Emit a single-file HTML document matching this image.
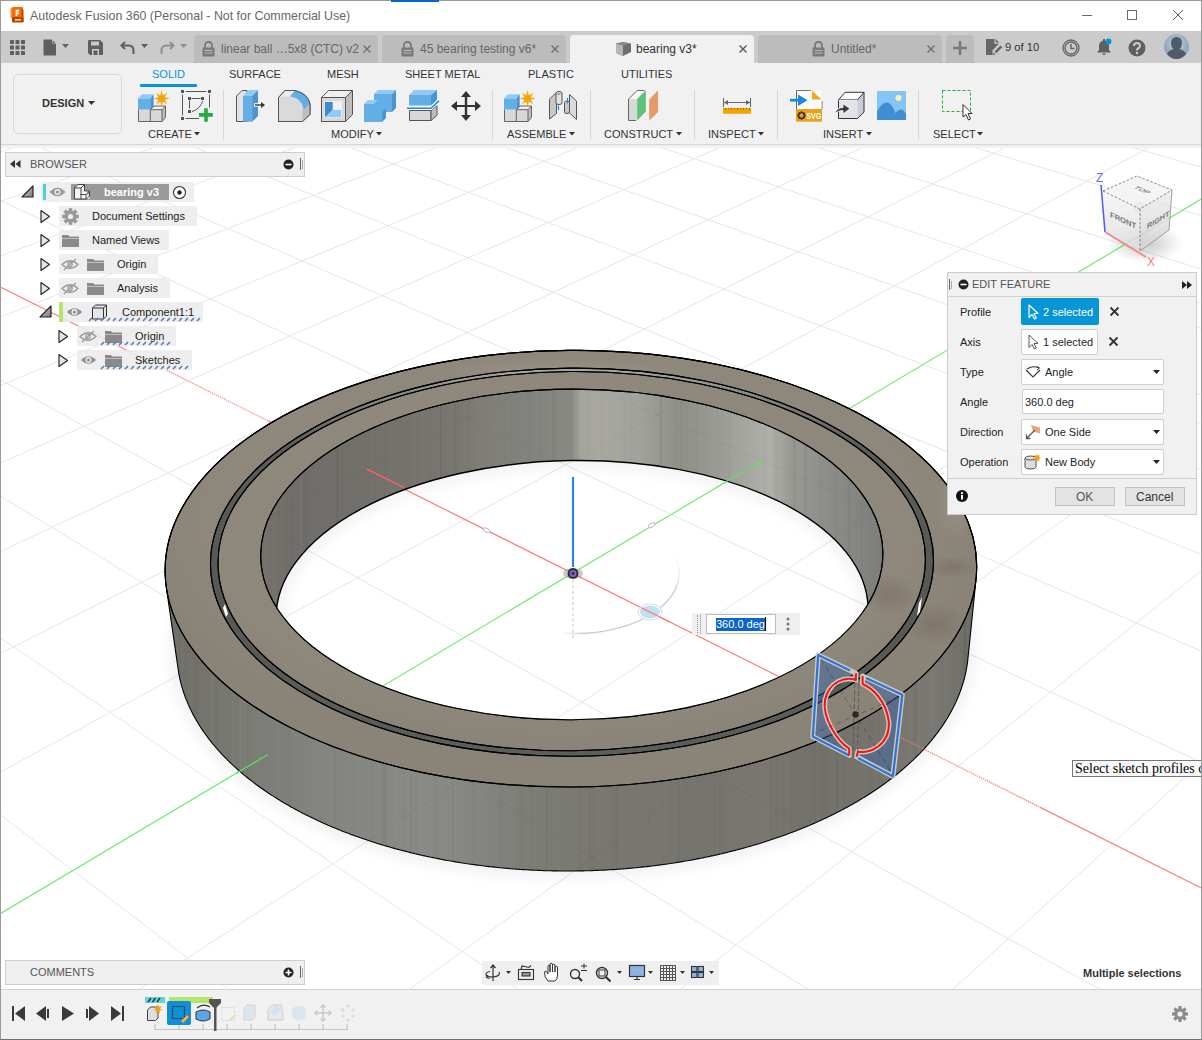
<!DOCTYPE html>
<html><head><meta charset="utf-8">
<style>
*{box-sizing:border-box;margin:0;padding:0}
html,body{width:1202px;height:1040px;overflow:hidden;background:#fff}
body{position:relative;font-family:"Liberation Sans",sans-serif;color:#333;font-size:11px}
.a{position:absolute}
.t{position:absolute;white-space:nowrap;line-height:1}
svg{position:absolute;overflow:visible}
#win{position:absolute;left:0;top:0;width:1202px;height:1040px;border:1px solid #9a9a9a;border-bottom-color:#6f6f6f;pointer-events:none;z-index:50}
#title{left:0;top:0;width:1202px;height:31px;background:#fff}
#tabbar{left:0;top:31px;width:1202px;height:32px;background:#cbcbcb}
.tab{position:absolute;top:35px;height:28px;background:#bcbcbc;border-radius:4px 4px 0 0}
.tabtxt{font-size:12px;color:#666;top:43px}
#ribbon{left:0;top:63px;width:1202px;height:82px;background:#f1f1f1;border-bottom:1px solid #d6d6d6}
.rtab{font-size:11px;color:#333;top:69px}
.rlab{font-size:11px;color:#333;top:129px}
.sep{position:absolute;top:90px;width:1px;height:50px;background:#d8d8d8}
.brow{position:absolute;height:20px;background:rgba(236,236,236,.88)}
.btxt{font-size:11px;color:#222}
.efl{font-size:11px;color:#222}
.fld{position:absolute;background:#fff;border:1px solid #cfcfcf;border-radius:2px}
</style></head><body>

<svg style="left:0;top:0" width="1202" height="1040" viewBox="0 0 1202 1040">
<defs>
 <clipPath id="vpclip"><rect x="1" y="145" width="1200" height="844"/></clipPath>
 <clipPath id="itclip"><path d="M882.9 553.1A311.1 165.3 -0.24 1 1 260.7 555.7A311.1 165.3 -0.24 1 1 882.9 553.1Z"/></clipPath>
 <clipPath id="ibclip"><path d="M868.1 608.4A296.0 153.0 -1.00 1 1 276.1 618.8A296.0 153.0 -1.00 1 1 868.1 608.4Z"/></clipPath>
 <clipPath id="giclip"><path d="M925.4 558.7A353.7 189.6 -0.40 1 1 218.0 563.6A353.7 189.6 -0.40 1 1 925.4 558.7Z"/></clipPath>
 <mask id="holemask" maskUnits="userSpaceOnUse" x="0" y="0" width="1202" height="1040">
  <rect x="0" y="0" width="1202" height="1040" fill="#fff"/>
  <path d="M868.1 608.4A296.0 153.0 -1.00 1 1 276.1 618.8A296.0 153.0 -1.00 1 1 868.1 608.4Z" fill="#000" clip-path="url(#itclip)"/>
 </mask>
 <linearGradient id="wallg" gradientUnits="userSpaceOnUse" x1="165" y1="0" x2="980" y2="0"><stop offset="0.000" stop-color="#6e6d68"/><stop offset="0.043" stop-color="#74736e"/><stop offset="0.104" stop-color="#7b7b76"/><stop offset="0.190" stop-color="#838480"/><stop offset="0.313" stop-color="#8a8b86"/><stop offset="0.374" stop-color="#868782"/><stop offset="0.436" stop-color="#7e7e79"/><stop offset="0.534" stop-color="#787772"/><stop offset="0.656" stop-color="#76746f"/><stop offset="0.730" stop-color="#7a7671"/><stop offset="0.804" stop-color="#72706b"/><stop offset="0.877" stop-color="#77746f"/><stop offset="0.951" stop-color="#7a7873"/><stop offset="1.000" stop-color="#6c6a65"/></linearGradient>
 <linearGradient id="innerg" gradientUnits="userSpaceOnUse" x1="260" y1="0" x2="885" y2="0"><stop offset="0.000" stop-color="#77736d"/><stop offset="0.064" stop-color="#6f6d69"/><stop offset="0.160" stop-color="#72706b"/><stop offset="0.288" stop-color="#787570"/><stop offset="0.368" stop-color="#7f7e79"/><stop offset="0.448" stop-color="#84847f"/><stop offset="0.499" stop-color="#8a8a85"/><stop offset="0.512" stop-color="#a4a49d"/><stop offset="0.544" stop-color="#a8a8a1"/><stop offset="0.608" stop-color="#a2a29c"/><stop offset="0.672" stop-color="#8f8f8a"/><stop offset="0.736" stop-color="#9c9c96"/><stop offset="0.816" stop-color="#b0b0aa"/><stop offset="0.848" stop-color="#9a9a95"/><stop offset="0.912" stop-color="#8c8c88"/><stop offset="1.000" stop-color="#7c7c78"/></linearGradient>
 <radialGradient id="topg" gradientUnits="userSpaceOnUse" cx="560" cy="520" r="420" gradientTransform="translate(560 520) scale(1 0.55) translate(-560 -520)">
  <stop offset="0" stop-color="#91897e"/>
  <stop offset="0.85" stop-color="#8e877b"/>
  <stop offset="1" stop-color="#8a8377"/>
 </radialGradient>
 <linearGradient id="grooveg" gradientUnits="userSpaceOnUse" x1="0" y1="368" x2="0" y2="756">
  <stop offset="0" stop-color="#a8a8a4"/>
  <stop offset="0.06" stop-color="#8a8a86"/>
  <stop offset="0.2" stop-color="#5a5c58"/>
  <stop offset="0.6" stop-color="#565854"/>
  <stop offset="1" stop-color="#5c5e5a"/>
 </linearGradient>
 <radialGradient id="blob" cx=".5" cy=".5" r=".5"><stop offset="0" stop-color="#66584e" stop-opacity=".3"/><stop offset="1" stop-color="#5e5048" stop-opacity="0"/></radialGradient>
 <radialGradient id="blobl" cx=".5" cy=".5" r=".5"><stop offset="0" stop-color="#a39e92" stop-opacity=".5"/><stop offset="1" stop-color="#a39e92" stop-opacity="0"/></radialGradient>
 <clipPath id="otclip"><path d="M976.7 566.2A405.8 218.3 -0.35 1 1 165.1 571.2A405.8 218.3 -0.35 1 1 976.7 566.2Z"/></clipPath>
 <clipPath id="hullclip"><path d="M165.1 570.2 L165.1 569.3 L165.1 568.3 L165.1 567.4 L165.2 566.4 L165.2 565.5 L165.3 564.5 L165.3 563.6 L165.4 562.6 L165.4 561.7 L165.5 560.7 L165.6 559.8 L165.7 558.8 L165.8 557.8 L165.9 556.9 L166.0 555.9 L166.1 555.0 L166.3 554.0 L166.4 553.1 L166.5 552.1 L166.7 551.2 L166.8 550.2 L167.0 549.3 L167.2 548.3 L167.4 547.4 L167.6 546.5 L167.8 545.5 L168.0 544.6 L168.2 543.6 L168.4 542.7 L168.6 541.7 L168.9 540.8 L169.1 539.8 L169.4 538.9 L169.6 537.9 L169.9 537.0 L170.2 536.1 L170.5 535.1 L170.7 534.2 L171.0 533.2 L171.3 532.3 L171.7 531.4 L172.0 530.4 L172.3 529.5 L172.6 528.5 L173.0 527.6 L173.3 526.7 L173.7 525.7 L174.1 524.8 L174.4 523.9 L174.8 522.9 L175.2 522.0 L175.6 521.1 L176.0 520.2 L176.4 519.2 L176.8 518.3 L177.3 517.4 L177.7 516.4 L178.1 515.5 L178.6 514.6 L179.0 513.7 L179.5 512.8 L180.0 511.8 L180.5 510.9 L180.9 510.0 L181.4 509.1 L181.9 508.2 L182.4 507.2 L183.0 506.3 L183.5 505.4 L184.0 504.5 L184.6 503.6 L185.1 502.7 L185.7 501.8 L186.2 500.9 L186.8 500.0 L187.4 499.1 L187.9 498.2 L188.5 497.3 L189.1 496.4 L189.7 495.5 L190.3 494.6 L191.0 493.7 L191.6 492.8 L192.2 491.9 L192.9 491.0 L193.5 490.1 L194.2 489.2 L194.8 488.3 L195.5 487.5 L196.2 486.6 L196.8 485.7 L197.5 484.8 L198.2 483.9 L198.9 483.1 L199.6 482.2 L200.4 481.3 L201.1 480.4 L201.8 479.6 L202.6 478.7 L203.3 477.8 L204.1 477.0 L204.8 476.1 L205.6 475.2 L206.4 474.4 L207.1 473.5 L207.9 472.7 L208.7 471.8 L209.5 471.0 L210.3 470.1 L211.2 469.3 L212.0 468.4 L212.8 467.6 L213.6 466.7 L214.5 465.9 L215.3 465.0 L216.2 464.2 L217.1 463.4 L217.9 462.5 L218.8 461.7 L219.7 460.9 L220.6 460.0 L221.5 459.2 L222.4 458.4 L223.3 457.6 L224.2 456.8 L225.1 455.9 L226.1 455.1 L227.0 454.3 L227.9 453.5 L228.9 452.7 L229.8 451.9 L230.8 451.1 L231.8 450.3 L232.8 449.5 L233.7 448.7 L234.7 447.9 L235.7 447.1 L236.7 446.3 L237.7 445.5 L238.7 444.7 L239.8 444.0 L240.8 443.2 L241.8 442.4 L242.9 441.6 L243.9 440.8 L245.0 440.1 L246.0 439.3 L247.1 438.5 L248.2 437.8 L249.2 437.0 L250.3 436.3 L251.4 435.5 L252.5 434.7 L253.6 434.0 L254.7 433.2 L255.8 432.5 L256.9 431.8 L258.1 431.0 L259.2 430.3 L260.3 429.5 L261.5 428.8 L262.6 428.1 L263.8 427.4 L264.9 426.6 L266.1 425.9 L267.3 425.2 L268.4 424.5 L269.6 423.8 L270.8 423.0 L272.0 422.3 L273.2 421.6 L274.4 420.9 L275.6 420.2 L276.8 419.5 L278.1 418.8 L279.3 418.2 L280.5 417.5 L281.8 416.8 L283.0 416.1 L284.3 415.4 L285.5 414.7 L286.8 414.1 L288.1 413.4 L289.3 412.7 L290.6 412.1 L291.9 411.4 L293.2 410.7 L294.5 410.1 L295.8 409.4 L297.1 408.8 L298.4 408.1 L299.7 407.5 L301.0 406.8 L302.3 406.2 L303.7 405.6 L305.0 404.9 L306.3 404.3 L307.7 403.7 L309.0 403.1 L310.4 402.5 L311.8 401.8 L313.1 401.2 L314.5 400.6 L315.9 400.0 L317.2 399.4 L318.6 398.8 L320.0 398.2 L321.4 397.6 L322.8 397.0 L324.2 396.4 L325.6 395.9 L327.0 395.3 L328.5 394.7 L329.9 394.1 L331.3 393.6 L332.7 393.0 L334.2 392.4 L335.6 391.9 L337.1 391.3 L338.5 390.8 L340.0 390.2 L341.4 389.7 L342.9 389.1 L344.3 388.6 L345.8 388.0 L347.3 387.5 L348.8 387.0 L350.3 386.4 L351.7 385.9 L353.2 385.4 L354.7 384.9 L356.2 384.4 L357.7 383.9 L359.2 383.4 L360.8 382.9 L362.3 382.4 L363.8 381.9 L365.3 381.4 L366.8 380.9 L368.4 380.4 L369.9 379.9 L371.5 379.4 L373.0 379.0 L374.5 378.5 L376.1 378.0 L377.7 377.6 L379.2 377.1 L380.8 376.7 L382.3 376.2 L383.9 375.8 L385.5 375.3 L387.1 374.9 L388.6 374.4 L390.2 374.0 L391.8 373.6 L393.4 373.2 L395.0 372.7 L396.6 372.3 L398.2 371.9 L399.8 371.5 L401.4 371.1 L403.0 370.7 L404.6 370.3 L406.2 369.9 L407.9 369.5 L409.5 369.1 L411.1 368.7 L412.7 368.3 L414.4 368.0 L416.0 367.6 L417.7 367.2 L419.3 366.9 L420.9 366.5 L422.6 366.1 L424.2 365.8 L425.9 365.4 L427.5 365.1 L429.2 364.8 L430.9 364.4 L432.5 364.1 L434.2 363.8 L435.9 363.4 L437.5 363.1 L439.2 362.8 L440.9 362.5 L442.6 362.2 L444.2 361.9 L445.9 361.6 L447.6 361.3 L449.3 361.0 L451.0 360.7 L452.7 360.4 L454.4 360.1 L456.1 359.8 L457.8 359.5 L459.5 359.3 L461.2 359.0 L462.9 358.7 L464.6 358.5 L466.3 358.2 L468.0 358.0 L469.7 357.7 L471.4 357.5 L473.2 357.2 L474.9 357.0 L476.6 356.8 L478.3 356.6 L480.0 356.3 L481.8 356.1 L483.5 355.9 L485.2 355.7 L487.0 355.5 L488.7 355.3 L490.4 355.1 L492.2 354.9 L493.9 354.7 L495.6 354.5 L497.4 354.3 L499.1 354.2 L500.9 354.0 L502.6 353.8 L504.4 353.6 L506.1 353.5 L507.9 353.3 L509.6 353.2 L511.4 353.0 L513.1 352.9 L514.9 352.7 L516.6 352.6 L518.4 352.5 L520.1 352.3 L521.9 352.2 L523.6 352.1 L525.4 352.0 L527.2 351.9 L528.9 351.8 L530.7 351.6 L532.4 351.5 L534.2 351.5 L536.0 351.4 L537.7 351.3 L539.5 351.2 L541.3 351.1 L543.0 351.0 L544.8 351.0 L546.6 350.9 L548.3 350.8 L550.1 350.8 L551.9 350.7 L553.6 350.7 L555.4 350.6 L557.2 350.6 L558.9 350.5 L560.7 350.5 L562.5 350.5 L564.3 350.5 L566.0 350.4 L567.8 350.4 L569.6 350.4 L571.3 350.4 L573.1 350.4 L574.9 350.4 L576.6 350.4 L578.4 350.4 L580.2 350.4 L582.0 350.4 L583.7 350.5 L585.5 350.5 L587.3 350.5 L589.0 350.5 L590.8 350.6 L592.6 350.6 L594.3 350.7 L596.1 350.7 L597.9 350.8 L599.6 350.8 L601.4 350.9 L603.2 350.9 L604.9 351.0 L606.7 351.1 L608.5 351.2 L610.2 351.3 L612.0 351.3 L613.8 351.4 L615.5 351.5 L617.3 351.6 L619.0 351.7 L620.8 351.8 L622.5 351.9 L624.3 352.1 L626.1 352.2 L627.8 352.3 L629.6 352.4 L631.3 352.6 L633.1 352.7 L634.8 352.8 L636.6 353.0 L638.3 353.1 L640.1 353.3 L641.8 353.4 L643.5 353.6 L645.3 353.8 L647.0 353.9 L648.8 354.1 L650.5 354.3 L652.2 354.5 L654.0 354.7 L655.7 354.8 L657.4 355.0 L659.2 355.2 L660.9 355.4 L662.6 355.6 L664.3 355.9 L666.1 356.1 L667.8 356.3 L669.5 356.5 L671.2 356.7 L672.9 357.0 L674.6 357.2 L676.3 357.4 L678.1 357.7 L679.8 357.9 L681.5 358.2 L683.2 358.4 L684.9 358.7 L686.6 359.0 L688.3 359.2 L690.0 359.5 L691.7 359.8 L693.3 360.0 L695.0 360.3 L696.7 360.6 L698.4 360.9 L700.1 361.2 L701.8 361.5 L703.4 361.8 L705.1 362.1 L706.8 362.4 L708.4 362.7 L710.1 363.0 L711.8 363.4 L713.4 363.7 L715.1 364.0 L716.7 364.3 L718.4 364.7 L720.0 365.0 L721.7 365.4 L723.3 365.7 L725.0 366.1 L726.6 366.4 L728.2 366.8 L729.9 367.2 L731.5 367.5 L733.1 367.9 L734.7 368.3 L736.4 368.6 L738.0 369.0 L739.6 369.4 L741.2 369.8 L742.8 370.2 L744.4 370.6 L746.0 371.0 L747.6 371.4 L749.2 371.8 L750.8 372.2 L752.4 372.7 L753.9 373.1 L755.5 373.5 L757.1 373.9 L758.7 374.4 L760.2 374.8 L761.8 375.2 L763.4 375.7 L764.9 376.1 L766.5 376.6 L768.0 377.0 L769.6 377.5 L771.1 377.9 L772.6 378.4 L774.2 378.9 L775.7 379.4 L777.2 379.8 L778.8 380.3 L780.3 380.8 L781.8 381.3 L783.3 381.8 L784.8 382.3 L786.3 382.8 L787.8 383.3 L789.3 383.8 L790.8 384.3 L792.3 384.8 L793.8 385.3 L795.2 385.8 L796.7 386.3 L798.2 386.9 L799.6 387.4 L801.1 387.9 L802.6 388.5 L804.0 389.0 L805.5 389.5 L806.9 390.1 L808.3 390.6 L809.8 391.2 L811.2 391.7 L812.6 392.3 L814.0 392.9 L815.5 393.4 L816.9 394.0 L818.3 394.6 L819.7 395.2 L821.1 395.7 L822.5 396.3 L823.9 396.9 L825.2 397.5 L826.6 398.1 L828.0 398.7 L829.4 399.3 L830.7 399.9 L832.1 400.5 L833.4 401.1 L834.8 401.7 L836.1 402.3 L837.5 402.9 L838.8 403.6 L840.1 404.2 L841.4 404.8 L842.8 405.4 L844.1 406.1 L845.4 406.7 L846.7 407.4 L848.0 408.0 L849.3 408.6 L850.5 409.3 L851.8 409.9 L853.1 410.6 L854.4 411.3 L855.6 411.9 L856.9 412.6 L858.1 413.3 L859.4 413.9 L860.6 414.6 L861.9 415.3 L863.1 416.0 L864.3 416.6 L865.6 417.3 L866.8 418.0 L868.0 418.7 L869.2 419.4 L870.4 420.1 L871.6 420.8 L872.8 421.5 L873.9 422.2 L875.1 422.9 L876.3 423.6 L877.4 424.3 L878.6 425.0 L879.8 425.8 L880.9 426.5 L882.0 427.2 L883.2 427.9 L884.3 428.7 L885.4 429.4 L886.5 430.1 L887.6 430.9 L888.8 431.6 L889.8 432.4 L890.9 433.1 L892.0 433.8 L893.1 434.6 L894.2 435.3 L895.2 436.1 L896.3 436.9 L897.4 437.6 L898.4 438.4 L899.5 439.1 L900.5 439.9 L901.5 440.7 L902.5 441.5 L903.6 442.2 L904.6 443.0 L905.6 443.8 L906.6 444.6 L907.6 445.4 L908.5 446.1 L909.5 446.9 L910.5 447.7 L911.5 448.5 L912.4 449.3 L913.4 450.1 L914.3 450.9 L915.3 451.7 L916.2 452.5 L917.1 453.3 L918.0 454.1 L919.0 455.0 L919.9 455.8 L920.8 456.6 L921.7 457.4 L922.5 458.2 L923.4 459.0 L924.3 459.9 L925.2 460.7 L926.0 461.5 L926.9 462.4 L927.7 463.2 L928.6 464.0 L929.4 464.9 L930.2 465.7 L931.0 466.5 L931.9 467.4 L932.7 468.2 L933.5 469.1 L934.3 469.9 L935.0 470.8 L935.8 471.6 L936.6 472.5 L937.4 473.3 L938.1 474.2 L938.9 475.1 L939.6 475.9 L940.3 476.8 L941.1 477.6 L941.8 478.5 L942.5 479.4 L943.2 480.3 L943.9 481.1 L944.6 482.0 L945.3 482.9 L946.0 483.7 L946.6 484.6 L947.3 485.5 L948.0 486.4 L948.6 487.3 L949.3 488.2 L949.9 489.0 L950.5 489.9 L951.1 490.8 L951.8 491.7 L952.4 492.6 L953.0 493.5 L953.6 494.4 L954.2 495.3 L954.7 496.2 L955.3 497.1 L955.9 498.0 L956.4 498.9 L957.0 499.8 L957.5 500.7 L958.0 501.6 L958.6 502.5 L959.1 503.4 L959.6 504.3 L960.1 505.2 L960.6 506.1 L961.1 507.1 L961.6 508.0 L962.1 508.9 L962.5 509.8 L963.0 510.7 L963.4 511.6 L963.9 512.6 L964.3 513.5 L964.7 514.4 L965.2 515.3 L965.6 516.3 L966.0 517.2 L966.4 518.1 L966.8 519.0 L967.2 520.0 L967.5 520.9 L967.9 521.8 L968.3 522.7 L968.6 523.7 L969.0 524.6 L969.3 525.5 L969.7 526.5 L970.0 527.4 L970.3 528.4 L970.6 529.3 L970.9 530.2 L971.2 531.2 L971.5 532.1 L971.8 533.0 L972.0 534.0 L972.3 534.9 L972.6 535.9 L972.8 536.8 L973.0 537.7 L973.3 538.7 L973.5 539.6 L973.7 540.6 L973.9 541.5 L974.1 542.5 L974.3 543.4 L974.5 544.4 L974.7 545.3 L974.9 546.3 L975.0 547.2 L975.2 548.2 L975.3 549.1 L975.5 550.1 L975.6 551.0 L975.7 551.9 L975.9 552.9 L976.0 553.8 L976.1 554.8 L976.2 555.8 L976.2 556.7 L976.3 557.7 L976.4 558.6 L976.5 559.6 L976.5 560.5 L976.6 561.5 L976.6 562.4 L976.6 563.4 L976.7 564.3 L976.7 565.3 L976.7 566.2 L976.7 567.2 L976.7 568.1 L976.7 569.1 L976.7 570.0 L976.6 571.0 L976.6 571.9 L976.5 572.9 L976.5 573.8 L976.4 574.8 L976.4 575.7 L976.3 576.7 L976.2 577.6 L976.1 578.6 L967.9 658.8 L967.8 659.8 L967.7 660.7 L967.6 661.7 L967.4 662.7 L967.3 663.6 L967.2 664.6 L967.0 665.6 L966.9 666.5 L966.7 667.5 L966.5 668.4 L966.4 669.4 L966.2 670.4 L966.0 671.3 L965.8 672.3 L965.6 673.3 L965.4 674.2 L965.2 675.2 L964.9 676.2 L964.7 677.1 L964.5 678.1 L964.2 679.0 L963.9 680.0 L963.7 680.9 L963.4 681.9 L963.1 682.9 L962.8 683.8 L962.6 684.8 L962.2 685.7 L961.9 686.7 L961.6 687.6 L961.3 688.6 L961.0 689.5 L960.6 690.5 L960.3 691.4 L959.9 692.4 L959.6 693.3 L959.2 694.3 L958.8 695.2 L958.4 696.2 L958.1 697.1 L957.7 698.1 L957.2 699.0 L956.8 700.0 L956.4 700.9 L956.0 701.9 L955.6 702.8 L955.1 703.7 L954.7 704.7 L954.2 705.6 L953.7 706.5 L953.3 707.5 L952.8 708.4 L952.3 709.3 L951.8 710.3 L951.3 711.2 L950.8 712.1 L950.3 713.1 L949.8 714.0 L949.3 714.9 L948.7 715.8 L948.2 716.8 L947.6 717.7 L947.1 718.6 L946.5 719.5 L945.9 720.4 L945.4 721.4 L944.8 722.3 L944.2 723.2 L943.6 724.1 L943.0 725.0 L942.4 725.9 L941.7 726.8 L941.1 727.7 L940.5 728.6 L939.8 729.5 L939.2 730.4 L938.5 731.3 L937.9 732.2 L937.2 733.1 L936.5 734.0 L935.8 734.9 L935.1 735.8 L934.4 736.7 L933.7 737.6 L933.0 738.5 L932.3 739.4 L931.6 740.3 L930.9 741.1 L930.1 742.0 L929.4 742.9 L928.6 743.8 L927.9 744.6 L927.1 745.5 L926.3 746.4 L925.5 747.3 L924.8 748.1 L924.0 749.0 L923.2 749.9 L922.4 750.7 L921.6 751.6 L920.7 752.4 L919.9 753.3 L919.1 754.1 L918.2 755.0 L917.4 755.8 L916.5 756.7 L915.7 757.5 L914.8 758.4 L913.9 759.2 L913.1 760.1 L912.2 760.9 L911.3 761.7 L910.4 762.6 L909.5 763.4 L908.6 764.2 L907.7 765.1 L906.7 765.9 L905.8 766.7 L904.9 767.5 L903.9 768.3 L903.0 769.2 L902.0 770.0 L901.1 770.8 L900.1 771.6 L899.1 772.4 L898.1 773.2 L897.2 774.0 L896.2 774.8 L895.2 775.6 L894.2 776.4 L893.2 777.2 L892.1 778.0 L891.1 778.8 L890.1 779.5 L889.1 780.3 L888.0 781.1 L887.0 781.9 L885.9 782.7 L884.9 783.4 L883.8 784.2 L882.7 785.0 L881.6 785.7 L880.6 786.5 L879.5 787.3 L878.4 788.0 L877.3 788.8 L876.2 789.5 L875.1 790.3 L873.9 791.0 L872.8 791.8 L871.7 792.5 L870.6 793.2 L869.4 794.0 L868.3 794.7 L867.1 795.4 L866.0 796.2 L864.8 796.9 L863.6 797.6 L862.5 798.3 L861.3 799.0 L860.1 799.7 L858.9 800.5 L857.7 801.2 L856.5 801.9 L855.3 802.6 L854.1 803.3 L852.9 804.0 L851.7 804.7 L850.4 805.3 L849.2 806.0 L848.0 806.7 L846.7 807.4 L845.5 808.1 L844.2 808.7 L842.9 809.4 L841.7 810.1 L840.4 810.7 L839.1 811.4 L837.9 812.1 L836.6 812.7 L835.3 813.4 L834.0 814.0 L832.7 814.7 L831.4 815.3 L830.1 816.0 L828.8 816.6 L827.4 817.2 L826.1 817.9 L824.8 818.5 L823.5 819.1 L822.1 819.7 L820.8 820.3 L819.4 821.0 L818.1 821.6 L816.7 822.2 L815.4 822.8 L814.0 823.4 L812.6 824.0 L811.2 824.6 L809.9 825.2 L808.5 825.8 L807.1 826.3 L805.7 826.9 L804.3 827.5 L802.9 828.1 L801.5 828.6 L800.1 829.2 L798.7 829.8 L797.2 830.3 L795.8 830.9 L794.4 831.4 L793.0 832.0 L791.5 832.5 L790.1 833.1 L788.6 833.6 L787.2 834.2 L785.7 834.7 L784.3 835.2 L782.8 835.7 L781.3 836.3 L779.9 836.8 L778.4 837.3 L776.9 837.8 L775.4 838.3 L774.0 838.8 L772.5 839.3 L771.0 839.8 L769.5 840.3 L768.0 840.8 L766.5 841.3 L765.0 841.8 L763.5 842.3 L761.9 842.7 L760.4 843.2 L758.9 843.7 L757.4 844.1 L755.8 844.6 L754.3 845.0 L752.8 845.5 L751.2 846.0 L749.7 846.4 L748.1 846.8 L746.6 847.3 L745.0 847.7 L743.5 848.1 L741.9 848.6 L740.4 849.0 L738.8 849.4 L737.2 849.8 L735.7 850.2 L734.1 850.6 L732.5 851.0 L730.9 851.4 L729.3 851.8 L727.8 852.2 L726.2 852.6 L724.6 853.0 L723.0 853.4 L721.4 853.8 L719.8 854.1 L718.2 854.5 L716.6 854.9 L714.9 855.2 L713.3 855.6 L711.7 855.9 L710.1 856.3 L708.5 856.6 L706.9 857.0 L705.2 857.3 L703.6 857.6 L702.0 858.0 L700.3 858.3 L698.7 858.6 L697.1 858.9 L695.4 859.2 L693.8 859.6 L692.1 859.9 L690.5 860.2 L688.8 860.5 L687.2 860.8 L685.5 861.0 L683.9 861.3 L682.2 861.6 L680.6 861.9 L678.9 862.2 L677.2 862.4 L675.6 862.7 L673.9 863.0 L672.2 863.2 L670.6 863.5 L668.9 863.7 L667.2 864.0 L665.5 864.2 L663.8 864.4 L662.2 864.7 L660.5 864.9 L658.8 865.1 L657.1 865.3 L655.4 865.6 L653.7 865.8 L652.0 866.0 L650.3 866.2 L648.7 866.4 L647.0 866.6 L645.3 866.8 L643.6 866.9 L641.9 867.1 L640.2 867.3 L638.5 867.5 L636.8 867.7 L635.1 867.8 L633.3 868.0 L631.6 868.1 L629.9 868.3 L628.2 868.4 L626.5 868.6 L624.8 868.7 L623.1 868.9 L621.4 869.0 L619.7 869.1 L617.9 869.2 L616.2 869.4 L614.5 869.5 L612.8 869.6 L611.1 869.7 L609.4 869.8 L607.6 869.9 L605.9 870.0 L604.2 870.1 L602.5 870.2 L600.7 870.3 L599.0 870.3 L597.3 870.4 L595.6 870.5 L593.9 870.5 L592.1 870.6 L590.4 870.7 L588.7 870.7 L587.0 870.8 L585.2 870.8 L583.5 870.9 L581.8 870.9 L580.0 870.9 L578.3 870.9 L576.6 871.0 L574.9 871.0 L573.1 871.0 L571.4 871.0 L569.7 871.0 L568.0 871.0 L566.2 871.0 L564.5 871.0 L562.8 871.0 L561.1 871.0 L559.3 871.0 L557.6 870.9 L555.9 870.9 L554.2 870.9 L552.4 870.9 L550.7 870.8 L549.0 870.8 L547.3 870.7 L545.5 870.7 L543.8 870.6 L542.1 870.5 L540.4 870.5 L538.6 870.4 L536.9 870.3 L535.2 870.3 L533.5 870.2 L531.8 870.1 L530.1 870.0 L528.3 869.9 L526.6 869.8 L524.9 869.7 L523.2 869.6 L521.5 869.5 L519.8 869.4 L518.1 869.2 L516.3 869.1 L514.6 869.0 L512.9 868.9 L511.2 868.7 L509.5 868.6 L507.8 868.4 L506.1 868.3 L504.4 868.1 L502.7 868.0 L501.0 867.8 L499.3 867.7 L497.6 867.5 L495.9 867.3 L494.2 867.1 L492.5 866.9 L490.8 866.8 L489.2 866.6 L487.5 866.4 L485.8 866.2 L484.1 866.0 L482.4 865.8 L480.7 865.5 L479.1 865.3 L477.4 865.1 L475.7 864.9 L474.0 864.7 L472.4 864.4 L470.7 864.2 L469.0 864.0 L467.4 863.7 L465.7 863.5 L464.0 863.2 L462.4 863.0 L460.7 862.7 L459.1 862.4 L457.4 862.2 L455.8 861.9 L454.1 861.6 L452.5 861.3 L450.8 861.0 L449.2 860.8 L447.5 860.5 L445.9 860.2 L444.3 859.9 L442.6 859.6 L441.0 859.2 L439.4 858.9 L437.7 858.6 L436.1 858.3 L434.5 858.0 L432.9 857.6 L431.3 857.3 L429.7 857.0 L428.1 856.6 L426.4 856.3 L424.8 855.9 L423.2 855.6 L421.6 855.2 L420.1 854.9 L418.5 854.5 L416.9 854.1 L415.3 853.8 L413.7 853.4 L412.1 853.0 L410.5 852.6 L409.0 852.2 L407.4 851.8 L405.8 851.4 L404.3 851.0 L402.7 850.6 L401.2 850.2 L399.6 849.8 L398.0 849.4 L396.5 849.0 L395.0 848.6 L393.4 848.1 L391.9 847.7 L390.3 847.3 L388.8 846.8 L387.3 846.4 L385.8 845.9 L384.2 845.5 L382.7 845.0 L381.2 844.6 L379.7 844.1 L378.2 843.7 L376.7 843.2 L375.2 842.7 L373.7 842.2 L372.2 841.8 L370.7 841.3 L369.2 840.8 L367.8 840.3 L366.3 839.8 L364.8 839.3 L363.3 838.8 L361.9 838.3 L360.4 837.8 L359.0 837.3 L357.5 836.8 L356.1 836.3 L354.6 835.7 L353.2 835.2 L351.7 834.7 L350.3 834.2 L348.9 833.6 L347.5 833.1 L346.0 832.5 L344.6 832.0 L343.2 831.4 L341.8 830.9 L340.4 830.3 L339.0 829.8 L337.6 829.2 L336.2 828.6 L334.9 828.1 L333.5 827.5 L332.1 826.9 L330.7 826.3 L329.4 825.7 L328.0 825.2 L326.7 824.6 L325.3 824.0 L324.0 823.4 L322.6 822.8 L321.3 822.2 L320.0 821.6 L318.6 821.0 L317.3 820.3 L316.0 819.7 L314.7 819.1 L313.4 818.5 L312.1 817.8 L310.8 817.2 L309.5 816.6 L308.2 815.9 L306.9 815.3 L305.6 814.7 L304.4 814.0 L303.1 813.4 L301.8 812.7 L300.6 812.1 L299.3 811.4 L298.1 810.7 L296.8 810.1 L295.6 809.4 L294.4 808.7 L293.1 808.1 L291.9 807.4 L290.7 806.7 L289.5 806.0 L288.3 805.3 L287.1 804.6 L285.9 804.0 L284.7 803.3 L283.5 802.6 L282.4 801.9 L281.2 801.2 L280.0 800.4 L278.9 799.7 L277.7 799.0 L276.6 798.3 L275.4 797.6 L274.3 796.9 L273.2 796.1 L272.0 795.4 L270.9 794.7 L269.8 794.0 L268.7 793.2 L267.6 792.5 L266.5 791.7 L265.4 791.0 L264.3 790.3 L263.2 789.5 L262.2 788.8 L261.1 788.0 L260.0 787.2 L259.0 786.5 L257.9 785.7 L256.9 785.0 L255.8 784.2 L254.8 783.4 L253.8 782.7 L252.8 781.9 L251.7 781.1 L250.7 780.3 L249.7 779.5 L248.7 778.8 L247.8 778.0 L246.8 777.2 L245.8 776.4 L244.8 775.6 L243.9 774.8 L242.9 774.0 L242.0 773.2 L241.0 772.4 L240.1 771.6 L239.1 770.8 L238.2 770.0 L237.3 769.2 L236.4 768.3 L235.5 767.5 L234.6 766.7 L233.7 765.9 L232.8 765.1 L231.9 764.2 L231.0 763.4 L230.2 762.6 L229.3 761.7 L228.4 760.9 L227.6 760.1 L226.8 759.2 L225.9 758.4 L225.1 757.5 L224.3 756.7 L223.4 755.8 L222.6 755.0 L221.8 754.1 L221.0 753.3 L220.3 752.4 L219.5 751.6 L218.7 750.7 L217.9 749.8 L217.2 749.0 L216.4 748.1 L215.7 747.2 L214.9 746.4 L214.2 745.5 L213.5 744.6 L212.7 743.8 L212.0 742.9 L211.3 742.0 L210.6 741.1 L209.9 740.2 L209.2 739.4 L208.5 738.5 L207.9 737.6 L207.2 736.7 L206.6 735.8 L205.9 734.9 L205.3 734.0 L204.6 733.1 L204.0 732.2 L203.4 731.3 L202.7 730.4 L202.1 729.5 L201.5 728.6 L200.9 727.7 L200.3 726.8 L199.8 725.9 L199.2 725.0 L198.6 724.1 L198.1 723.2 L197.5 722.3 L197.0 721.3 L196.4 720.4 L195.9 719.5 L195.4 718.6 L194.8 717.7 L194.3 716.8 L193.8 715.8 L193.3 714.9 L192.8 714.0 L192.4 713.1 L191.9 712.1 L191.4 711.2 L191.0 710.3 L190.5 709.3 L190.1 708.4 L189.6 707.5 L189.2 706.5 L188.8 705.6 L188.4 704.7 L188.0 703.7 L187.6 702.8 L187.2 701.8 L186.8 700.9 L186.4 700.0 L186.0 699.0 L185.7 698.1 L185.3 697.1 L184.9 696.2 L184.6 695.2 L184.3 694.3 L183.9 693.3 L183.6 692.4 L183.3 691.4 L183.0 690.5 L182.7 689.5 L182.4 688.6 L182.1 687.6 L181.9 686.7 L181.6 685.7 L181.3 684.8 L181.1 683.8 L180.8 682.9 L180.6 681.9 L180.4 680.9 L180.1 680.0 L179.9 679.0 L179.7 678.1 L179.5 677.1 L179.3 676.1 L179.1 675.2 L178.9 674.2 L178.8 673.3 L178.6 672.3 L178.5 671.3 L178.3 670.4 L178.2 669.4 L166.3 587.3 L166.2 586.4 L166.1 585.5 L165.9 584.5 L165.8 583.6 L165.7 582.6 L165.6 581.6 L165.6 580.7 L165.5 579.7 L165.4 578.8 L165.3 577.8 L165.3 576.9 L165.2 575.9 L165.2 575.0 L165.2 574.0 L165.1 573.1 L165.1 572.1 L165.1 571.2Z"/></clipPath>
 <filter id="blur6" x="-20%" y="-20%" width="140%" height="140%"><feGaussianBlur stdDeviation="6"/></filter>
 <filter id="blur3" x="-20%" y="-20%" width="140%" height="140%"><feGaussianBlur stdDeviation="3"/></filter>
</defs>
<g clip-path="url(#vpclip)">
 <g stroke="#e6e6e6" stroke-width="1" fill="none"><line x1="0.0" y1="814.6" x2="229.4" y2="990.0"/><line x1="0.0" y1="637.6" x2="518.9" y2="990.0"/><line x1="0.0" y1="495.7" x2="809.4" y2="990.0"/><line x1="0.0" y1="379.5" x2="1101.0" y2="990.0"/><line x1="0.0" y1="152.2" x2="21.7" y2="145.0"/><line x1="0.0" y1="201.5" x2="161.5" y2="145.0"/><line x1="0.0" y1="200.3" x2="1202.0" y2="762.8"/><line x1="0.0" y1="256.1" x2="301.7" y2="145.0"/><line x1="35.1" y1="145.0" x2="1202.0" y2="651.4"/><line x1="0.0" y1="317.1" x2="442.4" y2="145.0"/><line x1="188.9" y1="145.0" x2="1202.0" y2="554.7"/><line x1="0.0" y1="385.7" x2="583.6" y2="145.0"/><line x1="343.3" y1="145.0" x2="1202.0" y2="470.1"/><line x1="0.0" y1="463.2" x2="725.3" y2="145.0"/><line x1="498.2" y1="145.0" x2="1202.0" y2="395.4"/><line x1="0.0" y1="551.7" x2="867.5" y2="145.0"/><line x1="653.7" y1="145.0" x2="1202.0" y2="328.9"/><line x1="0.0" y1="653.7" x2="1010.1" y2="145.0"/><line x1="809.8" y1="145.0" x2="1202.0" y2="269.4"/><line x1="0.0" y1="772.3" x2="1153.3" y2="145.0"/><line x1="966.5" y1="145.0" x2="1202.0" y2="215.9"/><line x1="1123.8" y1="145.0" x2="1202.0" y2="167.4"/><line x1="138.0" y1="990.0" x2="1202.0" y2="300.0"/><line x1="408.4" y1="990.0" x2="1202.0" y2="420.4"/><line x1="679.9" y1="990.0" x2="1202.0" y2="570.2"/><line x1="952.2" y1="990.0" x2="1202.0" y2="761.6"/></g>
 <line x1="0" y1="286.8" x2="1202" y2="888.3" stroke="#ff7a7a" stroke-width="1.2"/>
 <line x1="0" y1="913.8" x2="1202" y2="198.6" stroke="#6fec6f" stroke-width="1.2"/>
 <path d="M968.5 645.2A395.8 221.9 -0.56 1 1 176.9 653.0A395.8 221.9 -0.56 1 1 968.5 645.2Z" fill="none" stroke="#000" stroke-opacity=".05" stroke-width="16" filter="url(#blur6)"/>
 <g mask="url(#holemask)">
  <path d="M165.1 570.2 L165.1 569.3 L165.1 568.3 L165.1 567.4 L165.2 566.4 L165.2 565.5 L165.3 564.5 L165.3 563.6 L165.4 562.6 L165.4 561.7 L165.5 560.7 L165.6 559.8 L165.7 558.8 L165.8 557.8 L165.9 556.9 L166.0 555.9 L166.1 555.0 L166.3 554.0 L166.4 553.1 L166.5 552.1 L166.7 551.2 L166.8 550.2 L167.0 549.3 L167.2 548.3 L167.4 547.4 L167.6 546.5 L167.8 545.5 L168.0 544.6 L168.2 543.6 L168.4 542.7 L168.6 541.7 L168.9 540.8 L169.1 539.8 L169.4 538.9 L169.6 537.9 L169.9 537.0 L170.2 536.1 L170.5 535.1 L170.7 534.2 L171.0 533.2 L171.3 532.3 L171.7 531.4 L172.0 530.4 L172.3 529.5 L172.6 528.5 L173.0 527.6 L173.3 526.7 L173.7 525.7 L174.1 524.8 L174.4 523.9 L174.8 522.9 L175.2 522.0 L175.6 521.1 L176.0 520.2 L176.4 519.2 L176.8 518.3 L177.3 517.4 L177.7 516.4 L178.1 515.5 L178.6 514.6 L179.0 513.7 L179.5 512.8 L180.0 511.8 L180.5 510.9 L180.9 510.0 L181.4 509.1 L181.9 508.2 L182.4 507.2 L183.0 506.3 L183.5 505.4 L184.0 504.5 L184.6 503.6 L185.1 502.7 L185.7 501.8 L186.2 500.9 L186.8 500.0 L187.4 499.1 L187.9 498.2 L188.5 497.3 L189.1 496.4 L189.7 495.5 L190.3 494.6 L191.0 493.7 L191.6 492.8 L192.2 491.9 L192.9 491.0 L193.5 490.1 L194.2 489.2 L194.8 488.3 L195.5 487.5 L196.2 486.6 L196.8 485.7 L197.5 484.8 L198.2 483.9 L198.9 483.1 L199.6 482.2 L200.4 481.3 L201.1 480.4 L201.8 479.6 L202.6 478.7 L203.3 477.8 L204.1 477.0 L204.8 476.1 L205.6 475.2 L206.4 474.4 L207.1 473.5 L207.9 472.7 L208.7 471.8 L209.5 471.0 L210.3 470.1 L211.2 469.3 L212.0 468.4 L212.8 467.6 L213.6 466.7 L214.5 465.9 L215.3 465.0 L216.2 464.2 L217.1 463.4 L217.9 462.5 L218.8 461.7 L219.7 460.9 L220.6 460.0 L221.5 459.2 L222.4 458.4 L223.3 457.6 L224.2 456.8 L225.1 455.9 L226.1 455.1 L227.0 454.3 L227.9 453.5 L228.9 452.7 L229.8 451.9 L230.8 451.1 L231.8 450.3 L232.8 449.5 L233.7 448.7 L234.7 447.9 L235.7 447.1 L236.7 446.3 L237.7 445.5 L238.7 444.7 L239.8 444.0 L240.8 443.2 L241.8 442.4 L242.9 441.6 L243.9 440.8 L245.0 440.1 L246.0 439.3 L247.1 438.5 L248.2 437.8 L249.2 437.0 L250.3 436.3 L251.4 435.5 L252.5 434.7 L253.6 434.0 L254.7 433.2 L255.8 432.5 L256.9 431.8 L258.1 431.0 L259.2 430.3 L260.3 429.5 L261.5 428.8 L262.6 428.1 L263.8 427.4 L264.9 426.6 L266.1 425.9 L267.3 425.2 L268.4 424.5 L269.6 423.8 L270.8 423.0 L272.0 422.3 L273.2 421.6 L274.4 420.9 L275.6 420.2 L276.8 419.5 L278.1 418.8 L279.3 418.2 L280.5 417.5 L281.8 416.8 L283.0 416.1 L284.3 415.4 L285.5 414.7 L286.8 414.1 L288.1 413.4 L289.3 412.7 L290.6 412.1 L291.9 411.4 L293.2 410.7 L294.5 410.1 L295.8 409.4 L297.1 408.8 L298.4 408.1 L299.7 407.5 L301.0 406.8 L302.3 406.2 L303.7 405.6 L305.0 404.9 L306.3 404.3 L307.7 403.7 L309.0 403.1 L310.4 402.5 L311.8 401.8 L313.1 401.2 L314.5 400.6 L315.9 400.0 L317.2 399.4 L318.6 398.8 L320.0 398.2 L321.4 397.6 L322.8 397.0 L324.2 396.4 L325.6 395.9 L327.0 395.3 L328.5 394.7 L329.9 394.1 L331.3 393.6 L332.7 393.0 L334.2 392.4 L335.6 391.9 L337.1 391.3 L338.5 390.8 L340.0 390.2 L341.4 389.7 L342.9 389.1 L344.3 388.6 L345.8 388.0 L347.3 387.5 L348.8 387.0 L350.3 386.4 L351.7 385.9 L353.2 385.4 L354.7 384.9 L356.2 384.4 L357.7 383.9 L359.2 383.4 L360.8 382.9 L362.3 382.4 L363.8 381.9 L365.3 381.4 L366.8 380.9 L368.4 380.4 L369.9 379.9 L371.5 379.4 L373.0 379.0 L374.5 378.5 L376.1 378.0 L377.7 377.6 L379.2 377.1 L380.8 376.7 L382.3 376.2 L383.9 375.8 L385.5 375.3 L387.1 374.9 L388.6 374.4 L390.2 374.0 L391.8 373.6 L393.4 373.2 L395.0 372.7 L396.6 372.3 L398.2 371.9 L399.8 371.5 L401.4 371.1 L403.0 370.7 L404.6 370.3 L406.2 369.9 L407.9 369.5 L409.5 369.1 L411.1 368.7 L412.7 368.3 L414.4 368.0 L416.0 367.6 L417.7 367.2 L419.3 366.9 L420.9 366.5 L422.6 366.1 L424.2 365.8 L425.9 365.4 L427.5 365.1 L429.2 364.8 L430.9 364.4 L432.5 364.1 L434.2 363.8 L435.9 363.4 L437.5 363.1 L439.2 362.8 L440.9 362.5 L442.6 362.2 L444.2 361.9 L445.9 361.6 L447.6 361.3 L449.3 361.0 L451.0 360.7 L452.7 360.4 L454.4 360.1 L456.1 359.8 L457.8 359.5 L459.5 359.3 L461.2 359.0 L462.9 358.7 L464.6 358.5 L466.3 358.2 L468.0 358.0 L469.7 357.7 L471.4 357.5 L473.2 357.2 L474.9 357.0 L476.6 356.8 L478.3 356.6 L480.0 356.3 L481.8 356.1 L483.5 355.9 L485.2 355.7 L487.0 355.5 L488.7 355.3 L490.4 355.1 L492.2 354.9 L493.9 354.7 L495.6 354.5 L497.4 354.3 L499.1 354.2 L500.9 354.0 L502.6 353.8 L504.4 353.6 L506.1 353.5 L507.9 353.3 L509.6 353.2 L511.4 353.0 L513.1 352.9 L514.9 352.7 L516.6 352.6 L518.4 352.5 L520.1 352.3 L521.9 352.2 L523.6 352.1 L525.4 352.0 L527.2 351.9 L528.9 351.8 L530.7 351.6 L532.4 351.5 L534.2 351.5 L536.0 351.4 L537.7 351.3 L539.5 351.2 L541.3 351.1 L543.0 351.0 L544.8 351.0 L546.6 350.9 L548.3 350.8 L550.1 350.8 L551.9 350.7 L553.6 350.7 L555.4 350.6 L557.2 350.6 L558.9 350.5 L560.7 350.5 L562.5 350.5 L564.3 350.5 L566.0 350.4 L567.8 350.4 L569.6 350.4 L571.3 350.4 L573.1 350.4 L574.9 350.4 L576.6 350.4 L578.4 350.4 L580.2 350.4 L582.0 350.4 L583.7 350.5 L585.5 350.5 L587.3 350.5 L589.0 350.5 L590.8 350.6 L592.6 350.6 L594.3 350.7 L596.1 350.7 L597.9 350.8 L599.6 350.8 L601.4 350.9 L603.2 350.9 L604.9 351.0 L606.7 351.1 L608.5 351.2 L610.2 351.3 L612.0 351.3 L613.8 351.4 L615.5 351.5 L617.3 351.6 L619.0 351.7 L620.8 351.8 L622.5 351.9 L624.3 352.1 L626.1 352.2 L627.8 352.3 L629.6 352.4 L631.3 352.6 L633.1 352.7 L634.8 352.8 L636.6 353.0 L638.3 353.1 L640.1 353.3 L641.8 353.4 L643.5 353.6 L645.3 353.8 L647.0 353.9 L648.8 354.1 L650.5 354.3 L652.2 354.5 L654.0 354.7 L655.7 354.8 L657.4 355.0 L659.2 355.2 L660.9 355.4 L662.6 355.6 L664.3 355.9 L666.1 356.1 L667.8 356.3 L669.5 356.5 L671.2 356.7 L672.9 357.0 L674.6 357.2 L676.3 357.4 L678.1 357.7 L679.8 357.9 L681.5 358.2 L683.2 358.4 L684.9 358.7 L686.6 359.0 L688.3 359.2 L690.0 359.5 L691.7 359.8 L693.3 360.0 L695.0 360.3 L696.7 360.6 L698.4 360.9 L700.1 361.2 L701.8 361.5 L703.4 361.8 L705.1 362.1 L706.8 362.4 L708.4 362.7 L710.1 363.0 L711.8 363.4 L713.4 363.7 L715.1 364.0 L716.7 364.3 L718.4 364.7 L720.0 365.0 L721.7 365.4 L723.3 365.7 L725.0 366.1 L726.6 366.4 L728.2 366.8 L729.9 367.2 L731.5 367.5 L733.1 367.9 L734.7 368.3 L736.4 368.6 L738.0 369.0 L739.6 369.4 L741.2 369.8 L742.8 370.2 L744.4 370.6 L746.0 371.0 L747.6 371.4 L749.2 371.8 L750.8 372.2 L752.4 372.7 L753.9 373.1 L755.5 373.5 L757.1 373.9 L758.7 374.4 L760.2 374.8 L761.8 375.2 L763.4 375.7 L764.9 376.1 L766.5 376.6 L768.0 377.0 L769.6 377.5 L771.1 377.9 L772.6 378.4 L774.2 378.9 L775.7 379.4 L777.2 379.8 L778.8 380.3 L780.3 380.8 L781.8 381.3 L783.3 381.8 L784.8 382.3 L786.3 382.8 L787.8 383.3 L789.3 383.8 L790.8 384.3 L792.3 384.8 L793.8 385.3 L795.2 385.8 L796.7 386.3 L798.2 386.9 L799.6 387.4 L801.1 387.9 L802.6 388.5 L804.0 389.0 L805.5 389.5 L806.9 390.1 L808.3 390.6 L809.8 391.2 L811.2 391.7 L812.6 392.3 L814.0 392.9 L815.5 393.4 L816.9 394.0 L818.3 394.6 L819.7 395.2 L821.1 395.7 L822.5 396.3 L823.9 396.9 L825.2 397.5 L826.6 398.1 L828.0 398.7 L829.4 399.3 L830.7 399.9 L832.1 400.5 L833.4 401.1 L834.8 401.7 L836.1 402.3 L837.5 402.9 L838.8 403.6 L840.1 404.2 L841.4 404.8 L842.8 405.4 L844.1 406.1 L845.4 406.7 L846.7 407.4 L848.0 408.0 L849.3 408.6 L850.5 409.3 L851.8 409.9 L853.1 410.6 L854.4 411.3 L855.6 411.9 L856.9 412.6 L858.1 413.3 L859.4 413.9 L860.6 414.6 L861.9 415.3 L863.1 416.0 L864.3 416.6 L865.6 417.3 L866.8 418.0 L868.0 418.7 L869.2 419.4 L870.4 420.1 L871.6 420.8 L872.8 421.5 L873.9 422.2 L875.1 422.9 L876.3 423.6 L877.4 424.3 L878.6 425.0 L879.8 425.8 L880.9 426.5 L882.0 427.2 L883.2 427.9 L884.3 428.7 L885.4 429.4 L886.5 430.1 L887.6 430.9 L888.8 431.6 L889.8 432.4 L890.9 433.1 L892.0 433.8 L893.1 434.6 L894.2 435.3 L895.2 436.1 L896.3 436.9 L897.4 437.6 L898.4 438.4 L899.5 439.1 L900.5 439.9 L901.5 440.7 L902.5 441.5 L903.6 442.2 L904.6 443.0 L905.6 443.8 L906.6 444.6 L907.6 445.4 L908.5 446.1 L909.5 446.9 L910.5 447.7 L911.5 448.5 L912.4 449.3 L913.4 450.1 L914.3 450.9 L915.3 451.7 L916.2 452.5 L917.1 453.3 L918.0 454.1 L919.0 455.0 L919.9 455.8 L920.8 456.6 L921.7 457.4 L922.5 458.2 L923.4 459.0 L924.3 459.9 L925.2 460.7 L926.0 461.5 L926.9 462.4 L927.7 463.2 L928.6 464.0 L929.4 464.9 L930.2 465.7 L931.0 466.5 L931.9 467.4 L932.7 468.2 L933.5 469.1 L934.3 469.9 L935.0 470.8 L935.8 471.6 L936.6 472.5 L937.4 473.3 L938.1 474.2 L938.9 475.1 L939.6 475.9 L940.3 476.8 L941.1 477.6 L941.8 478.5 L942.5 479.4 L943.2 480.3 L943.9 481.1 L944.6 482.0 L945.3 482.9 L946.0 483.7 L946.6 484.6 L947.3 485.5 L948.0 486.4 L948.6 487.3 L949.3 488.2 L949.9 489.0 L950.5 489.9 L951.1 490.8 L951.8 491.7 L952.4 492.6 L953.0 493.5 L953.6 494.4 L954.2 495.3 L954.7 496.2 L955.3 497.1 L955.9 498.0 L956.4 498.9 L957.0 499.8 L957.5 500.7 L958.0 501.6 L958.6 502.5 L959.1 503.4 L959.6 504.3 L960.1 505.2 L960.6 506.1 L961.1 507.1 L961.6 508.0 L962.1 508.9 L962.5 509.8 L963.0 510.7 L963.4 511.6 L963.9 512.6 L964.3 513.5 L964.7 514.4 L965.2 515.3 L965.6 516.3 L966.0 517.2 L966.4 518.1 L966.8 519.0 L967.2 520.0 L967.5 520.9 L967.9 521.8 L968.3 522.7 L968.6 523.7 L969.0 524.6 L969.3 525.5 L969.7 526.5 L970.0 527.4 L970.3 528.4 L970.6 529.3 L970.9 530.2 L971.2 531.2 L971.5 532.1 L971.8 533.0 L972.0 534.0 L972.3 534.9 L972.6 535.9 L972.8 536.8 L973.0 537.7 L973.3 538.7 L973.5 539.6 L973.7 540.6 L973.9 541.5 L974.1 542.5 L974.3 543.4 L974.5 544.4 L974.7 545.3 L974.9 546.3 L975.0 547.2 L975.2 548.2 L975.3 549.1 L975.5 550.1 L975.6 551.0 L975.7 551.9 L975.9 552.9 L976.0 553.8 L976.1 554.8 L976.2 555.8 L976.2 556.7 L976.3 557.7 L976.4 558.6 L976.5 559.6 L976.5 560.5 L976.6 561.5 L976.6 562.4 L976.6 563.4 L976.7 564.3 L976.7 565.3 L976.7 566.2 L976.7 567.2 L976.7 568.1 L976.7 569.1 L976.7 570.0 L976.6 571.0 L976.6 571.9 L976.5 572.9 L976.5 573.8 L976.4 574.8 L976.4 575.7 L976.3 576.7 L976.2 577.6 L976.1 578.6 L967.9 658.8 L967.8 659.8 L967.7 660.7 L967.6 661.7 L967.4 662.7 L967.3 663.6 L967.2 664.6 L967.0 665.6 L966.9 666.5 L966.7 667.5 L966.5 668.4 L966.4 669.4 L966.2 670.4 L966.0 671.3 L965.8 672.3 L965.6 673.3 L965.4 674.2 L965.2 675.2 L964.9 676.2 L964.7 677.1 L964.5 678.1 L964.2 679.0 L963.9 680.0 L963.7 680.9 L963.4 681.9 L963.1 682.9 L962.8 683.8 L962.6 684.8 L962.2 685.7 L961.9 686.7 L961.6 687.6 L961.3 688.6 L961.0 689.5 L960.6 690.5 L960.3 691.4 L959.9 692.4 L959.6 693.3 L959.2 694.3 L958.8 695.2 L958.4 696.2 L958.1 697.1 L957.7 698.1 L957.2 699.0 L956.8 700.0 L956.4 700.9 L956.0 701.9 L955.6 702.8 L955.1 703.7 L954.7 704.7 L954.2 705.6 L953.7 706.5 L953.3 707.5 L952.8 708.4 L952.3 709.3 L951.8 710.3 L951.3 711.2 L950.8 712.1 L950.3 713.1 L949.8 714.0 L949.3 714.9 L948.7 715.8 L948.2 716.8 L947.6 717.7 L947.1 718.6 L946.5 719.5 L945.9 720.4 L945.4 721.4 L944.8 722.3 L944.2 723.2 L943.6 724.1 L943.0 725.0 L942.4 725.9 L941.7 726.8 L941.1 727.7 L940.5 728.6 L939.8 729.5 L939.2 730.4 L938.5 731.3 L937.9 732.2 L937.2 733.1 L936.5 734.0 L935.8 734.9 L935.1 735.8 L934.4 736.7 L933.7 737.6 L933.0 738.5 L932.3 739.4 L931.6 740.3 L930.9 741.1 L930.1 742.0 L929.4 742.9 L928.6 743.8 L927.9 744.6 L927.1 745.5 L926.3 746.4 L925.5 747.3 L924.8 748.1 L924.0 749.0 L923.2 749.9 L922.4 750.7 L921.6 751.6 L920.7 752.4 L919.9 753.3 L919.1 754.1 L918.2 755.0 L917.4 755.8 L916.5 756.7 L915.7 757.5 L914.8 758.4 L913.9 759.2 L913.1 760.1 L912.2 760.9 L911.3 761.7 L910.4 762.6 L909.5 763.4 L908.6 764.2 L907.7 765.1 L906.7 765.9 L905.8 766.7 L904.9 767.5 L903.9 768.3 L903.0 769.2 L902.0 770.0 L901.1 770.8 L900.1 771.6 L899.1 772.4 L898.1 773.2 L897.2 774.0 L896.2 774.8 L895.2 775.6 L894.2 776.4 L893.2 777.2 L892.1 778.0 L891.1 778.8 L890.1 779.5 L889.1 780.3 L888.0 781.1 L887.0 781.9 L885.9 782.7 L884.9 783.4 L883.8 784.2 L882.7 785.0 L881.6 785.7 L880.6 786.5 L879.5 787.3 L878.4 788.0 L877.3 788.8 L876.2 789.5 L875.1 790.3 L873.9 791.0 L872.8 791.8 L871.7 792.5 L870.6 793.2 L869.4 794.0 L868.3 794.7 L867.1 795.4 L866.0 796.2 L864.8 796.9 L863.6 797.6 L862.5 798.3 L861.3 799.0 L860.1 799.7 L858.9 800.5 L857.7 801.2 L856.5 801.9 L855.3 802.6 L854.1 803.3 L852.9 804.0 L851.7 804.7 L850.4 805.3 L849.2 806.0 L848.0 806.7 L846.7 807.4 L845.5 808.1 L844.2 808.7 L842.9 809.4 L841.7 810.1 L840.4 810.7 L839.1 811.4 L837.9 812.1 L836.6 812.7 L835.3 813.4 L834.0 814.0 L832.7 814.7 L831.4 815.3 L830.1 816.0 L828.8 816.6 L827.4 817.2 L826.1 817.9 L824.8 818.5 L823.5 819.1 L822.1 819.7 L820.8 820.3 L819.4 821.0 L818.1 821.6 L816.7 822.2 L815.4 822.8 L814.0 823.4 L812.6 824.0 L811.2 824.6 L809.9 825.2 L808.5 825.8 L807.1 826.3 L805.7 826.9 L804.3 827.5 L802.9 828.1 L801.5 828.6 L800.1 829.2 L798.7 829.8 L797.2 830.3 L795.8 830.9 L794.4 831.4 L793.0 832.0 L791.5 832.5 L790.1 833.1 L788.6 833.6 L787.2 834.2 L785.7 834.7 L784.3 835.2 L782.8 835.7 L781.3 836.3 L779.9 836.8 L778.4 837.3 L776.9 837.8 L775.4 838.3 L774.0 838.8 L772.5 839.3 L771.0 839.8 L769.5 840.3 L768.0 840.8 L766.5 841.3 L765.0 841.8 L763.5 842.3 L761.9 842.7 L760.4 843.2 L758.9 843.7 L757.4 844.1 L755.8 844.6 L754.3 845.0 L752.8 845.5 L751.2 846.0 L749.7 846.4 L748.1 846.8 L746.6 847.3 L745.0 847.7 L743.5 848.1 L741.9 848.6 L740.4 849.0 L738.8 849.4 L737.2 849.8 L735.7 850.2 L734.1 850.6 L732.5 851.0 L730.9 851.4 L729.3 851.8 L727.8 852.2 L726.2 852.6 L724.6 853.0 L723.0 853.4 L721.4 853.8 L719.8 854.1 L718.2 854.5 L716.6 854.9 L714.9 855.2 L713.3 855.6 L711.7 855.9 L710.1 856.3 L708.5 856.6 L706.9 857.0 L705.2 857.3 L703.6 857.6 L702.0 858.0 L700.3 858.3 L698.7 858.6 L697.1 858.9 L695.4 859.2 L693.8 859.6 L692.1 859.9 L690.5 860.2 L688.8 860.5 L687.2 860.8 L685.5 861.0 L683.9 861.3 L682.2 861.6 L680.6 861.9 L678.9 862.2 L677.2 862.4 L675.6 862.7 L673.9 863.0 L672.2 863.2 L670.6 863.5 L668.9 863.7 L667.2 864.0 L665.5 864.2 L663.8 864.4 L662.2 864.7 L660.5 864.9 L658.8 865.1 L657.1 865.3 L655.4 865.6 L653.7 865.8 L652.0 866.0 L650.3 866.2 L648.7 866.4 L647.0 866.6 L645.3 866.8 L643.6 866.9 L641.9 867.1 L640.2 867.3 L638.5 867.5 L636.8 867.7 L635.1 867.8 L633.3 868.0 L631.6 868.1 L629.9 868.3 L628.2 868.4 L626.5 868.6 L624.8 868.7 L623.1 868.9 L621.4 869.0 L619.7 869.1 L617.9 869.2 L616.2 869.4 L614.5 869.5 L612.8 869.6 L611.1 869.7 L609.4 869.8 L607.6 869.9 L605.9 870.0 L604.2 870.1 L602.5 870.2 L600.7 870.3 L599.0 870.3 L597.3 870.4 L595.6 870.5 L593.9 870.5 L592.1 870.6 L590.4 870.7 L588.7 870.7 L587.0 870.8 L585.2 870.8 L583.5 870.9 L581.8 870.9 L580.0 870.9 L578.3 870.9 L576.6 871.0 L574.9 871.0 L573.1 871.0 L571.4 871.0 L569.7 871.0 L568.0 871.0 L566.2 871.0 L564.5 871.0 L562.8 871.0 L561.1 871.0 L559.3 871.0 L557.6 870.9 L555.9 870.9 L554.2 870.9 L552.4 870.9 L550.7 870.8 L549.0 870.8 L547.3 870.7 L545.5 870.7 L543.8 870.6 L542.1 870.5 L540.4 870.5 L538.6 870.4 L536.9 870.3 L535.2 870.3 L533.5 870.2 L531.8 870.1 L530.1 870.0 L528.3 869.9 L526.6 869.8 L524.9 869.7 L523.2 869.6 L521.5 869.5 L519.8 869.4 L518.1 869.2 L516.3 869.1 L514.6 869.0 L512.9 868.9 L511.2 868.7 L509.5 868.6 L507.8 868.4 L506.1 868.3 L504.4 868.1 L502.7 868.0 L501.0 867.8 L499.3 867.7 L497.6 867.5 L495.9 867.3 L494.2 867.1 L492.5 866.9 L490.8 866.8 L489.2 866.6 L487.5 866.4 L485.8 866.2 L484.1 866.0 L482.4 865.8 L480.7 865.5 L479.1 865.3 L477.4 865.1 L475.7 864.9 L474.0 864.7 L472.4 864.4 L470.7 864.2 L469.0 864.0 L467.4 863.7 L465.7 863.5 L464.0 863.2 L462.4 863.0 L460.7 862.7 L459.1 862.4 L457.4 862.2 L455.8 861.9 L454.1 861.6 L452.5 861.3 L450.8 861.0 L449.2 860.8 L447.5 860.5 L445.9 860.2 L444.3 859.9 L442.6 859.6 L441.0 859.2 L439.4 858.9 L437.7 858.6 L436.1 858.3 L434.5 858.0 L432.9 857.6 L431.3 857.3 L429.7 857.0 L428.1 856.6 L426.4 856.3 L424.8 855.9 L423.2 855.6 L421.6 855.2 L420.1 854.9 L418.5 854.5 L416.9 854.1 L415.3 853.8 L413.7 853.4 L412.1 853.0 L410.5 852.6 L409.0 852.2 L407.4 851.8 L405.8 851.4 L404.3 851.0 L402.7 850.6 L401.2 850.2 L399.6 849.8 L398.0 849.4 L396.5 849.0 L395.0 848.6 L393.4 848.1 L391.9 847.7 L390.3 847.3 L388.8 846.8 L387.3 846.4 L385.8 845.9 L384.2 845.5 L382.7 845.0 L381.2 844.6 L379.7 844.1 L378.2 843.7 L376.7 843.2 L375.2 842.7 L373.7 842.2 L372.2 841.8 L370.7 841.3 L369.2 840.8 L367.8 840.3 L366.3 839.8 L364.8 839.3 L363.3 838.8 L361.9 838.3 L360.4 837.8 L359.0 837.3 L357.5 836.8 L356.1 836.3 L354.6 835.7 L353.2 835.2 L351.7 834.7 L350.3 834.2 L348.9 833.6 L347.5 833.1 L346.0 832.5 L344.6 832.0 L343.2 831.4 L341.8 830.9 L340.4 830.3 L339.0 829.8 L337.6 829.2 L336.2 828.6 L334.9 828.1 L333.5 827.5 L332.1 826.9 L330.7 826.3 L329.4 825.7 L328.0 825.2 L326.7 824.6 L325.3 824.0 L324.0 823.4 L322.6 822.8 L321.3 822.2 L320.0 821.6 L318.6 821.0 L317.3 820.3 L316.0 819.7 L314.7 819.1 L313.4 818.5 L312.1 817.8 L310.8 817.2 L309.5 816.6 L308.2 815.9 L306.9 815.3 L305.6 814.7 L304.4 814.0 L303.1 813.4 L301.8 812.7 L300.6 812.1 L299.3 811.4 L298.1 810.7 L296.8 810.1 L295.6 809.4 L294.4 808.7 L293.1 808.1 L291.9 807.4 L290.7 806.7 L289.5 806.0 L288.3 805.3 L287.1 804.6 L285.9 804.0 L284.7 803.3 L283.5 802.6 L282.4 801.9 L281.2 801.2 L280.0 800.4 L278.9 799.7 L277.7 799.0 L276.6 798.3 L275.4 797.6 L274.3 796.9 L273.2 796.1 L272.0 795.4 L270.9 794.7 L269.8 794.0 L268.7 793.2 L267.6 792.5 L266.5 791.7 L265.4 791.0 L264.3 790.3 L263.2 789.5 L262.2 788.8 L261.1 788.0 L260.0 787.2 L259.0 786.5 L257.9 785.7 L256.9 785.0 L255.8 784.2 L254.8 783.4 L253.8 782.7 L252.8 781.9 L251.7 781.1 L250.7 780.3 L249.7 779.5 L248.7 778.8 L247.8 778.0 L246.8 777.2 L245.8 776.4 L244.8 775.6 L243.9 774.8 L242.9 774.0 L242.0 773.2 L241.0 772.4 L240.1 771.6 L239.1 770.8 L238.2 770.0 L237.3 769.2 L236.4 768.3 L235.5 767.5 L234.6 766.7 L233.7 765.9 L232.8 765.1 L231.9 764.2 L231.0 763.4 L230.2 762.6 L229.3 761.7 L228.4 760.9 L227.6 760.1 L226.8 759.2 L225.9 758.4 L225.1 757.5 L224.3 756.7 L223.4 755.8 L222.6 755.0 L221.8 754.1 L221.0 753.3 L220.3 752.4 L219.5 751.6 L218.7 750.7 L217.9 749.8 L217.2 749.0 L216.4 748.1 L215.7 747.2 L214.9 746.4 L214.2 745.5 L213.5 744.6 L212.7 743.8 L212.0 742.9 L211.3 742.0 L210.6 741.1 L209.9 740.2 L209.2 739.4 L208.5 738.5 L207.9 737.6 L207.2 736.7 L206.6 735.8 L205.9 734.9 L205.3 734.0 L204.6 733.1 L204.0 732.2 L203.4 731.3 L202.7 730.4 L202.1 729.5 L201.5 728.6 L200.9 727.7 L200.3 726.8 L199.8 725.9 L199.2 725.0 L198.6 724.1 L198.1 723.2 L197.5 722.3 L197.0 721.3 L196.4 720.4 L195.9 719.5 L195.4 718.6 L194.8 717.7 L194.3 716.8 L193.8 715.8 L193.3 714.9 L192.8 714.0 L192.4 713.1 L191.9 712.1 L191.4 711.2 L191.0 710.3 L190.5 709.3 L190.1 708.4 L189.6 707.5 L189.2 706.5 L188.8 705.6 L188.4 704.7 L188.0 703.7 L187.6 702.8 L187.2 701.8 L186.8 700.9 L186.4 700.0 L186.0 699.0 L185.7 698.1 L185.3 697.1 L184.9 696.2 L184.6 695.2 L184.3 694.3 L183.9 693.3 L183.6 692.4 L183.3 691.4 L183.0 690.5 L182.7 689.5 L182.4 688.6 L182.1 687.6 L181.9 686.7 L181.6 685.7 L181.3 684.8 L181.1 683.8 L180.8 682.9 L180.6 681.9 L180.4 680.9 L180.1 680.0 L179.9 679.0 L179.7 678.1 L179.5 677.1 L179.3 676.1 L179.1 675.2 L178.9 674.2 L178.8 673.3 L178.6 672.3 L178.5 671.3 L178.3 670.4 L178.2 669.4 L166.3 587.3 L166.2 586.4 L166.1 585.5 L165.9 584.5 L165.8 583.6 L165.7 582.6 L165.6 581.6 L165.6 580.7 L165.5 579.7 L165.4 578.8 L165.3 577.8 L165.3 576.9 L165.2 575.9 L165.2 575.0 L165.2 574.0 L165.1 573.1 L165.1 572.1 L165.1 571.2Z" fill="url(#wallg)"/>
  <g clip-path="url(#hullclip)"><rect x="674.5" y="560" width="2.8" height="320" fill="#fff" fill-opacity="0.013"/><rect x="409.6" y="560" width="2.7" height="320" fill="#000" fill-opacity="0.026"/><rect x="814.6" y="560" width="1.7" height="320" fill="#000" fill-opacity="0.014"/><rect x="372.7" y="560" width="1.7" height="320" fill="#000" fill-opacity="0.020"/><rect x="976.3" y="560" width="2.5" height="320" fill="#fff" fill-opacity="0.030"/><rect x="340.5" y="560" width="1.0" height="320" fill="#fff" fill-opacity="0.009"/><rect x="194.1" y="560" width="1.8" height="320" fill="#000" fill-opacity="0.028"/><rect x="677.8" y="560" width="1.8" height="320" fill="#000" fill-opacity="0.013"/><rect x="174.6" y="560" width="1.1" height="320" fill="#fff" fill-opacity="0.012"/><rect x="466.2" y="560" width="0.6" height="320" fill="#fff" fill-opacity="0.011"/><rect x="383.1" y="560" width="2.7" height="320" fill="#000" fill-opacity="0.027"/><rect x="686.4" y="560" width="2.4" height="320" fill="#000" fill-opacity="0.020"/><rect x="578.8" y="560" width="2.7" height="320" fill="#000" fill-opacity="0.021"/><rect x="213.3" y="560" width="1.5" height="320" fill="#000" fill-opacity="0.011"/><rect x="830.3" y="560" width="1.5" height="320" fill="#fff" fill-opacity="0.021"/><rect x="658.1" y="560" width="2.1" height="320" fill="#fff" fill-opacity="0.011"/><rect x="523.9" y="560" width="1.2" height="320" fill="#000" fill-opacity="0.010"/><rect x="953.8" y="560" width="1.1" height="320" fill="#fff" fill-opacity="0.015"/><rect x="877.4" y="560" width="2.2" height="320" fill="#000" fill-opacity="0.027"/><rect x="935.1" y="560" width="2.8" height="320" fill="#fff" fill-opacity="0.011"/><rect x="321.9" y="560" width="2.8" height="320" fill="#fff" fill-opacity="0.012"/><rect x="885.5" y="560" width="2.1" height="320" fill="#fff" fill-opacity="0.016"/><rect x="499.9" y="560" width="1.2" height="320" fill="#000" fill-opacity="0.027"/><rect x="546.2" y="560" width="1.9" height="320" fill="#000" fill-opacity="0.025"/><rect x="185.5" y="560" width="1.5" height="320" fill="#000" fill-opacity="0.011"/><rect x="953.2" y="560" width="2.2" height="320" fill="#000" fill-opacity="0.020"/><rect x="876.3" y="560" width="1.4" height="320" fill="#fff" fill-opacity="0.023"/><rect x="454.7" y="560" width="1.8" height="320" fill="#fff" fill-opacity="0.028"/><rect x="288.1" y="560" width="2.8" height="320" fill="#000" fill-opacity="0.025"/><rect x="825.6" y="560" width="0.9" height="320" fill="#000" fill-opacity="0.026"/><rect x="176.6" y="560" width="2.1" height="320" fill="#fff" fill-opacity="0.019"/><rect x="756.6" y="560" width="1.1" height="320" fill="#000" fill-opacity="0.016"/><rect x="311.2" y="560" width="1.4" height="320" fill="#fff" fill-opacity="0.021"/><rect x="442.2" y="560" width="1.3" height="320" fill="#fff" fill-opacity="0.018"/><rect x="964.0" y="560" width="1.8" height="320" fill="#000" fill-opacity="0.028"/><rect x="770.4" y="560" width="2.0" height="320" fill="#000" fill-opacity="0.027"/><rect x="500.5" y="560" width="2.8" height="320" fill="#000" fill-opacity="0.017"/><rect x="588.4" y="560" width="2.9" height="320" fill="#000" fill-opacity="0.026"/><rect x="716.3" y="560" width="2.3" height="320" fill="#fff" fill-opacity="0.029"/><rect x="436.1" y="560" width="1.6" height="320" fill="#000" fill-opacity="0.009"/><rect x="338.5" y="560" width="2.8" height="320" fill="#fff" fill-opacity="0.010"/><rect x="657.1" y="560" width="1.8" height="320" fill="#fff" fill-opacity="0.023"/><rect x="414.9" y="560" width="2.9" height="320" fill="#000" fill-opacity="0.022"/><rect x="682.7" y="560" width="1.0" height="320" fill="#000" fill-opacity="0.017"/><rect x="787.7" y="560" width="2.6" height="320" fill="#fff" fill-opacity="0.010"/><rect x="909.4" y="560" width="2.5" height="320" fill="#fff" fill-opacity="0.020"/><rect x="911.2" y="560" width="0.7" height="320" fill="#000" fill-opacity="0.008"/><rect x="371.0" y="560" width="1.2" height="320" fill="#000" fill-opacity="0.020"/><rect x="196.8" y="560" width="2.0" height="320" fill="#000" fill-opacity="0.023"/><rect x="182.2" y="560" width="1.3" height="320" fill="#fff" fill-opacity="0.020"/><rect x="826.4" y="560" width="2.2" height="320" fill="#fff" fill-opacity="0.012"/><rect x="633.1" y="560" width="0.7" height="320" fill="#fff" fill-opacity="0.029"/><rect x="861.0" y="560" width="0.7" height="320" fill="#000" fill-opacity="0.015"/><rect x="256.9" y="560" width="2.1" height="320" fill="#fff" fill-opacity="0.015"/><rect x="868.2" y="560" width="2.5" height="320" fill="#000" fill-opacity="0.025"/><rect x="884.3" y="560" width="1.1" height="320" fill="#fff" fill-opacity="0.022"/><rect x="661.6" y="560" width="0.8" height="320" fill="#fff" fill-opacity="0.022"/><rect x="836.5" y="560" width="2.5" height="320" fill="#000" fill-opacity="0.024"/><rect x="871.8" y="560" width="2.7" height="320" fill="#000" fill-opacity="0.009"/><rect x="695.4" y="560" width="1.1" height="320" fill="#fff" fill-opacity="0.029"/><rect x="474.1" y="560" width="1.2" height="320" fill="#000" fill-opacity="0.022"/><rect x="247.4" y="560" width="1.5" height="320" fill="#000" fill-opacity="0.023"/><rect x="841.9" y="560" width="1.5" height="320" fill="#000" fill-opacity="0.020"/><rect x="340.3" y="560" width="1.2" height="320" fill="#000" fill-opacity="0.018"/><rect x="231.4" y="560" width="2.4" height="320" fill="#fff" fill-opacity="0.015"/><rect x="228.2" y="560" width="2.4" height="320" fill="#000" fill-opacity="0.011"/><rect x="271.5" y="560" width="0.8" height="320" fill="#fff" fill-opacity="0.014"/><rect x="414.7" y="560" width="2.6" height="320" fill="#fff" fill-opacity="0.012"/><rect x="519.4" y="560" width="2.7" height="320" fill="#000" fill-opacity="0.024"/><rect x="243.9" y="560" width="2.3" height="320" fill="#fff" fill-opacity="0.026"/><rect x="714.5" y="560" width="1.5" height="320" fill="#000" fill-opacity="0.019"/><rect x="782.3" y="560" width="1.1" height="320" fill="#000" fill-opacity="0.020"/><rect x="774.9" y="560" width="2.8" height="320" fill="#000" fill-opacity="0.012"/><rect x="816.6" y="560" width="2.1" height="320" fill="#fff" fill-opacity="0.030"/><rect x="930.4" y="560" width="2.6" height="320" fill="#fff" fill-opacity="0.017"/><rect x="687.6" y="560" width="1.0" height="320" fill="#fff" fill-opacity="0.025"/><rect x="752.9" y="560" width="1.7" height="320" fill="#000" fill-opacity="0.017"/><rect x="192.2" y="560" width="2.6" height="320" fill="#000" fill-opacity="0.017"/><rect x="611.6" y="560" width="2.3" height="320" fill="#000" fill-opacity="0.026"/><rect x="914.4" y="560" width="1.5" height="320" fill="#000" fill-opacity="0.025"/><rect x="974.3" y="560" width="1.0" height="320" fill="#fff" fill-opacity="0.026"/><rect x="915.3" y="560" width="0.9" height="320" fill="#000" fill-opacity="0.030"/><rect x="260.2" y="560" width="1.0" height="320" fill="#fff" fill-opacity="0.018"/><rect x="776.6" y="560" width="1.1" height="320" fill="#fff" fill-opacity="0.013"/><rect x="791.8" y="560" width="0.8" height="320" fill="#000" fill-opacity="0.009"/><rect x="420.8" y="560" width="1.3" height="320" fill="#fff" fill-opacity="0.018"/><rect x="211.3" y="560" width="3.0" height="320" fill="#fff" fill-opacity="0.028"/><rect x="366.0" y="560" width="1.5" height="320" fill="#000" fill-opacity="0.011"/><rect x="191.9" y="560" width="1.8" height="320" fill="#000" fill-opacity="0.012"/><rect x="866.3" y="560" width="1.8" height="320" fill="#000" fill-opacity="0.023"/><rect x="381.7" y="560" width="1.9" height="320" fill="#000" fill-opacity="0.019"/><rect x="677.3" y="560" width="1.9" height="320" fill="#000" fill-opacity="0.025"/><rect x="876.9" y="560" width="1.0" height="320" fill="#000" fill-opacity="0.010"/><rect x="963.4" y="560" width="2.9" height="320" fill="#000" fill-opacity="0.029"/><rect x="334.4" y="560" width="1.8" height="320" fill="#000" fill-opacity="0.028"/><rect x="198.0" y="560" width="1.4" height="320" fill="#fff" fill-opacity="0.009"/><rect x="357.8" y="560" width="1.7" height="320" fill="#fff" fill-opacity="0.025"/><rect x="840.6" y="560" width="2.4" height="320" fill="#fff" fill-opacity="0.027"/><rect x="720.4" y="560" width="2.4" height="320" fill="#000" fill-opacity="0.012"/><rect x="781.6" y="560" width="1.0" height="320" fill="#fff" fill-opacity="0.021"/><rect x="433.5" y="560" width="2.8" height="320" fill="#000" fill-opacity="0.019"/><rect x="239.6" y="560" width="2.9" height="320" fill="#fff" fill-opacity="0.026"/><rect x="394.8" y="560" width="2.5" height="320" fill="#fff" fill-opacity="0.022"/><rect x="939.7" y="560" width="1.6" height="320" fill="#000" fill-opacity="0.023"/><rect x="845.6" y="560" width="1.4" height="320" fill="#fff" fill-opacity="0.013"/><rect x="614.6" y="560" width="2.4" height="320" fill="#000" fill-opacity="0.024"/><rect x="177.6" y="560" width="2.9" height="320" fill="#000" fill-opacity="0.017"/><rect x="752.2" y="560" width="1.9" height="320" fill="#fff" fill-opacity="0.010"/><rect x="623.7" y="560" width="1.9" height="320" fill="#fff" fill-opacity="0.009"/><rect x="534.0" y="560" width="2.1" height="320" fill="#fff" fill-opacity="0.010"/><rect x="648.5" y="560" width="1.1" height="320" fill="#000" fill-opacity="0.027"/><rect x="326.2" y="560" width="1.7" height="320" fill="#fff" fill-opacity="0.024"/><rect x="616.1" y="560" width="2.5" height="320" fill="#000" fill-opacity="0.022"/><rect x="832.4" y="560" width="2.2" height="320" fill="#fff" fill-opacity="0.017"/><rect x="620.0" y="560" width="1.6" height="320" fill="#fff" fill-opacity="0.016"/><rect x="545.3" y="560" width="2.4" height="320" fill="#000" fill-opacity="0.015"/><rect x="838.9" y="560" width="1.5" height="320" fill="#fff" fill-opacity="0.025"/><rect x="529.5" y="560" width="2.3" height="320" fill="#000" fill-opacity="0.017"/><rect x="866.2" y="560" width="2.0" height="320" fill="#fff" fill-opacity="0.023"/><rect x="717.3" y="560" width="2.0" height="320" fill="#000" fill-opacity="0.012"/><rect x="403.5" y="560" width="1.3" height="320" fill="#000" fill-opacity="0.030"/><rect x="452.3" y="560" width="1.7" height="320" fill="#000" fill-opacity="0.021"/><rect x="937.5" y="560" width="2.7" height="320" fill="#000" fill-opacity="0.014"/><rect x="885.8" y="560" width="1.8" height="320" fill="#fff" fill-opacity="0.010"/><rect x="871.2" y="560" width="1.4" height="320" fill="#000" fill-opacity="0.012"/><rect x="507.5" y="560" width="2.6" height="320" fill="#fff" fill-opacity="0.018"/><rect x="790.8" y="560" width="1.7" height="320" fill="#000" fill-opacity="0.020"/><rect x="329.1" y="560" width="1.4" height="320" fill="#fff" fill-opacity="0.025"/><rect x="211.2" y="560" width="2.4" height="320" fill="#fff" fill-opacity="0.018"/><rect x="215.9" y="560" width="2.2" height="320" fill="#000" fill-opacity="0.022"/><rect x="471.9" y="560" width="2.1" height="320" fill="#000" fill-opacity="0.018"/><rect x="592.6" y="560" width="2.1" height="320" fill="#000" fill-opacity="0.029"/><rect x="400.6" y="560" width="1.3" height="320" fill="#000" fill-opacity="0.009"/><rect x="509.7" y="560" width="2.5" height="320" fill="#fff" fill-opacity="0.012"/><rect x="276.6" y="560" width="1.4" height="320" fill="#fff" fill-opacity="0.019"/><rect x="917.4" y="560" width="2.2" height="320" fill="#fff" fill-opacity="0.025"/><rect x="776.5" y="560" width="1.4" height="320" fill="#000" fill-opacity="0.018"/><rect x="563.7" y="560" width="0.9" height="320" fill="#000" fill-opacity="0.022"/><rect x="275.6" y="560" width="0.9" height="320" fill="#000" fill-opacity="0.014"/><rect x="948.8" y="560" width="0.7" height="320" fill="#000" fill-opacity="0.012"/><rect x="551.6" y="560" width="0.6" height="320" fill="#000" fill-opacity="0.012"/><rect x="384.8" y="560" width="2.5" height="320" fill="#000" fill-opacity="0.022"/><rect x="496.1" y="560" width="1.6" height="320" fill="#fff" fill-opacity="0.012"/><rect x="917.9" y="560" width="2.7" height="320" fill="#fff" fill-opacity="0.009"/><rect x="705.6" y="560" width="2.0" height="320" fill="#fff" fill-opacity="0.013"/><rect x="942.0" y="560" width="2.7" height="320" fill="#000" fill-opacity="0.015"/><rect x="191.4" y="560" width="2.6" height="320" fill="#fff" fill-opacity="0.030"/><rect x="663.7" y="560" width="2.2" height="320" fill="#fff" fill-opacity="0.021"/><rect x="941.2" y="560" width="2.1" height="320" fill="#000" fill-opacity="0.019"/><rect x="180.2" y="560" width="2.3" height="320" fill="#fff" fill-opacity="0.017"/></g>
  <g clip-path="url(#hullclip)" stroke="#000" stroke-opacity=".05" stroke-width="1" fill="none"><line x1="0.0" y1="814.6" x2="229.4" y2="990.0"/><line x1="0.0" y1="637.6" x2="518.9" y2="990.0"/><line x1="0.0" y1="495.7" x2="809.4" y2="990.0"/><line x1="0.0" y1="379.5" x2="1101.0" y2="990.0"/><line x1="0.0" y1="152.2" x2="21.7" y2="145.0"/><line x1="0.0" y1="201.5" x2="161.5" y2="145.0"/><line x1="0.0" y1="200.3" x2="1202.0" y2="762.8"/><line x1="0.0" y1="256.1" x2="301.7" y2="145.0"/><line x1="35.1" y1="145.0" x2="1202.0" y2="651.4"/><line x1="0.0" y1="317.1" x2="442.4" y2="145.0"/><line x1="188.9" y1="145.0" x2="1202.0" y2="554.7"/><line x1="0.0" y1="385.7" x2="583.6" y2="145.0"/><line x1="343.3" y1="145.0" x2="1202.0" y2="470.1"/><line x1="0.0" y1="463.2" x2="725.3" y2="145.0"/><line x1="498.2" y1="145.0" x2="1202.0" y2="395.4"/><line x1="0.0" y1="551.7" x2="867.5" y2="145.0"/><line x1="653.7" y1="145.0" x2="1202.0" y2="328.9"/><line x1="0.0" y1="653.7" x2="1010.1" y2="145.0"/><line x1="809.8" y1="145.0" x2="1202.0" y2="269.4"/><line x1="0.0" y1="772.3" x2="1153.3" y2="145.0"/><line x1="966.5" y1="145.0" x2="1202.0" y2="215.9"/><line x1="1123.8" y1="145.0" x2="1202.0" y2="167.4"/><line x1="138.0" y1="990.0" x2="1202.0" y2="300.0"/><line x1="408.4" y1="990.0" x2="1202.0" y2="420.4"/><line x1="679.9" y1="990.0" x2="1202.0" y2="570.2"/><line x1="952.2" y1="990.0" x2="1202.0" y2="761.6"/></g>
  <path d="M976.7 566.2A405.8 218.3 -0.35 1 1 165.1 571.2A405.8 218.3 -0.35 1 1 976.7 566.2Z" fill="url(#topg)" stroke="#000" stroke-width="1.1"/>
  <g clip-path="url(#otclip)">
   <ellipse cx="889" cy="594" rx="30" ry="20" fill="url(#blob)"/>
   <ellipse cx="935" cy="624" rx="32" ry="20" fill="url(#blob)"/>
   <ellipse cx="905" cy="545" rx="20" ry="30" fill="url(#blobl)"/>
   <ellipse cx="955" cy="505" rx="20" ry="35" fill="url(#blobl)"/>
   <ellipse cx="952" cy="567" rx="28" ry="11" fill="url(#blob)"/>
   <ellipse cx="560" cy="372" rx="120" ry="14" fill="url(#blobl)"/>
  </g>
  <path d="M933.5 559.7A361.5 194.1 -0.40 1 1 210.5 564.7A361.5 194.1 -0.40 1 1 933.5 559.7Z" fill="url(#grooveg)" stroke="#000" stroke-width="1.1"/>
  <path d="M925.4 558.7A353.7 189.6 -0.40 1 1 218.0 563.6A353.7 189.6 -0.40 1 1 925.4 558.7Z" fill="url(#topg)" stroke="#000" stroke-width="1.1"/>
  <g clip-path="url(#otclip)">
   <ellipse cx="889" cy="594" rx="30" ry="20" fill="url(#blob)" clip-path="url(#giclip)"/>
  </g>
  <path d="M882.9 553.1A311.1 165.3 -0.24 1 1 260.7 555.7A311.1 165.3 -0.24 1 1 882.9 553.1Z" fill="url(#innerg)" stroke="#000" stroke-width="1.1"/>
  <g clip-path="url(#itclip)"><rect x="792.7" y="385" width="2.4" height="225" fill="#000" fill-opacity="0.010"/><rect x="341.0" y="385" width="1.0" height="225" fill="#000" fill-opacity="0.018"/><rect x="840.8" y="385" width="1.3" height="225" fill="#fff" fill-opacity="0.023"/><rect x="794.0" y="385" width="1.6" height="225" fill="#000" fill-opacity="0.025"/><rect x="412.2" y="385" width="0.9" height="225" fill="#fff" fill-opacity="0.023"/><rect x="391.4" y="385" width="1.2" height="225" fill="#fff" fill-opacity="0.014"/><rect x="699.1" y="385" width="0.9" height="225" fill="#fff" fill-opacity="0.011"/><rect x="582.1" y="385" width="0.7" height="225" fill="#fff" fill-opacity="0.027"/><rect x="311.0" y="385" width="1.3" height="225" fill="#fff" fill-opacity="0.021"/><rect x="454.4" y="385" width="2.1" height="225" fill="#000" fill-opacity="0.027"/><rect x="442.0" y="385" width="2.4" height="225" fill="#fff" fill-opacity="0.024"/><rect x="495.5" y="385" width="2.3" height="225" fill="#fff" fill-opacity="0.017"/><rect x="274.6" y="385" width="2.9" height="225" fill="#fff" fill-opacity="0.013"/><rect x="716.9" y="385" width="1.3" height="225" fill="#000" fill-opacity="0.027"/><rect x="539.4" y="385" width="1.3" height="225" fill="#000" fill-opacity="0.010"/><rect x="395.8" y="385" width="1.3" height="225" fill="#000" fill-opacity="0.009"/><rect x="550.5" y="385" width="1.1" height="225" fill="#fff" fill-opacity="0.028"/><rect x="429.4" y="385" width="2.0" height="225" fill="#000" fill-opacity="0.010"/><rect x="336.4" y="385" width="2.7" height="225" fill="#000" fill-opacity="0.026"/><rect x="299.8" y="385" width="2.0" height="225" fill="#fff" fill-opacity="0.027"/><rect x="261.6" y="385" width="1.9" height="225" fill="#000" fill-opacity="0.025"/><rect x="304.0" y="385" width="1.2" height="225" fill="#fff" fill-opacity="0.018"/><rect x="542.6" y="385" width="2.9" height="225" fill="#000" fill-opacity="0.009"/><rect x="504.3" y="385" width="1.0" height="225" fill="#000" fill-opacity="0.020"/><rect x="856.8" y="385" width="2.0" height="225" fill="#fff" fill-opacity="0.015"/><rect x="616.7" y="385" width="2.4" height="225" fill="#fff" fill-opacity="0.026"/><rect x="603.7" y="385" width="1.1" height="225" fill="#fff" fill-opacity="0.019"/><rect x="362.2" y="385" width="2.1" height="225" fill="#fff" fill-opacity="0.011"/><rect x="600.2" y="385" width="2.4" height="225" fill="#000" fill-opacity="0.014"/><rect x="491.8" y="385" width="1.9" height="225" fill="#fff" fill-opacity="0.020"/><rect x="325.2" y="385" width="2.6" height="225" fill="#fff" fill-opacity="0.010"/><rect x="414.7" y="385" width="1.0" height="225" fill="#fff" fill-opacity="0.028"/><rect x="285.8" y="385" width="1.4" height="225" fill="#000" fill-opacity="0.018"/><rect x="836.8" y="385" width="0.8" height="225" fill="#000" fill-opacity="0.019"/><rect x="587.1" y="385" width="2.4" height="225" fill="#000" fill-opacity="0.011"/><rect x="480.1" y="385" width="3.0" height="225" fill="#fff" fill-opacity="0.011"/><rect x="765.6" y="385" width="1.3" height="225" fill="#fff" fill-opacity="0.008"/><rect x="805.2" y="385" width="1.0" height="225" fill="#000" fill-opacity="0.023"/><rect x="576.9" y="385" width="1.0" height="225" fill="#000" fill-opacity="0.014"/><rect x="290.9" y="385" width="1.1" height="225" fill="#000" fill-opacity="0.018"/><rect x="481.9" y="385" width="2.0" height="225" fill="#000" fill-opacity="0.009"/><rect x="465.9" y="385" width="2.4" height="225" fill="#000" fill-opacity="0.017"/><rect x="732.1" y="385" width="1.6" height="225" fill="#fff" fill-opacity="0.028"/><rect x="453.0" y="385" width="2.4" height="225" fill="#000" fill-opacity="0.011"/><rect x="533.0" y="385" width="2.0" height="225" fill="#fff" fill-opacity="0.011"/><rect x="705.4" y="385" width="1.7" height="225" fill="#000" fill-opacity="0.029"/><rect x="694.9" y="385" width="0.9" height="225" fill="#fff" fill-opacity="0.010"/><rect x="316.2" y="385" width="1.4" height="225" fill="#fff" fill-opacity="0.009"/><rect x="834.6" y="385" width="2.1" height="225" fill="#000" fill-opacity="0.021"/><rect x="546.1" y="385" width="2.0" height="225" fill="#fff" fill-opacity="0.023"/><rect x="884.3" y="385" width="1.0" height="225" fill="#fff" fill-opacity="0.017"/><rect x="749.9" y="385" width="2.7" height="225" fill="#fff" fill-opacity="0.014"/><rect x="542.4" y="385" width="2.9" height="225" fill="#fff" fill-opacity="0.016"/><rect x="848.5" y="385" width="1.6" height="225" fill="#000" fill-opacity="0.025"/><rect x="553.9" y="385" width="1.7" height="225" fill="#000" fill-opacity="0.018"/><rect x="345.8" y="385" width="0.7" height="225" fill="#fff" fill-opacity="0.020"/><rect x="679.9" y="385" width="2.5" height="225" fill="#000" fill-opacity="0.013"/><rect x="432.5" y="385" width="1.3" height="225" fill="#fff" fill-opacity="0.016"/><rect x="461.0" y="385" width="2.1" height="225" fill="#000" fill-opacity="0.010"/><rect x="695.8" y="385" width="2.4" height="225" fill="#000" fill-opacity="0.022"/><rect x="279.4" y="385" width="1.6" height="225" fill="#fff" fill-opacity="0.014"/><rect x="476.7" y="385" width="2.1" height="225" fill="#fff" fill-opacity="0.011"/><rect x="701.7" y="385" width="0.8" height="225" fill="#fff" fill-opacity="0.012"/><rect x="417.2" y="385" width="1.1" height="225" fill="#fff" fill-opacity="0.014"/><rect x="638.1" y="385" width="3.0" height="225" fill="#fff" fill-opacity="0.009"/><rect x="585.3" y="385" width="2.0" height="225" fill="#fff" fill-opacity="0.015"/><rect x="463.9" y="385" width="0.6" height="225" fill="#000" fill-opacity="0.020"/><rect x="305.7" y="385" width="1.1" height="225" fill="#000" fill-opacity="0.010"/><rect x="277.4" y="385" width="2.8" height="225" fill="#000" fill-opacity="0.013"/><rect x="702.9" y="385" width="0.6" height="225" fill="#000" fill-opacity="0.029"/><rect x="821.7" y="385" width="2.1" height="225" fill="#000" fill-opacity="0.015"/><rect x="275.5" y="385" width="1.1" height="225" fill="#000" fill-opacity="0.011"/><rect x="655.7" y="385" width="0.8" height="225" fill="#000" fill-opacity="0.028"/><rect x="468.7" y="385" width="1.4" height="225" fill="#000" fill-opacity="0.026"/><rect x="682.8" y="385" width="1.9" height="225" fill="#fff" fill-opacity="0.010"/><rect x="421.5" y="385" width="2.0" height="225" fill="#fff" fill-opacity="0.026"/><rect x="660.4" y="385" width="1.8" height="225" fill="#000" fill-opacity="0.028"/><rect x="300.0" y="385" width="0.9" height="225" fill="#fff" fill-opacity="0.026"/><rect x="752.0" y="385" width="1.7" height="225" fill="#000" fill-opacity="0.009"/><rect x="792.7" y="385" width="2.9" height="225" fill="#000" fill-opacity="0.027"/><rect x="510.8" y="385" width="1.3" height="225" fill="#000" fill-opacity="0.008"/><rect x="536.0" y="385" width="1.1" height="225" fill="#fff" fill-opacity="0.019"/><rect x="803.6" y="385" width="2.8" height="225" fill="#000" fill-opacity="0.014"/><rect x="847.8" y="385" width="1.8" height="225" fill="#000" fill-opacity="0.009"/><rect x="880.0" y="385" width="2.0" height="225" fill="#000" fill-opacity="0.019"/><rect x="574.6" y="385" width="1.6" height="225" fill="#fff" fill-opacity="0.029"/><rect x="336.5" y="385" width="1.0" height="225" fill="#000" fill-opacity="0.026"/><rect x="649.7" y="385" width="2.4" height="225" fill="#fff" fill-opacity="0.013"/><rect x="771.6" y="385" width="0.6" height="225" fill="#fff" fill-opacity="0.012"/><rect x="553.8" y="385" width="2.9" height="225" fill="#000" fill-opacity="0.009"/><rect x="527.3" y="385" width="2.2" height="225" fill="#000" fill-opacity="0.014"/><rect x="269.5" y="385" width="1.9" height="225" fill="#000" fill-opacity="0.019"/><rect x="443.8" y="385" width="2.2" height="225" fill="#000" fill-opacity="0.028"/><rect x="860.9" y="385" width="1.8" height="225" fill="#000" fill-opacity="0.027"/><rect x="440.0" y="385" width="2.5" height="225" fill="#000" fill-opacity="0.024"/><rect x="467.8" y="385" width="2.0" height="225" fill="#fff" fill-opacity="0.009"/><rect x="765.0" y="385" width="1.9" height="225" fill="#000" fill-opacity="0.016"/><rect x="301.6" y="385" width="1.2" height="225" fill="#fff" fill-opacity="0.010"/><rect x="678.4" y="385" width="2.9" height="225" fill="#fff" fill-opacity="0.028"/><rect x="764.6" y="385" width="1.0" height="225" fill="#fff" fill-opacity="0.012"/><rect x="803.8" y="385" width="2.7" height="225" fill="#fff" fill-opacity="0.019"/><rect x="383.9" y="385" width="1.8" height="225" fill="#000" fill-opacity="0.011"/><rect x="338.5" y="385" width="2.5" height="225" fill="#fff" fill-opacity="0.011"/><rect x="266.3" y="385" width="1.2" height="225" fill="#000" fill-opacity="0.012"/><rect x="624.3" y="385" width="1.6" height="225" fill="#000" fill-opacity="0.013"/><rect x="675.4" y="385" width="1.3" height="225" fill="#000" fill-opacity="0.018"/><rect x="826.0" y="385" width="1.2" height="225" fill="#fff" fill-opacity="0.015"/><rect x="819.7" y="385" width="1.5" height="225" fill="#000" fill-opacity="0.027"/><rect x="680.5" y="385" width="0.8" height="225" fill="#000" fill-opacity="0.030"/><rect x="276.3" y="385" width="1.3" height="225" fill="#fff" fill-opacity="0.008"/><rect x="359.4" y="385" width="1.1" height="225" fill="#000" fill-opacity="0.018"/><rect x="630.1" y="385" width="1.4" height="225" fill="#000" fill-opacity="0.026"/><rect x="763.2" y="385" width="1.9" height="225" fill="#000" fill-opacity="0.020"/><rect x="653.3" y="385" width="1.6" height="225" fill="#fff" fill-opacity="0.017"/><rect x="578.8" y="385" width="0.9" height="225" fill="#fff" fill-opacity="0.025"/><rect x="717.2" y="385" width="1.2" height="225" fill="#fff" fill-opacity="0.024"/><rect x="524.1" y="385" width="1.6" height="225" fill="#fff" fill-opacity="0.012"/><rect x="659.7" y="385" width="2.3" height="225" fill="#000" fill-opacity="0.027"/><rect x="552.3" y="385" width="1.7" height="225" fill="#000" fill-opacity="0.028"/><rect x="456.6" y="385" width="2.3" height="225" fill="#000" fill-opacity="0.029"/><rect x="853.3" y="385" width="0.7" height="225" fill="#fff" fill-opacity="0.021"/><rect x="304.4" y="385" width="1.8" height="225" fill="#000" fill-opacity="0.020"/><rect x="374.5" y="385" width="1.5" height="225" fill="#000" fill-opacity="0.021"/><rect x="774.4" y="385" width="2.8" height="225" fill="#000" fill-opacity="0.021"/><rect x="261.7" y="385" width="1.5" height="225" fill="#fff" fill-opacity="0.011"/><rect x="804.3" y="385" width="2.2" height="225" fill="#000" fill-opacity="0.025"/><rect x="439.7" y="385" width="2.7" height="225" fill="#000" fill-opacity="0.011"/><rect x="729.0" y="385" width="1.7" height="225" fill="#000" fill-opacity="0.019"/><rect x="444.5" y="385" width="1.9" height="225" fill="#fff" fill-opacity="0.027"/><rect x="295.1" y="385" width="2.0" height="225" fill="#fff" fill-opacity="0.018"/></g>
  <g clip-path="url(#itclip)" stroke="#000" stroke-opacity=".04" stroke-width="1" fill="none"><line x1="0.0" y1="814.6" x2="229.4" y2="990.0"/><line x1="0.0" y1="637.6" x2="518.9" y2="990.0"/><line x1="0.0" y1="495.7" x2="809.4" y2="990.0"/><line x1="0.0" y1="379.5" x2="1101.0" y2="990.0"/><line x1="0.0" y1="152.2" x2="21.7" y2="145.0"/><line x1="0.0" y1="201.5" x2="161.5" y2="145.0"/><line x1="0.0" y1="200.3" x2="1202.0" y2="762.8"/><line x1="0.0" y1="256.1" x2="301.7" y2="145.0"/><line x1="35.1" y1="145.0" x2="1202.0" y2="651.4"/><line x1="0.0" y1="317.1" x2="442.4" y2="145.0"/><line x1="188.9" y1="145.0" x2="1202.0" y2="554.7"/><line x1="0.0" y1="385.7" x2="583.6" y2="145.0"/><line x1="343.3" y1="145.0" x2="1202.0" y2="470.1"/><line x1="0.0" y1="463.2" x2="725.3" y2="145.0"/><line x1="498.2" y1="145.0" x2="1202.0" y2="395.4"/><line x1="0.0" y1="551.7" x2="867.5" y2="145.0"/><line x1="653.7" y1="145.0" x2="1202.0" y2="328.9"/><line x1="0.0" y1="653.7" x2="1010.1" y2="145.0"/><line x1="809.8" y1="145.0" x2="1202.0" y2="269.4"/><line x1="0.0" y1="772.3" x2="1153.3" y2="145.0"/><line x1="966.5" y1="145.0" x2="1202.0" y2="215.9"/><line x1="1123.8" y1="145.0" x2="1202.0" y2="167.4"/><line x1="138.0" y1="990.0" x2="1202.0" y2="300.0"/><line x1="408.4" y1="990.0" x2="1202.0" y2="420.4"/><line x1="679.9" y1="990.0" x2="1202.0" y2="570.2"/><line x1="952.2" y1="990.0" x2="1202.0" y2="761.6"/></g>
  <path d="M165.1 570.2 L165.1 569.3 L165.1 568.3 L165.1 567.4 L165.2 566.4 L165.2 565.5 L165.3 564.5 L165.3 563.6 L165.4 562.6 L165.4 561.7 L165.5 560.7 L165.6 559.8 L165.7 558.8 L165.8 557.8 L165.9 556.9 L166.0 555.9 L166.1 555.0 L166.3 554.0 L166.4 553.1 L166.5 552.1 L166.7 551.2 L166.8 550.2 L167.0 549.3 L167.2 548.3 L167.4 547.4 L167.6 546.5 L167.8 545.5 L168.0 544.6 L168.2 543.6 L168.4 542.7 L168.6 541.7 L168.9 540.8 L169.1 539.8 L169.4 538.9 L169.6 537.9 L169.9 537.0 L170.2 536.1 L170.5 535.1 L170.7 534.2 L171.0 533.2 L171.3 532.3 L171.7 531.4 L172.0 530.4 L172.3 529.5 L172.6 528.5 L173.0 527.6 L173.3 526.7 L173.7 525.7 L174.1 524.8 L174.4 523.9 L174.8 522.9 L175.2 522.0 L175.6 521.1 L176.0 520.2 L176.4 519.2 L176.8 518.3 L177.3 517.4 L177.7 516.4 L178.1 515.5 L178.6 514.6 L179.0 513.7 L179.5 512.8 L180.0 511.8 L180.5 510.9 L180.9 510.0 L181.4 509.1 L181.9 508.2 L182.4 507.2 L183.0 506.3 L183.5 505.4 L184.0 504.5 L184.6 503.6 L185.1 502.7 L185.7 501.8 L186.2 500.9 L186.8 500.0 L187.4 499.1 L187.9 498.2 L188.5 497.3 L189.1 496.4 L189.7 495.5 L190.3 494.6 L191.0 493.7 L191.6 492.8 L192.2 491.9 L192.9 491.0 L193.5 490.1 L194.2 489.2 L194.8 488.3 L195.5 487.5 L196.2 486.6 L196.8 485.7 L197.5 484.8 L198.2 483.9 L198.9 483.1 L199.6 482.2 L200.4 481.3 L201.1 480.4 L201.8 479.6 L202.6 478.7 L203.3 477.8 L204.1 477.0 L204.8 476.1 L205.6 475.2 L206.4 474.4 L207.1 473.5 L207.9 472.7 L208.7 471.8 L209.5 471.0 L210.3 470.1 L211.2 469.3 L212.0 468.4 L212.8 467.6 L213.6 466.7 L214.5 465.9 L215.3 465.0 L216.2 464.2 L217.1 463.4 L217.9 462.5 L218.8 461.7 L219.7 460.9 L220.6 460.0 L221.5 459.2 L222.4 458.4 L223.3 457.6 L224.2 456.8 L225.1 455.9 L226.1 455.1 L227.0 454.3 L227.9 453.5 L228.9 452.7 L229.8 451.9 L230.8 451.1 L231.8 450.3 L232.8 449.5 L233.7 448.7 L234.7 447.9 L235.7 447.1 L236.7 446.3 L237.7 445.5 L238.7 444.7 L239.8 444.0 L240.8 443.2 L241.8 442.4 L242.9 441.6 L243.9 440.8 L245.0 440.1 L246.0 439.3 L247.1 438.5 L248.2 437.8 L249.2 437.0 L250.3 436.3 L251.4 435.5 L252.5 434.7 L253.6 434.0 L254.7 433.2 L255.8 432.5 L256.9 431.8 L258.1 431.0 L259.2 430.3 L260.3 429.5 L261.5 428.8 L262.6 428.1 L263.8 427.4 L264.9 426.6 L266.1 425.9 L267.3 425.2 L268.4 424.5 L269.6 423.8 L270.8 423.0 L272.0 422.3 L273.2 421.6 L274.4 420.9 L275.6 420.2 L276.8 419.5 L278.1 418.8 L279.3 418.2 L280.5 417.5 L281.8 416.8 L283.0 416.1 L284.3 415.4 L285.5 414.7 L286.8 414.1 L288.1 413.4 L289.3 412.7 L290.6 412.1 L291.9 411.4 L293.2 410.7 L294.5 410.1 L295.8 409.4 L297.1 408.8 L298.4 408.1 L299.7 407.5 L301.0 406.8 L302.3 406.2 L303.7 405.6 L305.0 404.9 L306.3 404.3 L307.7 403.7 L309.0 403.1 L310.4 402.5 L311.8 401.8 L313.1 401.2 L314.5 400.6 L315.9 400.0 L317.2 399.4 L318.6 398.8 L320.0 398.2 L321.4 397.6 L322.8 397.0 L324.2 396.4 L325.6 395.9 L327.0 395.3 L328.5 394.7 L329.9 394.1 L331.3 393.6 L332.7 393.0 L334.2 392.4 L335.6 391.9 L337.1 391.3 L338.5 390.8 L340.0 390.2 L341.4 389.7 L342.9 389.1 L344.3 388.6 L345.8 388.0 L347.3 387.5 L348.8 387.0 L350.3 386.4 L351.7 385.9 L353.2 385.4 L354.7 384.9 L356.2 384.4 L357.7 383.9 L359.2 383.4 L360.8 382.9 L362.3 382.4 L363.8 381.9 L365.3 381.4 L366.8 380.9 L368.4 380.4 L369.9 379.9 L371.5 379.4 L373.0 379.0 L374.5 378.5 L376.1 378.0 L377.7 377.6 L379.2 377.1 L380.8 376.7 L382.3 376.2 L383.9 375.8 L385.5 375.3 L387.1 374.9 L388.6 374.4 L390.2 374.0 L391.8 373.6 L393.4 373.2 L395.0 372.7 L396.6 372.3 L398.2 371.9 L399.8 371.5 L401.4 371.1 L403.0 370.7 L404.6 370.3 L406.2 369.9 L407.9 369.5 L409.5 369.1 L411.1 368.7 L412.7 368.3 L414.4 368.0 L416.0 367.6 L417.7 367.2 L419.3 366.9 L420.9 366.5 L422.6 366.1 L424.2 365.8 L425.9 365.4 L427.5 365.1 L429.2 364.8 L430.9 364.4 L432.5 364.1 L434.2 363.8 L435.9 363.4 L437.5 363.1 L439.2 362.8 L440.9 362.5 L442.6 362.2 L444.2 361.9 L445.9 361.6 L447.6 361.3 L449.3 361.0 L451.0 360.7 L452.7 360.4 L454.4 360.1 L456.1 359.8 L457.8 359.5 L459.5 359.3 L461.2 359.0 L462.9 358.7 L464.6 358.5 L466.3 358.2 L468.0 358.0 L469.7 357.7 L471.4 357.5 L473.2 357.2 L474.9 357.0 L476.6 356.8 L478.3 356.6 L480.0 356.3 L481.8 356.1 L483.5 355.9 L485.2 355.7 L487.0 355.5 L488.7 355.3 L490.4 355.1 L492.2 354.9 L493.9 354.7 L495.6 354.5 L497.4 354.3 L499.1 354.2 L500.9 354.0 L502.6 353.8 L504.4 353.6 L506.1 353.5 L507.9 353.3 L509.6 353.2 L511.4 353.0 L513.1 352.9 L514.9 352.7 L516.6 352.6 L518.4 352.5 L520.1 352.3 L521.9 352.2 L523.6 352.1 L525.4 352.0 L527.2 351.9 L528.9 351.8 L530.7 351.6 L532.4 351.5 L534.2 351.5 L536.0 351.4 L537.7 351.3 L539.5 351.2 L541.3 351.1 L543.0 351.0 L544.8 351.0 L546.6 350.9 L548.3 350.8 L550.1 350.8 L551.9 350.7 L553.6 350.7 L555.4 350.6 L557.2 350.6 L558.9 350.5 L560.7 350.5 L562.5 350.5 L564.3 350.5 L566.0 350.4 L567.8 350.4 L569.6 350.4 L571.3 350.4 L573.1 350.4 L574.9 350.4 L576.6 350.4 L578.4 350.4 L580.2 350.4 L582.0 350.4 L583.7 350.5 L585.5 350.5 L587.3 350.5 L589.0 350.5 L590.8 350.6 L592.6 350.6 L594.3 350.7 L596.1 350.7 L597.9 350.8 L599.6 350.8 L601.4 350.9 L603.2 350.9 L604.9 351.0 L606.7 351.1 L608.5 351.2 L610.2 351.3 L612.0 351.3 L613.8 351.4 L615.5 351.5 L617.3 351.6 L619.0 351.7 L620.8 351.8 L622.5 351.9 L624.3 352.1 L626.1 352.2 L627.8 352.3 L629.6 352.4 L631.3 352.6 L633.1 352.7 L634.8 352.8 L636.6 353.0 L638.3 353.1 L640.1 353.3 L641.8 353.4 L643.5 353.6 L645.3 353.8 L647.0 353.9 L648.8 354.1 L650.5 354.3 L652.2 354.5 L654.0 354.7 L655.7 354.8 L657.4 355.0 L659.2 355.2 L660.9 355.4 L662.6 355.6 L664.3 355.9 L666.1 356.1 L667.8 356.3 L669.5 356.5 L671.2 356.7 L672.9 357.0 L674.6 357.2 L676.3 357.4 L678.1 357.7 L679.8 357.9 L681.5 358.2 L683.2 358.4 L684.9 358.7 L686.6 359.0 L688.3 359.2 L690.0 359.5 L691.7 359.8 L693.3 360.0 L695.0 360.3 L696.7 360.6 L698.4 360.9 L700.1 361.2 L701.8 361.5 L703.4 361.8 L705.1 362.1 L706.8 362.4 L708.4 362.7 L710.1 363.0 L711.8 363.4 L713.4 363.7 L715.1 364.0 L716.7 364.3 L718.4 364.7 L720.0 365.0 L721.7 365.4 L723.3 365.7 L725.0 366.1 L726.6 366.4 L728.2 366.8 L729.9 367.2 L731.5 367.5 L733.1 367.9 L734.7 368.3 L736.4 368.6 L738.0 369.0 L739.6 369.4 L741.2 369.8 L742.8 370.2 L744.4 370.6 L746.0 371.0 L747.6 371.4 L749.2 371.8 L750.8 372.2 L752.4 372.7 L753.9 373.1 L755.5 373.5 L757.1 373.9 L758.7 374.4 L760.2 374.8 L761.8 375.2 L763.4 375.7 L764.9 376.1 L766.5 376.6 L768.0 377.0 L769.6 377.5 L771.1 377.9 L772.6 378.4 L774.2 378.9 L775.7 379.4 L777.2 379.8 L778.8 380.3 L780.3 380.8 L781.8 381.3 L783.3 381.8 L784.8 382.3 L786.3 382.8 L787.8 383.3 L789.3 383.8 L790.8 384.3 L792.3 384.8 L793.8 385.3 L795.2 385.8 L796.7 386.3 L798.2 386.9 L799.6 387.4 L801.1 387.9 L802.6 388.5 L804.0 389.0 L805.5 389.5 L806.9 390.1 L808.3 390.6 L809.8 391.2 L811.2 391.7 L812.6 392.3 L814.0 392.9 L815.5 393.4 L816.9 394.0 L818.3 394.6 L819.7 395.2 L821.1 395.7 L822.5 396.3 L823.9 396.9 L825.2 397.5 L826.6 398.1 L828.0 398.7 L829.4 399.3 L830.7 399.9 L832.1 400.5 L833.4 401.1 L834.8 401.7 L836.1 402.3 L837.5 402.9 L838.8 403.6 L840.1 404.2 L841.4 404.8 L842.8 405.4 L844.1 406.1 L845.4 406.7 L846.7 407.4 L848.0 408.0 L849.3 408.6 L850.5 409.3 L851.8 409.9 L853.1 410.6 L854.4 411.3 L855.6 411.9 L856.9 412.6 L858.1 413.3 L859.4 413.9 L860.6 414.6 L861.9 415.3 L863.1 416.0 L864.3 416.6 L865.6 417.3 L866.8 418.0 L868.0 418.7 L869.2 419.4 L870.4 420.1 L871.6 420.8 L872.8 421.5 L873.9 422.2 L875.1 422.9 L876.3 423.6 L877.4 424.3 L878.6 425.0 L879.8 425.8 L880.9 426.5 L882.0 427.2 L883.2 427.9 L884.3 428.7 L885.4 429.4 L886.5 430.1 L887.6 430.9 L888.8 431.6 L889.8 432.4 L890.9 433.1 L892.0 433.8 L893.1 434.6 L894.2 435.3 L895.2 436.1 L896.3 436.9 L897.4 437.6 L898.4 438.4 L899.5 439.1 L900.5 439.9 L901.5 440.7 L902.5 441.5 L903.6 442.2 L904.6 443.0 L905.6 443.8 L906.6 444.6 L907.6 445.4 L908.5 446.1 L909.5 446.9 L910.5 447.7 L911.5 448.5 L912.4 449.3 L913.4 450.1 L914.3 450.9 L915.3 451.7 L916.2 452.5 L917.1 453.3 L918.0 454.1 L919.0 455.0 L919.9 455.8 L920.8 456.6 L921.7 457.4 L922.5 458.2 L923.4 459.0 L924.3 459.9 L925.2 460.7 L926.0 461.5 L926.9 462.4 L927.7 463.2 L928.6 464.0 L929.4 464.9 L930.2 465.7 L931.0 466.5 L931.9 467.4 L932.7 468.2 L933.5 469.1 L934.3 469.9 L935.0 470.8 L935.8 471.6 L936.6 472.5 L937.4 473.3 L938.1 474.2 L938.9 475.1 L939.6 475.9 L940.3 476.8 L941.1 477.6 L941.8 478.5 L942.5 479.4 L943.2 480.3 L943.9 481.1 L944.6 482.0 L945.3 482.9 L946.0 483.7 L946.6 484.6 L947.3 485.5 L948.0 486.4 L948.6 487.3 L949.3 488.2 L949.9 489.0 L950.5 489.9 L951.1 490.8 L951.8 491.7 L952.4 492.6 L953.0 493.5 L953.6 494.4 L954.2 495.3 L954.7 496.2 L955.3 497.1 L955.9 498.0 L956.4 498.9 L957.0 499.8 L957.5 500.7 L958.0 501.6 L958.6 502.5 L959.1 503.4 L959.6 504.3 L960.1 505.2 L960.6 506.1 L961.1 507.1 L961.6 508.0 L962.1 508.9 L962.5 509.8 L963.0 510.7 L963.4 511.6 L963.9 512.6 L964.3 513.5 L964.7 514.4 L965.2 515.3 L965.6 516.3 L966.0 517.2 L966.4 518.1 L966.8 519.0 L967.2 520.0 L967.5 520.9 L967.9 521.8 L968.3 522.7 L968.6 523.7 L969.0 524.6 L969.3 525.5 L969.7 526.5 L970.0 527.4 L970.3 528.4 L970.6 529.3 L970.9 530.2 L971.2 531.2 L971.5 532.1 L971.8 533.0 L972.0 534.0 L972.3 534.9 L972.6 535.9 L972.8 536.8 L973.0 537.7 L973.3 538.7 L973.5 539.6 L973.7 540.6 L973.9 541.5 L974.1 542.5 L974.3 543.4 L974.5 544.4 L974.7 545.3 L974.9 546.3 L975.0 547.2 L975.2 548.2 L975.3 549.1 L975.5 550.1 L975.6 551.0 L975.7 551.9 L975.9 552.9 L976.0 553.8 L976.1 554.8 L976.2 555.8 L976.2 556.7 L976.3 557.7 L976.4 558.6 L976.5 559.6 L976.5 560.5 L976.6 561.5 L976.6 562.4 L976.6 563.4 L976.7 564.3 L976.7 565.3 L976.7 566.2 L976.7 567.2 L976.7 568.1 L976.7 569.1 L976.7 570.0 L976.6 571.0 L976.6 571.9 L976.5 572.9 L976.5 573.8 L976.4 574.8 L976.4 575.7 L976.3 576.7 L976.2 577.6 L976.1 578.6 L967.9 658.8 L967.8 659.8 L967.7 660.7 L967.6 661.7 L967.4 662.7 L967.3 663.6 L967.2 664.6 L967.0 665.6 L966.9 666.5 L966.7 667.5 L966.5 668.4 L966.4 669.4 L966.2 670.4 L966.0 671.3 L965.8 672.3 L965.6 673.3 L965.4 674.2 L965.2 675.2 L964.9 676.2 L964.7 677.1 L964.5 678.1 L964.2 679.0 L963.9 680.0 L963.7 680.9 L963.4 681.9 L963.1 682.9 L962.8 683.8 L962.6 684.8 L962.2 685.7 L961.9 686.7 L961.6 687.6 L961.3 688.6 L961.0 689.5 L960.6 690.5 L960.3 691.4 L959.9 692.4 L959.6 693.3 L959.2 694.3 L958.8 695.2 L958.4 696.2 L958.1 697.1 L957.7 698.1 L957.2 699.0 L956.8 700.0 L956.4 700.9 L956.0 701.9 L955.6 702.8 L955.1 703.7 L954.7 704.7 L954.2 705.6 L953.7 706.5 L953.3 707.5 L952.8 708.4 L952.3 709.3 L951.8 710.3 L951.3 711.2 L950.8 712.1 L950.3 713.1 L949.8 714.0 L949.3 714.9 L948.7 715.8 L948.2 716.8 L947.6 717.7 L947.1 718.6 L946.5 719.5 L945.9 720.4 L945.4 721.4 L944.8 722.3 L944.2 723.2 L943.6 724.1 L943.0 725.0 L942.4 725.9 L941.7 726.8 L941.1 727.7 L940.5 728.6 L939.8 729.5 L939.2 730.4 L938.5 731.3 L937.9 732.2 L937.2 733.1 L936.5 734.0 L935.8 734.9 L935.1 735.8 L934.4 736.7 L933.7 737.6 L933.0 738.5 L932.3 739.4 L931.6 740.3 L930.9 741.1 L930.1 742.0 L929.4 742.9 L928.6 743.8 L927.9 744.6 L927.1 745.5 L926.3 746.4 L925.5 747.3 L924.8 748.1 L924.0 749.0 L923.2 749.9 L922.4 750.7 L921.6 751.6 L920.7 752.4 L919.9 753.3 L919.1 754.1 L918.2 755.0 L917.4 755.8 L916.5 756.7 L915.7 757.5 L914.8 758.4 L913.9 759.2 L913.1 760.1 L912.2 760.9 L911.3 761.7 L910.4 762.6 L909.5 763.4 L908.6 764.2 L907.7 765.1 L906.7 765.9 L905.8 766.7 L904.9 767.5 L903.9 768.3 L903.0 769.2 L902.0 770.0 L901.1 770.8 L900.1 771.6 L899.1 772.4 L898.1 773.2 L897.2 774.0 L896.2 774.8 L895.2 775.6 L894.2 776.4 L893.2 777.2 L892.1 778.0 L891.1 778.8 L890.1 779.5 L889.1 780.3 L888.0 781.1 L887.0 781.9 L885.9 782.7 L884.9 783.4 L883.8 784.2 L882.7 785.0 L881.6 785.7 L880.6 786.5 L879.5 787.3 L878.4 788.0 L877.3 788.8 L876.2 789.5 L875.1 790.3 L873.9 791.0 L872.8 791.8 L871.7 792.5 L870.6 793.2 L869.4 794.0 L868.3 794.7 L867.1 795.4 L866.0 796.2 L864.8 796.9 L863.6 797.6 L862.5 798.3 L861.3 799.0 L860.1 799.7 L858.9 800.5 L857.7 801.2 L856.5 801.9 L855.3 802.6 L854.1 803.3 L852.9 804.0 L851.7 804.7 L850.4 805.3 L849.2 806.0 L848.0 806.7 L846.7 807.4 L845.5 808.1 L844.2 808.7 L842.9 809.4 L841.7 810.1 L840.4 810.7 L839.1 811.4 L837.9 812.1 L836.6 812.7 L835.3 813.4 L834.0 814.0 L832.7 814.7 L831.4 815.3 L830.1 816.0 L828.8 816.6 L827.4 817.2 L826.1 817.9 L824.8 818.5 L823.5 819.1 L822.1 819.7 L820.8 820.3 L819.4 821.0 L818.1 821.6 L816.7 822.2 L815.4 822.8 L814.0 823.4 L812.6 824.0 L811.2 824.6 L809.9 825.2 L808.5 825.8 L807.1 826.3 L805.7 826.9 L804.3 827.5 L802.9 828.1 L801.5 828.6 L800.1 829.2 L798.7 829.8 L797.2 830.3 L795.8 830.9 L794.4 831.4 L793.0 832.0 L791.5 832.5 L790.1 833.1 L788.6 833.6 L787.2 834.2 L785.7 834.7 L784.3 835.2 L782.8 835.7 L781.3 836.3 L779.9 836.8 L778.4 837.3 L776.9 837.8 L775.4 838.3 L774.0 838.8 L772.5 839.3 L771.0 839.8 L769.5 840.3 L768.0 840.8 L766.5 841.3 L765.0 841.8 L763.5 842.3 L761.9 842.7 L760.4 843.2 L758.9 843.7 L757.4 844.1 L755.8 844.6 L754.3 845.0 L752.8 845.5 L751.2 846.0 L749.7 846.4 L748.1 846.8 L746.6 847.3 L745.0 847.7 L743.5 848.1 L741.9 848.6 L740.4 849.0 L738.8 849.4 L737.2 849.8 L735.7 850.2 L734.1 850.6 L732.5 851.0 L730.9 851.4 L729.3 851.8 L727.8 852.2 L726.2 852.6 L724.6 853.0 L723.0 853.4 L721.4 853.8 L719.8 854.1 L718.2 854.5 L716.6 854.9 L714.9 855.2 L713.3 855.6 L711.7 855.9 L710.1 856.3 L708.5 856.6 L706.9 857.0 L705.2 857.3 L703.6 857.6 L702.0 858.0 L700.3 858.3 L698.7 858.6 L697.1 858.9 L695.4 859.2 L693.8 859.6 L692.1 859.9 L690.5 860.2 L688.8 860.5 L687.2 860.8 L685.5 861.0 L683.9 861.3 L682.2 861.6 L680.6 861.9 L678.9 862.2 L677.2 862.4 L675.6 862.7 L673.9 863.0 L672.2 863.2 L670.6 863.5 L668.9 863.7 L667.2 864.0 L665.5 864.2 L663.8 864.4 L662.2 864.7 L660.5 864.9 L658.8 865.1 L657.1 865.3 L655.4 865.6 L653.7 865.8 L652.0 866.0 L650.3 866.2 L648.7 866.4 L647.0 866.6 L645.3 866.8 L643.6 866.9 L641.9 867.1 L640.2 867.3 L638.5 867.5 L636.8 867.7 L635.1 867.8 L633.3 868.0 L631.6 868.1 L629.9 868.3 L628.2 868.4 L626.5 868.6 L624.8 868.7 L623.1 868.9 L621.4 869.0 L619.7 869.1 L617.9 869.2 L616.2 869.4 L614.5 869.5 L612.8 869.6 L611.1 869.7 L609.4 869.8 L607.6 869.9 L605.9 870.0 L604.2 870.1 L602.5 870.2 L600.7 870.3 L599.0 870.3 L597.3 870.4 L595.6 870.5 L593.9 870.5 L592.1 870.6 L590.4 870.7 L588.7 870.7 L587.0 870.8 L585.2 870.8 L583.5 870.9 L581.8 870.9 L580.0 870.9 L578.3 870.9 L576.6 871.0 L574.9 871.0 L573.1 871.0 L571.4 871.0 L569.7 871.0 L568.0 871.0 L566.2 871.0 L564.5 871.0 L562.8 871.0 L561.1 871.0 L559.3 871.0 L557.6 870.9 L555.9 870.9 L554.2 870.9 L552.4 870.9 L550.7 870.8 L549.0 870.8 L547.3 870.7 L545.5 870.7 L543.8 870.6 L542.1 870.5 L540.4 870.5 L538.6 870.4 L536.9 870.3 L535.2 870.3 L533.5 870.2 L531.8 870.1 L530.1 870.0 L528.3 869.9 L526.6 869.8 L524.9 869.7 L523.2 869.6 L521.5 869.5 L519.8 869.4 L518.1 869.2 L516.3 869.1 L514.6 869.0 L512.9 868.9 L511.2 868.7 L509.5 868.6 L507.8 868.4 L506.1 868.3 L504.4 868.1 L502.7 868.0 L501.0 867.8 L499.3 867.7 L497.6 867.5 L495.9 867.3 L494.2 867.1 L492.5 866.9 L490.8 866.8 L489.2 866.6 L487.5 866.4 L485.8 866.2 L484.1 866.0 L482.4 865.8 L480.7 865.5 L479.1 865.3 L477.4 865.1 L475.7 864.9 L474.0 864.7 L472.4 864.4 L470.7 864.2 L469.0 864.0 L467.4 863.7 L465.7 863.5 L464.0 863.2 L462.4 863.0 L460.7 862.7 L459.1 862.4 L457.4 862.2 L455.8 861.9 L454.1 861.6 L452.5 861.3 L450.8 861.0 L449.2 860.8 L447.5 860.5 L445.9 860.2 L444.3 859.9 L442.6 859.6 L441.0 859.2 L439.4 858.9 L437.7 858.6 L436.1 858.3 L434.5 858.0 L432.9 857.6 L431.3 857.3 L429.7 857.0 L428.1 856.6 L426.4 856.3 L424.8 855.9 L423.2 855.6 L421.6 855.2 L420.1 854.9 L418.5 854.5 L416.9 854.1 L415.3 853.8 L413.7 853.4 L412.1 853.0 L410.5 852.6 L409.0 852.2 L407.4 851.8 L405.8 851.4 L404.3 851.0 L402.7 850.6 L401.2 850.2 L399.6 849.8 L398.0 849.4 L396.5 849.0 L395.0 848.6 L393.4 848.1 L391.9 847.7 L390.3 847.3 L388.8 846.8 L387.3 846.4 L385.8 845.9 L384.2 845.5 L382.7 845.0 L381.2 844.6 L379.7 844.1 L378.2 843.7 L376.7 843.2 L375.2 842.7 L373.7 842.2 L372.2 841.8 L370.7 841.3 L369.2 840.8 L367.8 840.3 L366.3 839.8 L364.8 839.3 L363.3 838.8 L361.9 838.3 L360.4 837.8 L359.0 837.3 L357.5 836.8 L356.1 836.3 L354.6 835.7 L353.2 835.2 L351.7 834.7 L350.3 834.2 L348.9 833.6 L347.5 833.1 L346.0 832.5 L344.6 832.0 L343.2 831.4 L341.8 830.9 L340.4 830.3 L339.0 829.8 L337.6 829.2 L336.2 828.6 L334.9 828.1 L333.5 827.5 L332.1 826.9 L330.7 826.3 L329.4 825.7 L328.0 825.2 L326.7 824.6 L325.3 824.0 L324.0 823.4 L322.6 822.8 L321.3 822.2 L320.0 821.6 L318.6 821.0 L317.3 820.3 L316.0 819.7 L314.7 819.1 L313.4 818.5 L312.1 817.8 L310.8 817.2 L309.5 816.6 L308.2 815.9 L306.9 815.3 L305.6 814.7 L304.4 814.0 L303.1 813.4 L301.8 812.7 L300.6 812.1 L299.3 811.4 L298.1 810.7 L296.8 810.1 L295.6 809.4 L294.4 808.7 L293.1 808.1 L291.9 807.4 L290.7 806.7 L289.5 806.0 L288.3 805.3 L287.1 804.6 L285.9 804.0 L284.7 803.3 L283.5 802.6 L282.4 801.9 L281.2 801.2 L280.0 800.4 L278.9 799.7 L277.7 799.0 L276.6 798.3 L275.4 797.6 L274.3 796.9 L273.2 796.1 L272.0 795.4 L270.9 794.7 L269.8 794.0 L268.7 793.2 L267.6 792.5 L266.5 791.7 L265.4 791.0 L264.3 790.3 L263.2 789.5 L262.2 788.8 L261.1 788.0 L260.0 787.2 L259.0 786.5 L257.9 785.7 L256.9 785.0 L255.8 784.2 L254.8 783.4 L253.8 782.7 L252.8 781.9 L251.7 781.1 L250.7 780.3 L249.7 779.5 L248.7 778.8 L247.8 778.0 L246.8 777.2 L245.8 776.4 L244.8 775.6 L243.9 774.8 L242.9 774.0 L242.0 773.2 L241.0 772.4 L240.1 771.6 L239.1 770.8 L238.2 770.0 L237.3 769.2 L236.4 768.3 L235.5 767.5 L234.6 766.7 L233.7 765.9 L232.8 765.1 L231.9 764.2 L231.0 763.4 L230.2 762.6 L229.3 761.7 L228.4 760.9 L227.6 760.1 L226.8 759.2 L225.9 758.4 L225.1 757.5 L224.3 756.7 L223.4 755.8 L222.6 755.0 L221.8 754.1 L221.0 753.3 L220.3 752.4 L219.5 751.6 L218.7 750.7 L217.9 749.8 L217.2 749.0 L216.4 748.1 L215.7 747.2 L214.9 746.4 L214.2 745.5 L213.5 744.6 L212.7 743.8 L212.0 742.9 L211.3 742.0 L210.6 741.1 L209.9 740.2 L209.2 739.4 L208.5 738.5 L207.9 737.6 L207.2 736.7 L206.6 735.8 L205.9 734.9 L205.3 734.0 L204.6 733.1 L204.0 732.2 L203.4 731.3 L202.7 730.4 L202.1 729.5 L201.5 728.6 L200.9 727.7 L200.3 726.8 L199.8 725.9 L199.2 725.0 L198.6 724.1 L198.1 723.2 L197.5 722.3 L197.0 721.3 L196.4 720.4 L195.9 719.5 L195.4 718.6 L194.8 717.7 L194.3 716.8 L193.8 715.8 L193.3 714.9 L192.8 714.0 L192.4 713.1 L191.9 712.1 L191.4 711.2 L191.0 710.3 L190.5 709.3 L190.1 708.4 L189.6 707.5 L189.2 706.5 L188.8 705.6 L188.4 704.7 L188.0 703.7 L187.6 702.8 L187.2 701.8 L186.8 700.9 L186.4 700.0 L186.0 699.0 L185.7 698.1 L185.3 697.1 L184.9 696.2 L184.6 695.2 L184.3 694.3 L183.9 693.3 L183.6 692.4 L183.3 691.4 L183.0 690.5 L182.7 689.5 L182.4 688.6 L182.1 687.6 L181.9 686.7 L181.6 685.7 L181.3 684.8 L181.1 683.8 L180.8 682.9 L180.6 681.9 L180.4 680.9 L180.1 680.0 L179.9 679.0 L179.7 678.1 L179.5 677.1 L179.3 676.1 L179.1 675.2 L178.9 674.2 L178.8 673.3 L178.6 672.3 L178.5 671.3 L178.3 670.4 L178.2 669.4 L166.3 587.3 L166.2 586.4 L166.1 585.5 L165.9 584.5 L165.8 583.6 L165.7 582.6 L165.6 581.6 L165.6 580.7 L165.5 579.7 L165.4 578.8 L165.3 577.8 L165.3 576.9 L165.2 575.9 L165.2 575.0 L165.2 574.0 L165.1 573.1 L165.1 572.1 L165.1 571.2Z" fill="none" stroke="#000" stroke-width="1.1"/>
  <path d="M976.7 566.2A405.8 218.3 -0.35 1 1 165.1 571.2A405.8 218.3 -0.35 1 1 976.7 566.2Z" fill="none" stroke="#000" stroke-width="1.1"/>
  <path d="M933.5 559.7A361.5 194.1 -0.40 1 1 210.5 564.7A361.5 194.1 -0.40 1 1 933.5 559.7Z" fill="none" stroke="#000" stroke-width="1.1"/>
  <path d="M925.4 558.7A353.7 189.6 -0.40 1 1 218.0 563.6A353.7 189.6 -0.40 1 1 925.4 558.7Z" fill="none" stroke="#000" stroke-width="1.1"/>
  <path d="M225 604 L228 614 L226 617 L223 608Z M919 603 L922 597 L920 612 L917 616Z" fill="#fff"/>
 </g>
 <g clip-path="url(#itclip)"><g clip-path="url(#ibclip)"><path d="M868.1 608.4A296.0 153.0 -1.00 1 1 276.1 618.8A296.0 153.0 -1.00 1 1 868.1 608.4Z" fill="none" stroke="#000" stroke-opacity=".045" stroke-width="18" filter="url(#blur6)"/></g></g>
 <path d="M868.1 608.4A296.0 153.0 -1.00 1 1 276.1 618.8A296.0 153.0 -1.00 1 1 868.1 608.4Z" fill="none" stroke="#000" stroke-width="1.4" clip-path="url(#itclip)"/>
 <path d="M882.9 553.1A311.1 165.3 -0.24 1 1 260.7 555.7A311.1 165.3 -0.24 1 1 882.9 553.1Z" fill="none" stroke="#000" stroke-width="1.1"/>
 <path d="M366.5 468.9 L404 487.7" stroke="#ff6060" stroke-width="1.3"/>
 <path d="M724.5 482.5 L763 459.7" stroke="#5fe05f" stroke-width="1.3"/>
 <path d="M236 773.4 L268 754.4" stroke="#5fe05f" stroke-width="1.2"/>
 <path d="M160 367 L268 421" stroke="#fff" stroke-width="1.6" stroke-dasharray="1 1.2"/>
 <path d="M925 749.7 L1040 807.2" stroke="#fff" stroke-width="1.6" stroke-dasharray="1 1.2"/>
 <path d="M897 735.7 L925 749.7" stroke="#ff7a7a" stroke-width="1.2" stroke-dasharray="1 1.2"/>
</g>
</svg>
<div id="title" class="a"></div>
<!-- fusion logo -->
<svg style="left:9px;top:6px" width="16" height="18" viewBox="0 0 16 18">
 <path d="M1.5 2.5 L3 2 L3 12 L1.5 12 Z" fill="#ff8a3c"/>
 <rect x="3" y="1" width="11" height="12" rx="1" fill="#ff6a00"/>
 <path d="M12.5 3 L14.5 3.8 L14.5 16 L12.5 16Z" fill="#b84a00"/>
 <rect x="3" y="11" width="11.5" height="5.5" rx="0.8" fill="#b34800"/>
 <path d="M6.6 3.8 H10.4 V5.3 H8.3 V6.6 H10 V8 H8.3 V10 H6.6Z" fill="#fff"/>
 <rect x="6" y="13" width="6" height="1.6" fill="#f3c9a8"/>
</svg>
<div class="t" style="left:30px;top:10px;font-size:12.4px;color:#666">Autodesk Fusion 360 (Personal - Not for Commercial Use)</div>
<div class="a" style="left:391px;top:0;width:48px;height:2px;background:#0a63c9;z-index:60"></div>
<!-- window controls -->
<div class="a" style="left:1082px;top:15px;width:10px;height:1px;background:#6a6a6a"></div>
<div class="a" style="left:1127px;top:10px;width:10px;height:10px;border:1px solid #6a6a6a"></div>
<svg style="left:1172px;top:9px" width="12" height="12" viewBox="0 0 12 12"><path d="M1 1L11 11M11 1L1 11" stroke="#5a5a5a" stroke-width="1"/></svg>

<div id="tabbar" class="a"></div>
<!-- left toolbar icons -->
<svg style="left:10px;top:40px" width="15" height="15" viewBox="0 0 15 15" fill="#5f5f5f">
 <rect x="0" y="0" width="4" height="4" rx=".6"/><rect x="5.5" y="0" width="4" height="4" rx=".6"/><rect x="11" y="0" width="4" height="4" rx=".6"/>
 <rect x="0" y="5.5" width="4" height="4" rx=".6"/><rect x="5.5" y="5.5" width="4" height="4" rx=".6"/><rect x="11" y="5.5" width="4" height="4" rx=".6"/>
 <rect x="0" y="11" width="4" height="4" rx=".6"/><rect x="5.5" y="11" width="4" height="4" rx=".6"/><rect x="11" y="11" width="4" height="4" rx=".6"/>
</svg>
<svg style="left:43px;top:39px" width="28" height="17" viewBox="0 0 28 17" fill="#5f5f5f">
 <path d="M0.5 0.5 H8.5 L13 5 V16.5 H0.5Z"/><path d="M9 0.5 L13 4.5 H9Z" fill="#cbcbcb"/><path d="M9.6 1.2 L12.3 3.9 H9.6Z"/>
 <path d="M19 5 H26 L22.5 9Z"/>
</svg>
<svg style="left:88px;top:40px" width="15" height="15" viewBox="0 0 15 15" fill="#5f5f5f">
 <path d="M0 1 Q0 0 1 0 H12 L15 3 V14 Q15 15 14 15 H2 L0 13Z"/>
 <rect x="3" y="1.5" width="8" height="4" fill="#cbcbcb"/><rect x="4" y="9" width="7" height="6" fill="#cbcbcb"/><rect x="5.5" y="10.5" width="4" height="4.5" fill="#5f5f5f"/>
</svg>
<svg style="left:120px;top:39px" width="30" height="17" viewBox="0 0 30 17">
 <path d="M5 3 L1.5 6.5 L5 10" fill="none" stroke="#5f5f5f" stroke-width="2"/>
 <path d="M2 6.5 H8.5 Q13.5 6.5 13.5 11.5 V15" fill="none" stroke="#5f5f5f" stroke-width="2"/>
 <path d="M21 5 H28 L24.5 9Z" fill="#5f5f5f"/>
</svg>
<svg style="left:160px;top:39px" width="30" height="17" viewBox="0 0 30 17">
 <path d="M10 3 L13.5 6.5 L10 10" fill="none" stroke="#8f8f8f" stroke-width="2"/>
 <path d="M13 6.5 H6.5 Q1.5 6.5 1.5 11.5 V15" fill="none" stroke="#8f8f8f" stroke-width="2"/>
 <path d="M20 5 H27 L23.5 9Z" fill="#8f8f8f"/>
</svg>
<!-- tabs -->
<div class="tab" style="left:194px;width:184px"></div>
<div class="tab" style="left:382px;width:184px"></div>
<div class="tab" style="left:570px;width:184px;background:#f1f1f1"></div>
<div class="tab" style="left:758px;width:184px"></div>
<div class="tab" style="left:946px;width:28px;background:#bcbcbc"></div>
<svg style="left:202px;top:41px" width="13" height="16" viewBox="0 0 13 16"><path d="M3 7 V4.5 Q3 1 6.5 1 Q10 1 10 4.5 V7" fill="none" stroke="#7a7a7a" stroke-width="1.8"/><rect x="0.5" y="6.5" width="12" height="9" rx="1" fill="#7a7a7a"/><rect x="2.5" y="9" width="8" height="1" fill="#bcbcbc"/><rect x="2.5" y="11.5" width="8" height="1" fill="#bcbcbc"/></svg>
<div class="t tabtxt" style="left:221px">linear ball …5x8 (CTC) v2</div>
<svg style="left:363px;top:45px" width="8" height="8" viewBox="0 0 8 8"><path d="M.5 .5L7.5 7.5M7.5 .5L.5 7.5" stroke="#6e6e6e" stroke-width="1.3"/></svg>
<svg style="left:401px;top:41px" width="13" height="16" viewBox="0 0 13 16"><path d="M3 7 V4.5 Q3 1 6.5 1 Q10 1 10 4.5 V7" fill="none" stroke="#7a7a7a" stroke-width="1.8"/><rect x="0.5" y="6.5" width="12" height="9" rx="1" fill="#7a7a7a"/><rect x="2.5" y="9" width="8" height="1" fill="#bcbcbc"/><rect x="2.5" y="11.5" width="8" height="1" fill="#bcbcbc"/></svg>
<div class="t tabtxt" style="left:420px">45 bearing testing v6*</div>
<svg style="left:551px;top:45px" width="8" height="8" viewBox="0 0 8 8"><path d="M.5 .5L7.5 7.5M7.5 .5L.5 7.5" stroke="#6e6e6e" stroke-width="1.3"/></svg>
<svg style="left:615px;top:41px" width="17" height="16" viewBox="0 0 17 16"><path d="M1 2.5 L8 1 L16 2.5 L16 11 L8 15 L1 12Z" fill="#6e6e6e"/><path d="M1 2.5 L8 4.5 L8 15 L1 12Z" fill="#b5b5b5"/><path d="M1 2.5 L8 1 L16 2.5 L8 4.5Z" fill="#8c8c8c"/></svg>
<div class="t tabtxt" style="left:636px;color:#333">bearing v3*</div>
<svg style="left:739px;top:45px" width="8" height="8" viewBox="0 0 8 8"><path d="M.5 .5L7.5 7.5M7.5 .5L.5 7.5" stroke="#555" stroke-width="1.3"/></svg>
<svg style="left:812px;top:41px" width="13" height="16" viewBox="0 0 13 16"><path d="M3 7 V4.5 Q3 1 6.5 1 Q10 1 10 4.5 V7" fill="none" stroke="#7a7a7a" stroke-width="1.8"/><rect x="0.5" y="6.5" width="12" height="9" rx="1" fill="#7a7a7a"/><rect x="2.5" y="9" width="8" height="1" fill="#bcbcbc"/><rect x="2.5" y="11.5" width="8" height="1" fill="#bcbcbc"/></svg>
<div class="t tabtxt" style="left:831px">Untitled*</div>
<svg style="left:927px;top:45px" width="8" height="8" viewBox="0 0 8 8"><path d="M.5 .5L7.5 7.5M7.5 .5L.5 7.5" stroke="#6e6e6e" stroke-width="1.3"/></svg>
<svg style="left:953px;top:41px" width="14" height="14" viewBox="0 0 14 14"><path d="M7 0V14M0 7H14" stroke="#7a7a7a" stroke-width="2.6"/></svg>
<!-- right icons -->
<svg style="left:984px;top:37px" width="20" height="20" viewBox="984 37 20 20"><path d="M986 39 H994.5 V43.8 H999 L992.5 50.3 V55 H986Z" fill="#666"/><path d="M995.6 39 L999.2 42.6 H995.6Z" fill="#666"/><path d="M994.5 51.5 L1000.5 45.5 L1002.3 47.3 L996.3 53.3Z" fill="#666"/><path d="M993.6 52.4 L995.4 54.2 L992.6 55.2Z" fill="#666"/></svg>
<div class="t" style="left:1005px;top:42px;font-size:11.2px;color:#333">9 of 10</div>
<svg style="left:1062px;top:39px" width="18" height="18" viewBox="0 0 18 18"><circle cx="9" cy="9" r="8" fill="none" stroke="#666" stroke-width="1.3"/><circle cx="9" cy="9" r="6" fill="none" stroke="#666" stroke-width="1.4"/><path d="M9 5V9.5H12.5" fill="none" stroke="#666" stroke-width="1.5"/></svg>
<svg style="left:1096px;top:38px" width="17" height="19" viewBox="0 0 17 19"><path d="M8 2.5 Q3 3 3 8.5 V12 L1 14.5 H15 L13 12 V8.5 Q13 3 8 2.5Z" fill="#5f5f5f"/><rect x="7" y="1" width="2" height="2" fill="#5f5f5f"/><path d="M6 15.5 Q8 18.5 10 15.5Z" fill="#5f5f5f"/><circle cx="12.5" cy="3.5" r="3" fill="#0696d7"/></svg>
<svg style="left:1128px;top:39px" width="18" height="18" viewBox="0 0 18 18"><circle cx="9" cy="9" r="8.5" fill="#5f5f5f"/><path d="M6 7 Q6 4 9 4 Q12 4 12 7 Q12 8.5 10 9.5 Q9 10 9 11.5" fill="none" stroke="#cbcbcb" stroke-width="2"/><circle cx="9" cy="14" r="1.2" fill="#cbcbcb"/></svg>
<svg style="left:1163px;top:33px" width="27" height="27" viewBox="0 0 27 27"><defs><radialGradient id="av" cx=".5" cy=".4" r=".6"><stop offset="0" stop-color="#c3d0de"/><stop offset="1" stop-color="#8a9cb2"/></radialGradient></defs><circle cx="13.5" cy="13.5" r="12.5" fill="url(#av)"/><path d="M13.5 4 Q19 4 19 10 Q19 14 16.5 16 Q22 17.5 23 21 Q19 26 13.5 26 Q8 26 4 21 Q5 17.5 10.5 16 Q8 14 8 10 Q8 4 13.5 4Z" fill="#4f5a6a"/></svg>
<div id="ribbon" class="a"></div>
<div class="a" style="left:13px;top:74px;width:109px;height:60px;border:1px solid #d9d9d9;border-radius:5px"></div>
<div class="t" style="left:42px;top:98px;font-size:11px;font-weight:700;color:#333">DESIGN</div>
<svg style="left:88px;top:101px" width="7" height="4" viewBox="0 0 7 4"><path d="M0 0H7L3.5 4Z" fill="#333"/></svg>
<div class="t rtab" style="left:152px;color:#0696d7">SOLID</div>
<div class="a" style="left:140px;top:84px;width:57px;height:3px;background:#0696d7;border-radius:1px"></div>
<div class="t rtab" style="left:229px">SURFACE</div>
<div class="t rtab" style="left:327px">MESH</div>
<div class="t rtab" style="left:405px">SHEET METAL</div>
<div class="t rtab" style="left:528px">PLASTIC</div>
<div class="t rtab" style="left:621px">UTILITIES</div>
<div class="sep" style="left:223px"></div>
<div class="sep" style="left:492px"></div>
<div class="sep" style="left:590px"></div>
<div class="sep" style="left:694px"></div>
<div class="sep" style="left:777px"></div>
<div class="sep" style="left:918px"></div>
<div class="t rlab" style="left:148px">CREATE</div>
<div class="t rlab" style="left:331px">MODIFY</div>
<div class="t rlab" style="left:507px">ASSEMBLE</div>
<div class="t rlab" style="left:604px">CONSTRUCT</div>
<div class="t rlab" style="left:708px">INSPECT</div>
<div class="t rlab" style="left:823px">INSERT</div>
<div class="t rlab" style="left:933px">SELECT</div>
<svg style="left:0;top:0" width="1202" height="145" viewBox="0 0 1202 145">
 <g fill="#333">
  <path d="M194 132H200L197 135.5Z"/><path d="M376 132H382L379 135.5Z"/><path d="M569 132H575L572 135.5Z"/>
  <path d="M676 132H682L679 135.5Z"/><path d="M758 132H764L761 135.5Z"/><path d="M866 132H872L869 135.5Z"/><path d="M977 132H983L980 135.5Z"/>
 </g>
 <!-- new component -->
 <path d="M138 98.5 L142 94.3 H153.7 L150.3 98.5Z" fill="#8ecbf5"/>
 <rect x="138" y="98.5" width="12.3" height="11.2" fill="#64aee6"/>
 <path d="M150.3 98.5 L153.7 94.3 V106 L150.3 109.7Z" fill="#4a94d0"/>
 <path d="M150.3 109.7 L154 106 H165.5 L162 109.7Z" fill="#efefef"/>
 <rect x="138" y="109.7" width="24" height="11.8" fill="#d8d8d8"/>
 <path d="M162 109.7 L165.5 106 V117.5 L162 121.5Z" fill="#bdbdbd"/>
 <path d="M138.5 109.7 V121.5 H162 L165.5 117.5 V106 H154 L150.3 109.7 V121.5 M150.3 109.7 H162 V121.5 M162 109.7 L165.5 106" fill="none" stroke="#666" stroke-width="1"/>
 <path d="M161.6 90.3 L162.9 95.4 L167.4 92.7 L164.7 97.2 L169.8 98.5 L164.7 99.8 L167.4 104.3 L162.9 101.6 L161.6 106.7 L160.3 101.6 L155.8 104.3 L158.5 99.8 L153.4 98.5 L158.5 97.2 L155.8 92.7 L160.3 95.4Z" fill="#f5a300"/>
 <!-- create sketch -->
 <g fill="#555"><rect x="181" y="90" width="3" height="3"/><rect x="208" y="90" width="3" height="3"/><rect x="181" y="117" width="3" height="3"/><rect x="188" y="97" width="3" height="3"/><rect x="201" y="97" width="3" height="3"/><rect x="188" y="110" width="3" height="3"/></g>
 <path d="M185.5 91.5 H206.5 M182.5 94.5 V115.5 M185.5 118.5 H199 M209.5 94.5 V107.5 M191.5 98.5 H200.5 M189.5 100.5 V108.5 M202.8 101 Q200 109 192 111.6" fill="none" stroke="#555" stroke-width="1"/>
 <path d="M206 108.2V121.7M199 114.9H212.8" stroke="#22aa44" stroke-width="3.6"/>
 <!-- press pull -->
 <path d="M236.5 121.5 V96 L242 90.5 H247 V121.5Z" fill="#e2e2e2" stroke="#555" stroke-width="1"/>
 <path d="M243 96 L249 90 H258 L252.2 96Z" fill="#8ecbf5"/>
 <rect x="243" y="96" width="9.2" height="25.8" fill="#64aee6"/>
 <path d="M252.2 96 L258 90 V116 L252.2 121.8Z" fill="#4a94d0"/>
 <path d="M254 105 H261" stroke="#fff" stroke-width="3.5"/>
 <path d="M255 105 H262" stroke="#333" stroke-width="1.4"/><path d="M261 102 L265 105 L261 108Z" fill="#333"/>
 <!-- fillet -->
 <path d="M278.5 121.5 V97.5 L285 90.5 H295 Q308 94 310 104 V114.5 L302.5 121.5Z" fill="#dadada" stroke="#555" stroke-width="1"/>
 <path d="M285 90.5 H295 L290 96.5 H280Z" fill="#ececec"/>
 <path d="M290 96.5 Q302 98 303.5 110 L310 104 Q308 92 295 90.5Z" fill="#64aee6"/>
 <path d="M303.5 110 L310 104 V114.5 L302.5 121.5 V110Z" fill="#bdbdbd"/>
 <path d="M278.5 121.5 V97.5 L285 90.5 H295 Q308 94 310 104 V114.5 L302.5 121.5Z" fill="none" stroke="#555" stroke-width="1"/>
 <!-- shell -->
 <path d="M321.5 97.5 L328.5 90.5 H352.5 L345.5 97.5Z" fill="#efefef" stroke="#555" stroke-width="1"/>
 <rect x="321.5" y="97.5" width="24" height="24" fill="#dadada" stroke="#555" stroke-width="1"/>
 <path d="M345.5 97.5 L352.5 90.5 V114.5 L345.5 121.5Z" fill="#bdbdbd" stroke="#555" stroke-width="1"/>
 <rect x="324.5" y="101" width="17.5" height="17" fill="#f0f0f0"/>
 <path d="M325 102 H332.7 V110 L325 117.3Z" fill="#3d8ad0"/>
 <path d="M332.7 110 H341.2 V117.3 H325Z" fill="#8ecbf5"/>
 <!-- combine -->
 <path d="M374 94 L378 90 H396 L392 94Z" fill="#8ecbf5"/>
 <rect x="374" y="94" width="18" height="18" fill="#64aee6"/>
 <path d="M392 94 L396 90 V108 L392 112Z" fill="#4a94d0"/>
 <path d="M364 104 L368 100 H378 L374 104Z" fill="#8ecbf5"/>
 <rect x="364" y="104" width="18" height="18" fill="#64aee6"/>
 <path d="M382 112 L386 108 V118 L382 122Z" fill="#4a94d0"/>
 <!-- split body -->
 <path d="M409 95 L414 90 H437 L431 95Z" fill="#8ecbf5"/>
 <rect x="409" y="95" width="22" height="10.5" fill="#64aee6"/>
 <path d="M431 95 L437 90 V100 L431 105.5Z" fill="#4a94d0"/>
 <path d="M409.5 110.5 H431 V120.5 H409.5Z" fill="#d8d8d8" stroke="#555" stroke-width="1"/>
 <path d="M431 110.5 L437 105.5 V115.5 L431 120.5Z" fill="#bdbdbd" stroke="#555" stroke-width="1"/>
 <path d="M407 108.3 H431 L439 100.8" fill="none" stroke="#fff" stroke-width="3.5"/>
 <path d="M407 108.3 H431 L439 100.8" fill="none" stroke="#1f86e0" stroke-width="1.6"/>
 <!-- move -->
 <g fill="#333"><path d="M466 91 L471 97 H467.2 V105 H475 V101 L481 106 L475 111 V107 H467.2 V115 H471 L466 121 L461 115 H464.8 V107 H457 V111 L451 106 L457 101 V105 H464.8 V97 H461Z"/></g>
 <!-- assemble new component -->
 <g transform="translate(366 0)">
 <path d="M138 98.5 L142 94.3 H153.7 L150.3 98.5Z" fill="#8ecbf5"/>
 <rect x="138" y="98.5" width="12.3" height="11.2" fill="#64aee6"/>
 <path d="M150.3 98.5 L153.7 94.3 V106 L150.3 109.7Z" fill="#4a94d0"/>
 <path d="M150.3 109.7 L154 106 H165.5 L162 109.7Z" fill="#efefef"/>
 <rect x="138" y="109.7" width="24" height="11.8" fill="#d8d8d8"/>
 <path d="M162 109.7 L165.5 106 V117.5 L162 121.5Z" fill="#bdbdbd"/>
 <path d="M138.5 109.7 V121.5 H162 L165.5 117.5 V106 H154 L150.3 109.7 V121.5 M150.3 109.7 H162 V121.5 M162 109.7 L165.5 106" fill="none" stroke="#666" stroke-width="1"/>
 <path d="M161.6 90.3 L162.9 95.4 L167.4 92.7 L164.7 97.2 L169.8 98.5 L164.7 99.8 L167.4 104.3 L162.9 101.6 L161.6 106.7 L160.3 101.6 L155.8 104.3 L158.5 99.8 L153.4 98.5 L158.5 97.2 L155.8 92.7 L160.3 95.4Z" fill="#f5a300"/>
 </g>
 <!-- joint -->
 <path d="M549.5 99 L556.5 92.5 V113.5 L549.5 119Z" fill="#c8c8c8" stroke="#555" stroke-width="1" stroke-linejoin="round"/>
 <path d="M556 93 Q556 91.5 559 91.5 Q562 91.5 562 93 V103 Q562 104.5 559 104.5 Q556 104.5 556 103Z" fill="#e0e0e0" stroke="#555" stroke-width="1"/>
 <ellipse cx="559" cy="94" rx="1.8" ry=".8" fill="#888"/>
 <path d="M558.5 105.5V110" stroke="#1f86e0" stroke-width="1.2"/>
 <path d="M569.5 94.5 L576.5 101 V119.5 L569.5 113Z" fill="#dadada" stroke="#555" stroke-width="1" stroke-linejoin="round"/>
 <path d="M564.5 102.5 Q564.5 101 567 101 Q569.5 101 569.5 102.5 V112 Q569.5 113.5 567 113.5 Q564.5 113.5 564.5 112Z" fill="#c8c8c8" stroke="#555" stroke-width="1"/>
 <path d="M567.5 98 V103.5" stroke="#1f86e0" stroke-width="1.2"/>
 <!-- construct -->
 <path d="M628.5 99.2 L637 90.5 H644.5 L637 99.2Z" fill="#fafafa"/>
 <rect x="628.5" y="99.2" width="8.5" height="21.3" fill="#d8d8d8"/>
 <path d="M636 120.5 H628.5 V99.2 L637 90.5 H644.5" fill="none" stroke="#666" stroke-width="1"/>
 <path d="M637.2 99 L645.8 90.2 V111.5 L637.2 120.5Z" fill="#5cc17a"/>
 <path d="M649.2 99.5 L658 90.2 V112 L649.2 120.8Z" fill="#e59a68"/>
 <!-- inspect -->
 <path d="M723.5 98 V107 M750.5 98 V107 M724 102.5 H750" stroke="#666" stroke-width="1.1" fill="none"/>
 <path d="M724 102.5 L728 100 V105Z M750 102.5 L746 100 V105Z" fill="#666"/>
 <rect x="723" y="108" width="28" height="5.8" fill="#f5a300"/>
 <path d="M725.5 108v1.8M728.5 108v1.2M731.5 108v1.8M734.5 108v1.2M737.5 108v1.8M740.5 108v1.2M743.5 108v1.8M746.5 108v1.2M749.5 108v1.8" stroke="#7a5a10" stroke-width=".8"/>
 <!-- insert svg -->
 <path d="M796.5 109 V90.6 H810.8 M822 101 V109" fill="none" stroke="#666" stroke-width="1"/>
 <rect x="797" y="91.1" width="24.5" height="18" fill="#fafafa"/>
 <path d="M812 90.5 V99.5 H821.5Z" fill="#eea920"/>
 <rect x="796" y="109" width="26" height="12.7" fill="#e8a21c"/>
 <g fill="#222"><circle cx="801.5" cy="115.5" r="2.8" fill="none" stroke="#222" stroke-width="1.1"/><circle cx="804.80" cy="115.50" r=".9"/><circle cx="803.83" cy="117.83" r=".9"/><circle cx="801.50" cy="118.80" r=".9"/><circle cx="799.17" cy="117.83" r=".9"/><circle cx="798.20" cy="115.50" r=".9"/><circle cx="799.17" cy="113.17" r=".9"/><circle cx="801.50" cy="112.20" r=".9"/><circle cx="803.83" cy="113.17" r=".9"/></g>
 <text x="806.3" y="119.3" font-family="Liberation Sans" font-size="8.6" font-weight="700" fill="#fff" textLength="15" lengthAdjust="spacingAndGlyphs">SVG</text>
 <rect x="790" y="98.8" width="9" height="2.8" fill="#1a88e0"/>
 <path d="M798 94.5 L807.5 100.2 L798 106Z" fill="#1a88e0"/>
 <!-- insert derive -->
 <path d="M838.5 99.8 L845 92.3 H864 L857.5 99.8Z" fill="#fafafa"/>
 <rect x="838.5" y="99.8" width="19" height="18.7" fill="#e2e3e8"/>
 <path d="M857.5 99.8 L864 92.3 V112 L857.5 118.5Z" fill="#c9cdd5"/>
 <path d="M838.5 118.5 V99.8 L845 92.3 H864 V112 L857.5 118.5Z M857.5 99.8 H838.5 M857.5 99.8 L864 92.3" fill="none" stroke="#333" stroke-width="1"/>
 <path d="M838.5 100.3 H857" stroke="#fafafa" stroke-width="1"/>
 <path d="M834.5 113.5 Q837 107.5 843 107.5 V103.8 L850 108.7 L843 113.8 V110.5 Q838 110.5 834.5 113.5Z" fill="#333a40" stroke="#fafafa" stroke-width=".8"/>
 <!-- canvas -->
 <rect x="877" y="91" width="29" height="29" fill="#85c5f5"/>
 <path d="M877 111.2 Q882 102 887.5 102.5 Q892 103.5 895.4 113 Q898 109.5 901.5 109.5 Q904 110 906 113.8 V120 H877Z" fill="#3f8fd2"/>
 <circle cx="898.5" cy="98" r="3" fill="#fbf0b0"/>
 <!-- select -->
 <rect x="942.5" y="90.5" width="28" height="21" fill="none" stroke="#2aa545" stroke-dasharray="3 2"/>
 <path d="M963 104.5 V117 L966 114.5 L968.5 120 L970.5 119 L968 113.5 H972Z" fill="#fff" stroke="#333" stroke-width="1"/>
</svg>
<!-- origin widget & manipulators -->
<svg style="left:0;top:0" width="1202" height="1040" viewBox="0 0 1202 1040">
 <defs><linearGradient id="arcg" gradientUnits="userSpaceOnUse" x1="677" y1="555" x2="560" y2="634"><stop offset="0" stop-color="#c5d2de" stop-opacity="0"/><stop offset=".15" stop-color="#c0cedb"/><stop offset=".85" stop-color="#c0cedb"/><stop offset="1" stop-color="#c5d2de" stop-opacity="0"/></linearGradient></defs>
 <path d="M573 580 V640" stroke="#e2e2e2" stroke-width="2" stroke-dasharray="3 2.5"/>
 <path d="M573 477 V567" stroke="#2a86ec" stroke-width="2.2"/>
 <path d="M675.5 557 A104 60.5 0 0 1 573 633.5 L555 633.5" fill="none" stroke="url(#arcg)" stroke-width="1.3"/>
 <ellipse cx="650" cy="612" rx="12" ry="8" fill="#fff" stroke="#d3dbe3" stroke-width="1"/>
 <ellipse cx="650" cy="612" rx="10" ry="6.3" fill="#bde0f3"/>
 <path d="M641 607.6 L670 622" stroke="#ff7a7a" stroke-width="1.2"/>
 <ellipse cx="573" cy="573.4" rx="10" ry="5.5" fill="#9a9a9a" opacity=".55"/>
 <circle cx="573" cy="573.4" r="5.4" fill="#2e2e2e"/>
 <circle cx="573" cy="573.4" r="3.5" fill="#8060c0"/>
 <circle cx="573" cy="573.4" r="1.2" fill="#1a1a1a"/>
 <ellipse cx="486.6" cy="530.3" rx="3.8" ry="1.9" transform="rotate(26.6 486.6 530.3)" fill="#fff" stroke="#aaa" stroke-width=".8"/>
 <ellipse cx="651.7" cy="525.2" rx="3.8" ry="1.9" transform="rotate(-30.7 651.7 525.2)" fill="#fff" stroke="#aaa" stroke-width=".8"/>
 <!-- profile sketch -->
 <g stroke-linejoin="round">
 <path d="M818.2 655.1 L855.9 673.3 L855.9 680 C845 676 829 682 825 700 C822 718 838 742 849.2 748.7 L849.2 755.4 L812.8 736.6Z" fill="#3b64a2" fill-opacity=".5" stroke="#cdc9c1" stroke-width="5"/>
 <path d="M862.6 676 L902.3 694.8 L892.9 776.3 L856.6 756.8 L857.9 751.4 C870 754 890 745 888.9 722 C886 700 872 688 862.6 684Z" fill="#3b64a2" fill-opacity=".5" stroke="#cdc9c1" stroke-width="5"/>
 <path d="M849.2 755.4 L812.8 736.6 L818.2 655.1 L850 670.5" fill="none" stroke="#2b74dc" stroke-width="2.2"/>
 <path d="M866 678 L902.3 694.8 L892.9 776.3 L858 758" fill="none" stroke="#2b74dc" stroke-width="2.2"/>
 <path d="M855.9 673.3 L855.9 680 C845 676 829 682 825 700 C822 718 838 742 849.2 748.7 L849.2 755.4" fill="none" stroke="#ff1010" stroke-width="2"/>
 <path d="M862.6 676 L862.6 684 C872 688 886 700 888.9 722 C890 745 870 754 857.9 751.4 L856.6 756.8" fill="none" stroke="#ff1010" stroke-width="2"/>
 </g>
 <path d="M855 676 L853 757 M859 677 L857.5 756" stroke="#444" stroke-opacity=".6" stroke-width="1" stroke-dasharray="5 2"/>
 <path d="M821 659 L891 772 M899 697 L815 733" stroke="#222" stroke-opacity=".45" stroke-width=".8" stroke-dasharray="5 4"/>
 <circle cx="855.5" cy="714.5" r="3.2" fill="#2a2a2a"/>
</svg>
<!-- angle input -->
<div class="a" style="left:692px;top:613px;width:108px;height:22px;background:#efefef"></div>
<div class="a" style="left:697px;top:615px;width:1px;height:18px;border-left:1px dotted #999"></div>
<div class="a" style="left:700px;top:614px;width:1px;height:20px;background:#bbb"></div>
<div class="a" style="left:706px;top:614px;width:70px;height:20px;background:#fff;border:1px solid #bdbdbd"></div>
<div class="a" style="left:716px;top:618px;width:50px;height:13px;background:#0a64cf"></div>
<div class="t" style="left:716px;top:619px;font-size:11px;color:#fff">360.0 deg</div>
<div class="a" style="left:765px;top:617px;width:1px;height:14px;background:#000"></div>
<svg style="left:786px;top:617px" width="4" height="14" viewBox="0 0 4 14"><circle cx="2" cy="2" r="1.5" fill="#777"/><circle cx="2" cy="7" r="1.5" fill="#777"/><circle cx="2" cy="12" r="1.5" fill="#777"/></svg>
<!-- tooltip -->
<div class="a" style="left:1072px;top:760px;width:140px;height:17px;background:#f8f8f8;border:1px solid #777"></div>
<div class="t" style="left:1075px;top:762px;font-family:'Liberation Serif',serif;font-size:14px;color:#000">Select sketch profiles or</div>

<!-- viewcube -->
<svg style="left:1080px;top:160px" width="110" height="115" viewBox="1080 160 110 115">
 <defs>
  <radialGradient id="cubesh" cx=".5" cy=".5" r=".5"><stop offset="0" stop-color="#000" stop-opacity=".22"/><stop offset="1" stop-color="#000" stop-opacity="0"/></radialGradient>
  <linearGradient id="cubef" x1="0" y1="0" x2="0" y2="1"><stop offset="0" stop-color="#f4f4f4"/><stop offset="1" stop-color="#dedede"/></linearGradient>
  <linearGradient id="cuber" x1="0" y1="0" x2="0" y2="1"><stop offset="0" stop-color="#ececec"/><stop offset="1" stop-color="#d6d6d6"/></linearGradient>
 </defs>
 <ellipse cx="1145" cy="243" rx="38" ry="20" fill="url(#cubesh)"/>
 <g opacity=".82">
 <path d="M1103 191 L1137 176 L1172 190 L1140 209Z" fill="#f2f2f2"/>
 <path d="M1103 191 L1140 209 L1140 251 L1105 232Z" fill="url(#cubef)"/>
 <path d="M1140 209 L1172 190 L1169 230 L1140 251Z" fill="url(#cuber)"/>
 </g>
 <path d="M1134 204 L1140 201 L1146 204 L1146 212 L1140 215 L1134 212Z" fill="#e6e8ec" opacity=".8"/>
 <g fill="none" stroke="#6a6a6a" stroke-width=".8" stroke-dasharray="2.5 1.8">
  <path d="M1103 191 L1137 176 L1172 190 M1103 191 L1140 209 L1172 190 M1140 209 V251"/>
 </g>
 <path d="M1172 190 L1169 230 L1140 251" fill="none" stroke="#8a8a8a" stroke-width=".8"/>
 <text x="0" y="0" font-family="Liberation Sans" font-size="7.6" fill="#777" font-weight="700" transform="matrix(1 0.45 0 1 1110 217)">FRONT</text>
 <text x="0" y="0" font-family="Liberation Sans" font-size="7.2" fill="#777" font-weight="700" transform="matrix(1 -0.6 0 1 1147 229)">RIGHT</text>
 <text x="0" y="0" font-family="Liberation Sans" font-size="7" fill="#888" font-weight="700" transform="matrix(1 0.42 -0.9 0.4 1133 188)">TOP</text>
 <path d="M1105 232 L1101 185" stroke="#5a5aff" stroke-width="1.6"/>
 <path d="M1105 232 L1146 257" stroke="#f08a8a" stroke-width="2"/>
 <text x="1096" y="182" font-family="Liberation Sans" font-size="12" fill="#6b6bff">Z</text>
 <text x="1147" y="266" font-family="Liberation Sans" font-size="12" fill="#ff7a7a">X</text>
</svg>

<!-- EDIT FEATURE panel -->
<div class="a" style="left:947px;top:272px;width:250px;height:243px;background:#f1f1f1;border:1px solid #cbcbcb"></div>
<div class="a" style="left:948px;top:296px;width:248px;height:1px;background:#d0d0d0"></div>
<div class="a" style="left:949px;top:279px;width:1px;height:11px;background:#666"></div>
<div class="a" style="left:951px;top:281px;width:1px;height:8px;background:#aaa"></div>
<svg style="left:958px;top:279px" width="11" height="11" viewBox="0 0 11 11"><circle cx="5.5" cy="5.5" r="5" fill="#222"/><rect x="2.5" y="4.7" width="6" height="1.6" fill="#fff"/></svg>
<div class="t" style="left:972px;top:279px;font-size:11px;color:#555">EDIT FEATURE</div>
<svg style="left:1182px;top:281px" width="10" height="8" viewBox="0 0 10 8"><path d="M0 0V8L5 4Z M5 0V8L10 4Z" fill="#222"/></svg>

<div class="t efl" style="left:960px;top:307px">Profile</div>
<div class="a" style="left:1021px;top:298px;width:78px;height:27px;background:#0696d7;border-radius:2px"></div>
<svg style="left:1028px;top:304px" width="11" height="16" viewBox="0 0 11 16"><path d="M1 1 V13.5 L4 10.5 L6.5 15 L8.3 14 L6 9.5 H10Z" fill="#0696d7" stroke="#fff" stroke-width="1.2" stroke-linejoin="round"/></svg>
<div class="t" style="left:1043px;top:307px;font-size:11px;color:#fff">2 selected</div>
<svg style="left:1110px;top:307px" width="9" height="9" viewBox="0 0 9 9"><path d="M.5 .5L8.5 8.5M8.5 .5L.5 8.5" stroke="#333" stroke-width="1.8"/></svg>

<div class="t efl" style="left:960px;top:337px">Axis</div>
<div class="a fld" style="left:1021px;top:329px;width:77px;height:26px"></div>
<svg style="left:1028px;top:334px" width="11" height="16" viewBox="0 0 11 16"><path d="M1 1 V13.5 L4 10.5 L6.5 15 L8.3 14 L6 9.5 H10Z" fill="#fff" stroke="#555" stroke-width="1" stroke-linejoin="round"/></svg>
<div class="t" style="left:1043px;top:337px;font-size:11px;color:#222">1 selected</div>
<svg style="left:1109px;top:337px" width="9" height="9" viewBox="0 0 9 9"><path d="M.5 .5L8.5 8.5M8.5 .5L.5 8.5" stroke="#333" stroke-width="1.8"/></svg>

<div class="t efl" style="left:960px;top:367px">Type</div>
<div class="a fld" style="left:1021px;top:359px;width:143px;height:26px"></div>
<svg style="left:1025px;top:365px" width="16" height="13" viewBox="0 0 16 13"><path d="M1 5 L8 12 L15 5" fill="none" stroke="#333" stroke-width="1.1"/><path d="M2 4 Q8 0 14 3" fill="none" stroke="#333" stroke-width="1.1"/><path d="M12 1.5 L14.5 3 L12 5" fill="none" stroke="#333" stroke-width="1"/></svg>
<div class="t" style="left:1045px;top:367px;font-size:11px;color:#222">Angle</div>
<svg style="left:1153px;top:370px" width="7" height="4" viewBox="0 0 7 4"><path d="M0 0H7L3.5 4Z" fill="#222"/></svg>

<div class="t efl" style="left:960px;top:397px">Angle</div>
<div class="a fld" style="left:1022px;top:389px;width:142px;height:25px"></div>
<div class="t" style="left:1025px;top:397px;font-size:11px;color:#222">360.0 deg</div>

<div class="t efl" style="left:960px;top:427px">Direction</div>
<div class="a fld" style="left:1021px;top:419px;width:143px;height:26px"></div>
<svg style="left:1025px;top:424px" width="16" height="16" viewBox="0 0 16 16"><path d="M6 1 L15 3.5 V9.5 L8 7.5Z" fill="#eaa37a"/><path d="M10 6 L1.5 14.5 M1.5 10.5 V14.5 H5.5" fill="none" stroke="#555" stroke-width="1.3"/></svg>
<div class="t" style="left:1045px;top:427px;font-size:11px;color:#222">One Side</div>
<svg style="left:1153px;top:430px" width="7" height="4" viewBox="0 0 7 4"><path d="M0 0H7L3.5 4Z" fill="#222"/></svg>

<div class="t efl" style="left:960px;top:457px">Operation</div>
<div class="a fld" style="left:1021px;top:449px;width:143px;height:26px"></div>
<svg style="left:1024px;top:453px" width="17" height="17" viewBox="0 0 17 17"><path d="M1 5 Q1 3 6.5 3 Q12 3 12 5 V14 Q12 16 6.5 16 Q1 16 1 14Z" fill="#ddd" stroke="#555" stroke-width="1"/><path d="M1 5 Q1 7 6.5 7 Q12 7 12 5" fill="none" stroke="#555"/><path d="M13 0.5 L13.8 2.8 L16 2 L14.9 4 L17 5 L14.9 5.8 L16 8 L13.8 7.2 L13 9.5 L12.2 7.2 L10 8 L11.1 5.8 L9 5 L11.1 4 L10 2 L12.2 2.8Z" fill="#f29e18"/></svg>
<div class="t" style="left:1045px;top:457px;font-size:11px;color:#222">New Body</div>
<svg style="left:1153px;top:460px" width="7" height="4" viewBox="0 0 7 4"><path d="M0 0H7L3.5 4Z" fill="#222"/></svg>

<div class="a" style="left:948px;top:478px;width:248px;height:1px;background:#d0d0d0"></div>
<svg style="left:956px;top:490px" width="12" height="12" viewBox="0 0 12 12"><circle cx="6" cy="6" r="6" fill="#111"/><rect x="5" y="5" width="2" height="4.5" fill="#fff"/><circle cx="6" cy="3.2" r="1.1" fill="#fff"/></svg>
<div class="a" style="left:1055px;top:487px;width:60px;height:19px;background:#e3e3e3;border:1px solid #c3c3c3"></div>
<div class="t" style="left:1076px;top:491px;font-size:12px;color:#555">OK</div>
<div class="a" style="left:1125px;top:487px;width:60px;height:19px;background:#e3e3e3;border:1px solid #c3c3c3"></div>
<div class="t" style="left:1136px;top:491px;font-size:12px;color:#333">Cancel</div>
<div class="a" style="left:1px;top:145px;width:1200px;height:3px;background:linear-gradient(#ececec,#f6f6f6)"></div>
<!-- BROWSER -->
<div class="a" style="left:5px;top:152px;width:300px;height:25px;background:#efefef;border:1px solid #cdcdcd"></div>
<svg style="left:10px;top:160px" width="11" height="8" viewBox="0 0 11 8"><path d="M5 0V8L0 4Z M10.5 0V8L5.5 4Z" fill="#333"/></svg>
<div class="t" style="left:30px;top:159px;font-size:11px;color:#555">BROWSER</div>
<svg style="left:283px;top:159px" width="11" height="11" viewBox="0 0 11 11"><circle cx="5.5" cy="5.5" r="5" fill="#222"/><rect x="2.5" y="4.7" width="6" height="1.6" fill="#fff"/></svg>
<div class="a" style="left:300px;top:158px;width:1px;height:12px;background:#666"></div>
<div class="a" style="left:302px;top:160px;width:1px;height:9px;background:#aaa"></div>

<div class="brow" style="left:41px;top:182px;width:153px"></div>
<svg style="left:21px;top:185px" width="13" height="13" viewBox="0 0 13 13"><defs><linearGradient id="trg" x1="0" y1="0" x2="1" y2="1"><stop offset="0" stop-color="#ddd"/><stop offset="1" stop-color="#777"/></linearGradient></defs><path d="M12 1V12H1Z" fill="url(#trg)" stroke="#222" stroke-width="1.2" stroke-linejoin="round"/></svg>
<div class="a" style="left:43px;top:184px;width:3px;height:16px;background:#4fd0d8"></div>
<svg style="left:49px;top:186px" width="17" height="12" viewBox="0 0 17 12"><path d="M0.5 6 Q8.5 -2.5 16.5 6 Q8.5 14.5 0.5 6Z" fill="#9a9a9a"/><circle cx="8.5" cy="6" r="3" fill="#ececec"/><circle cx="8.5" cy="6" r="1.6" fill="#8f8f8f"/></svg>
<div class="a" style="left:71px;top:184px;width:98px;height:16px;background:#9a9a9a"></div>
<svg style="left:0;top:0" width="100" height="210" viewBox="0 0 100 210"><path d="M74.5 199 V188 L78 184.5 H84.5 V191 L80.5 194.5 H89.5 V199Z" fill="#f4f4f4"/><path d="M80.5 194.5 L84 191 H89.5 L86 194.5Z" fill="#fff"/><path d="M74.5 199 V188 L78 184.5 H84.5 V191 M74.5 188 H81 L84.5 184.5 M81 188 V199 M80.5 194.5 H86 L89.5 191 H84.5 M86 194.5 V199 M89.5 191 V196 L86.5 199 H74.5" fill="none" stroke="#444" stroke-width="1" stroke-linejoin="round"/></svg>
<div class="t btxt" style="left:104px;top:187px;color:#fff;font-weight:700">bearing v3</div>
<svg style="left:172px;top:185px" width="15" height="15" viewBox="0 0 15 15"><circle cx="7.5" cy="7.5" r="6" fill="#fff" stroke="#333" stroke-width="1.1"/><circle cx="7.5" cy="7.5" r="2.2" fill="#222"/></svg>

<div class="brow" style="left:59px;top:206px;width:138px"></div>
<svg style="left:40px;top:209px" width="11" height="15" viewBox="0 0 11 15"><path d="M1 1.5 L9.5 7.5 L1 13.5Z" fill="#e4e6ea" stroke="#2a2a2a" stroke-width="1.2" stroke-linejoin="round"/></svg>
<svg style="left:62px;top:208px" width="17" height="17" viewBox="-8.5 -8.5 17 17"><g fill="#999"><circle r="6"/><rect x="-1.8" y="-8.3" width="3.6" height="4.5" transform="rotate(0)"/><rect x="-1.8" y="-8.3" width="3.6" height="4.5" transform="rotate(45)"/><rect x="-1.8" y="-8.3" width="3.6" height="4.5" transform="rotate(90)"/><rect x="-1.8" y="-8.3" width="3.6" height="4.5" transform="rotate(135)"/><rect x="-1.8" y="-8.3" width="3.6" height="4.5" transform="rotate(180)"/><rect x="-1.8" y="-8.3" width="3.6" height="4.5" transform="rotate(225)"/><rect x="-1.8" y="-8.3" width="3.6" height="4.5" transform="rotate(270)"/><rect x="-1.8" y="-8.3" width="3.6" height="4.5" transform="rotate(315)"/></g><circle r="2.6" fill="#ececec"/></svg>
<div class="t btxt" style="left:92px;top:211px">Document Settings</div>

<div class="brow" style="left:59px;top:230px;width:110px"></div>
<svg style="left:40px;top:233px" width="11" height="15" viewBox="0 0 11 15"><path d="M1 1.5 L9.5 7.5 L1 13.5Z" fill="#e4e6ea" stroke="#2a2a2a" stroke-width="1.2" stroke-linejoin="round"/></svg>
<svg style="left:62px;top:234px" width="17" height="13" viewBox="0 0 17 13"><path d="M0 1 H6 L7.5 2.5 H17 V13 H0Z" fill="#8a8a8a"/><rect x="0" y="4" width="17" height="1" fill="#bdbdbd"/></svg>
<div class="t btxt" style="left:92px;top:235px">Named Views</div>

<div class="brow" style="left:59px;top:254px;width:99px"></div>
<svg style="left:40px;top:257px" width="11" height="15" viewBox="0 0 11 15"><path d="M1 1.5 L9.5 7.5 L1 13.5Z" fill="#e4e6ea" stroke="#2a2a2a" stroke-width="1.2" stroke-linejoin="round"/></svg>
<svg style="left:61px;top:258px" width="18" height="13" viewBox="0 0 18 13"><path d="M1 6.5 Q9 -1 17 6.5 Q9 14 1 6.5Z" fill="none" stroke="#9a9a9a" stroke-width="1.2"/><circle cx="9" cy="6.5" r="2.2" fill="none" stroke="#9a9a9a" stroke-width="1.2"/><path d="M3 12 L15 1" stroke="#9a9a9a" stroke-width="1.3"/></svg>
<svg style="left:87px;top:258px" width="17" height="13" viewBox="0 0 17 13"><path d="M0 1 H6 L7.5 2.5 H17 V13 H0Z" fill="#8a8a8a"/><rect x="0" y="4" width="17" height="1" fill="#bdbdbd"/></svg>
<div class="t btxt" style="left:117px;top:259px">Origin</div>

<div class="brow" style="left:59px;top:278px;width:111px"></div>
<svg style="left:40px;top:281px" width="11" height="15" viewBox="0 0 11 15"><path d="M1 1.5 L9.5 7.5 L1 13.5Z" fill="#e4e6ea" stroke="#2a2a2a" stroke-width="1.2" stroke-linejoin="round"/></svg>
<svg style="left:61px;top:282px" width="18" height="13" viewBox="0 0 18 13"><path d="M1 6.5 Q9 -1 17 6.5 Q9 14 1 6.5Z" fill="none" stroke="#9a9a9a" stroke-width="1.2"/><circle cx="9" cy="6.5" r="2.2" fill="none" stroke="#9a9a9a" stroke-width="1.2"/><path d="M3 12 L15 1" stroke="#9a9a9a" stroke-width="1.3"/></svg>
<svg style="left:87px;top:282px" width="17" height="13" viewBox="0 0 17 13"><path d="M0 1 H6 L7.5 2.5 H17 V13 H0Z" fill="#8a8a8a"/><rect x="0" y="4" width="17" height="1" fill="#bdbdbd"/></svg>
<div class="t btxt" style="left:117px;top:283px">Analysis</div>

<div class="brow" style="left:59px;top:302px;width:144px"></div>
<svg style="left:39px;top:305px" width="13" height="13" viewBox="0 0 13 13"><path d="M12 1V12H1Z" fill="url(#trg)" stroke="#222" stroke-width="1.2" stroke-linejoin="round"/></svg>
<div class="a" style="left:59px;top:302px;width:4px;height:20px;background:#b4e46a"></div>
<svg style="left:66px;top:306px" width="17" height="12" viewBox="0 0 17 12"><path d="M1 6 Q8.5 -1.5 16 6 Q8.5 13.5 1 6Z" fill="#8f8f8f"/><circle cx="8.5" cy="6" r="3" fill="#ececec"/><circle cx="8.5" cy="6" r="1.6" fill="#8f8f8f"/></svg>
<svg style="left:91px;top:304px" width="17" height="16" viewBox="0 0 17 16"><path d="M1.5 4 L4.5 1 H15.5 V12 L12.5 15 H1.5Z" fill="#e4e6ec" stroke="#333" stroke-width="1"/><path d="M1.5 4 H12.5 V15 M12.5 4 L15.5 1" fill="none" stroke="#333"/></svg>
<div class="t btxt" style="left:122px;top:307px">Component1:1</div>
<svg style="left:89px;top:317px" width="112" height="5" viewBox="0 0 112 5"><path d="M0 4 L3 1 M6 4 L9 1 M12 4 L15 1 M18 4 L21 1 M24 4 L27 1 M30 4 L33 1 M36 4 L39 1 M42 4 L45 1 M48 4 L51 1 M54 4 L57 1 M60 4 L63 1 M66 4 L69 1 M72 4 L75 1 M78 4 L81 1 M84 4 L87 1 M90 4 L93 1 M96 4 L99 1 M102 4 L105 1 M108 4 L111 1" stroke="#5a7fae" stroke-width="1.6"/></svg>

<div class="brow" style="left:77px;top:326px;width:99px"></div>
<svg style="left:58px;top:329px" width="11" height="15" viewBox="0 0 11 15"><path d="M1 1.5 L9.5 7.5 L1 13.5Z" fill="#e4e6ea" stroke="#2a2a2a" stroke-width="1.2" stroke-linejoin="round"/></svg>
<svg style="left:79px;top:330px" width="18" height="13" viewBox="0 0 18 13"><path d="M1 6.5 Q9 -1 17 6.5 Q9 14 1 6.5Z" fill="none" stroke="#9a9a9a" stroke-width="1.2"/><circle cx="9" cy="6.5" r="2.2" fill="none" stroke="#9a9a9a" stroke-width="1.2"/><path d="M3 12 L15 1" stroke="#9a9a9a" stroke-width="1.3"/></svg>
<svg style="left:105px;top:330px" width="17" height="13" viewBox="0 0 17 13"><path d="M0 1 H6 L7.5 2.5 H17 V13 H0Z" fill="#8a8a8a"/><rect x="0" y="4" width="17" height="1" fill="#bdbdbd"/></svg>
<div class="t btxt" style="left:135px;top:331px">Origin</div>
<svg style="left:101px;top:341px" width="72" height="5" viewBox="0 0 72 5"><path d="M0 4 L3 1 M6 4 L9 1 M12 4 L15 1 M18 4 L21 1 M24 4 L27 1 M30 4 L33 1 M36 4 L39 1 M42 4 L45 1 M48 4 L51 1 M54 4 L57 1 M60 4 L63 1 M66 4 L69 1" stroke="#5a7fae" stroke-width="1.6"/></svg>

<div class="brow" style="left:77px;top:350px;width:115px"></div>
<svg style="left:58px;top:353px" width="11" height="15" viewBox="0 0 11 15"><path d="M1 1.5 L9.5 7.5 L1 13.5Z" fill="#e4e6ea" stroke="#2a2a2a" stroke-width="1.2" stroke-linejoin="round"/></svg>
<svg style="left:80px;top:354px" width="17" height="12" viewBox="0 0 17 12"><path d="M1 6 Q8.5 -1.5 16 6 Q8.5 13.5 1 6Z" fill="#8f8f8f"/><circle cx="8.5" cy="6" r="3" fill="#ececec"/><circle cx="8.5" cy="6" r="1.6" fill="#8f8f8f"/></svg>
<svg style="left:105px;top:354px" width="17" height="13" viewBox="0 0 17 13"><path d="M0 1 H6 L7.5 2.5 H17 V13 H0Z" fill="#8a8a8a"/><rect x="0" y="4" width="17" height="1" fill="#bdbdbd"/></svg>
<div class="t btxt" style="left:135px;top:355px">Sketches</div>
<svg style="left:101px;top:365px" width="90" height="5" viewBox="0 0 90 5"><path d="M0 4 L3 1 M6 4 L9 1 M12 4 L15 1 M18 4 L21 1 M24 4 L27 1 M30 4 L33 1 M36 4 L39 1 M42 4 L45 1 M48 4 L51 1 M54 4 L57 1 M60 4 L63 1 M66 4 L69 1 M72 4 L75 1 M78 4 L81 1 M84 4 L87 1" stroke="#5a7fae" stroke-width="1.6"/></svg>

<!-- COMMENTS -->
<div class="a" style="left:5px;top:960px;width:300px;height:25px;background:#efefef;border:1px solid #cdcdcd"></div>
<div class="t" style="left:30px;top:967px;font-size:11px;color:#555">COMMENTS</div>
<svg style="left:283px;top:967px" width="11" height="11" viewBox="0 0 11 11"><circle cx="5.5" cy="5.5" r="5" fill="#222"/><path d="M2.5 5.5H8.5M5.5 2.5V8.5" stroke="#fff" stroke-width="1.6"/></svg>
<div class="a" style="left:300px;top:966px;width:1px;height:12px;background:#666"></div>
<div class="a" style="left:302px;top:968px;width:1px;height:9px;background:#aaa"></div>

<!-- NAV BAR -->
<div class="a" style="left:482px;top:961px;width:237px;height:24px;background:#efefef"></div>
<svg style="left:482px;top:961px" width="237" height="24" viewBox="482 961 237 24">
 <g fill="none" stroke="#333" stroke-width="1.2">
  <path d="M493 965 V981 M490.5 968 L493 965 L495.5 968"/>
  <path d="M499 972 Q501 976 493 977 Q486 977 486 974.5 Q486 972 490 971.5"/>
  <path d="M488 975 L486.5 977.5 L489.5 978.5"/>
 </g>
 <path d="M506 971H511L508.5 974Z" fill="#333"/>
 <g fill="none" stroke="#333" stroke-width="1.1"><rect x="518.5" y="969.5" width="15" height="10"/><rect x="522" y="972.5" width="8" height="3.5" fill="#999"/><path d="M521 969.5 L522 966 L529 967.5 L531 965.5"/></g>
 <path d="M548 981 Q544 977 544.5 972 Q545 970.5 546.5 971.5 L548 974 V966 Q548.5 964.5 550 965.5 V972 V964 Q551 962.5 552.5 964 V972 V965 Q553.5 963.5 555 965 V972 V967 Q556 965.5 557.5 967 V975 Q557.5 979.5 555 981Z" fill="#fff" stroke="#333" stroke-width="1"/>
 <circle cx="575" cy="974" r="4.5" fill="#e8f2fb" stroke="#333" stroke-width="1.4"/><path d="M578.5 977.5 L582 981" stroke="#333" stroke-width="2.2"/><path d="M581 966 H587 M584 963.5 V968.5 M581 970.5 H587" stroke="#333" stroke-width="1"/>
 <circle cx="602" cy="973" r="5.5" fill="none" stroke="#333" stroke-width="1.4"/><rect x="599" y="970" width="6" height="6" fill="#e8f2fb" stroke="#333" stroke-width="1"/><path d="M606 977 L610.5 981.5" stroke="#333" stroke-width="2.2"/>
 <path d="M617 971H622L619.5 974Z" fill="#333"/>
 <rect x="629.5" y="965.5" width="15" height="11" fill="#8fb3e0" stroke="#333" stroke-width="1.2"/><path d="M634 979.5 H640 M637 977 V979.5" stroke="#333" stroke-width="1.2"/>
 <path d="M648 971H653L650.5 974Z" fill="#333"/>
 <g stroke="#555" stroke-width="1"><rect x="660.5" y="965.5" width="15" height="15" fill="none"/><path d="M663.5 965.5V980.5M666.5 965.5V980.5M669.5 965.5V980.5M672.5 965.5V980.5M660.5 968.5H675.5M660.5 971.5H675.5M660.5 974.5H675.5M660.5 977.5H675.5"/></g>
 <path d="M680 971H685L682.5 974Z" fill="#333"/>
 <g fill="#8fb3e0" stroke="#333" stroke-width="1.1"><rect x="691.5" y="966.5" width="5.5" height="5"/><rect x="698" y="966.5" width="5.5" height="5"/><rect x="691.5" y="972.5" width="5.5" height="5"/><rect x="698" y="972.5" width="5.5" height="5"/></g>
 <path d="M709 971H714L711.5 974Z" fill="#333"/>
</svg>
<div class="t" style="left:1083px;top:968px;font-size:11px;font-weight:700;color:#333">Multiple selections</div>

<!-- TIMELINE -->
<div class="a" style="left:0;top:989px;width:1202px;height:51px;background:#f1f1f1;border-top:1px solid #d2d2d2"></div>
<svg style="left:0;top:989px" width="1202" height="51" viewBox="0 989 1202 51">
 <g fill="#3a3a3a">
  <rect x="12" y="1006" width="2" height="15"/><path d="M25 1006 V1021 L15 1013.5Z"/>
  <path d="M46 1006 V1021 L36 1013.5Z"/><rect x="47" y="1009" width="2" height="9"/>
  <path d="M62 1006 V1021 L74 1013.5Z"/>
  <rect x="86" y="1009" width="2" height="9"/><path d="M89 1006 V1021 L99 1013.5Z"/>
  <path d="M111 1006 V1021 L121 1013.5Z"/><rect x="122" y="1006" width="2" height="15"/>
 </g>
 <path d="M155 1029.5 H348 M155 1024 V1030 M179 1024 V1030 M203 1024 V1030 M227 1024 V1030 M251 1024 V1030 M275 1024 V1030 M299 1024 V1030 M323 1024 V1030 M347 1024 V1030" stroke="#c4c4c4" stroke-width="1.2" fill="none"/>
 <rect x="145" y="997" width="20" height="6" fill="#5fd4dc"/>
 <path d="M148 1002 L151 998 M152.5 1002 L155.5 998 M157 1002 L160 998" stroke="#333" stroke-width="1.4"/>
 <rect x="169" y="997" width="44" height="6" fill="#b4e46a"/>
 <path d="M147.5 1010 L150.5 1007 H158 V1018 L155.5 1020.5 H147.5Z" fill="#ddd" stroke="#444" stroke-width="1"/>
 <path d="M158 1004 L159 1007 L162 1006 L160 1008.5 L162.5 1010 L159.5 1010.5 L160 1013.5 L158 1011.5 L156 1013.5 L156.5 1010.5 L153.5 1010 L156 1008.5 L154 1006 L157 1007Z" fill="#f29e18"/>
 <rect x="167" y="1001" width="24" height="24" rx="2" fill="#0e8fd6"/>
 <rect x="172.5" y="1006.5" width="12" height="12" fill="none" stroke="#333" stroke-width="1.2" stroke-dasharray="2 1"/>
 <path d="M181 1021 L187 1015 L189 1017 L183 1023Z" fill="#f5b342"/><path d="M187 1015 L189 1017 L190 1016 L188 1014Z" fill="#e04040"/>
 <path d="M196 1012 Q203 1008 210 1012 V1019 Q203 1023 196 1019Z" fill="#5aa6e6" stroke="#333" stroke-width="1"/>
 <path d="M197 1008 Q203 1003 210 1007" fill="none" stroke="#333" stroke-width="1.2"/>
 <path d="M209 999 H221 V1003 L216 1008 H214 L209 1003Z" fill="#555"/><rect x="214" y="1003" width="2.5" height="28" fill="#555"/>
 <g opacity="0.35">
  <rect x="221.5" y="1007.5" width="13" height="13" fill="none" stroke="#7aa0c8" stroke-dasharray="2 2"/>
  <path d="M229 1020 L235 1014 L236.5 1015.5 L230.5 1021.5Z" fill="#f5b342"/>
  <path d="M244 1008 L247 1005 H255 V1017 L252 1020 H244Z" fill="#b7d3ee" stroke="#999"/>
  <path d="M268 1020 V1010 L272 1005 H281 Q283 1012 283 1020Z" fill="#ddd" stroke="#888"/><path d="M270 1012 L276 1006 L281 1010 L275 1015Z" fill="#9cc3ea"/>
  <circle cx="299" cy="1013" r="7.5" fill="#b7d3ee"/>
  <path d="M323 1005 V1021 M315 1013 H331 M320.5 1007.5 L323 1005 L325.5 1007.5 M320.5 1018.5 L323 1021 L325.5 1018.5 M317.5 1010.5 L315 1013 L317.5 1015.5 M328.5 1010.5 L331 1013 L328.5 1015.5" stroke="#888" stroke-width="1.5" fill="none"/>
  <g fill="#9cc3ea"><circle cx="348" cy="1006" r="1.8"/><circle cx="353" cy="1010" r="1.8"/><circle cx="353" cy="1016" r="1.8"/><circle cx="348" cy="1020" r="1.8"/><circle cx="343" cy="1016" r="1.8"/></g><circle cx="342.5" cy="1010" r="1.5" fill="none" stroke="#888"/>
 </g>
 <g transform="translate(1180 1014)" fill="#8c8c8c"><circle r="5.8"/><rect x="-1.6" y="-8" width="3.2" height="4" transform="rotate(0)"/><rect x="-1.6" y="-8" width="3.2" height="4" transform="rotate(45)"/><rect x="-1.6" y="-8" width="3.2" height="4" transform="rotate(90)"/><rect x="-1.6" y="-8" width="3.2" height="4" transform="rotate(135)"/><rect x="-1.6" y="-8" width="3.2" height="4" transform="rotate(180)"/><rect x="-1.6" y="-8" width="3.2" height="4" transform="rotate(225)"/><rect x="-1.6" y="-8" width="3.2" height="4" transform="rotate(270)"/><rect x="-1.6" y="-8" width="3.2" height="4" transform="rotate(315)"/><circle r="2.6" fill="#f1f1f1"/></g>
</svg>
<div id="win"></div></body></html>
